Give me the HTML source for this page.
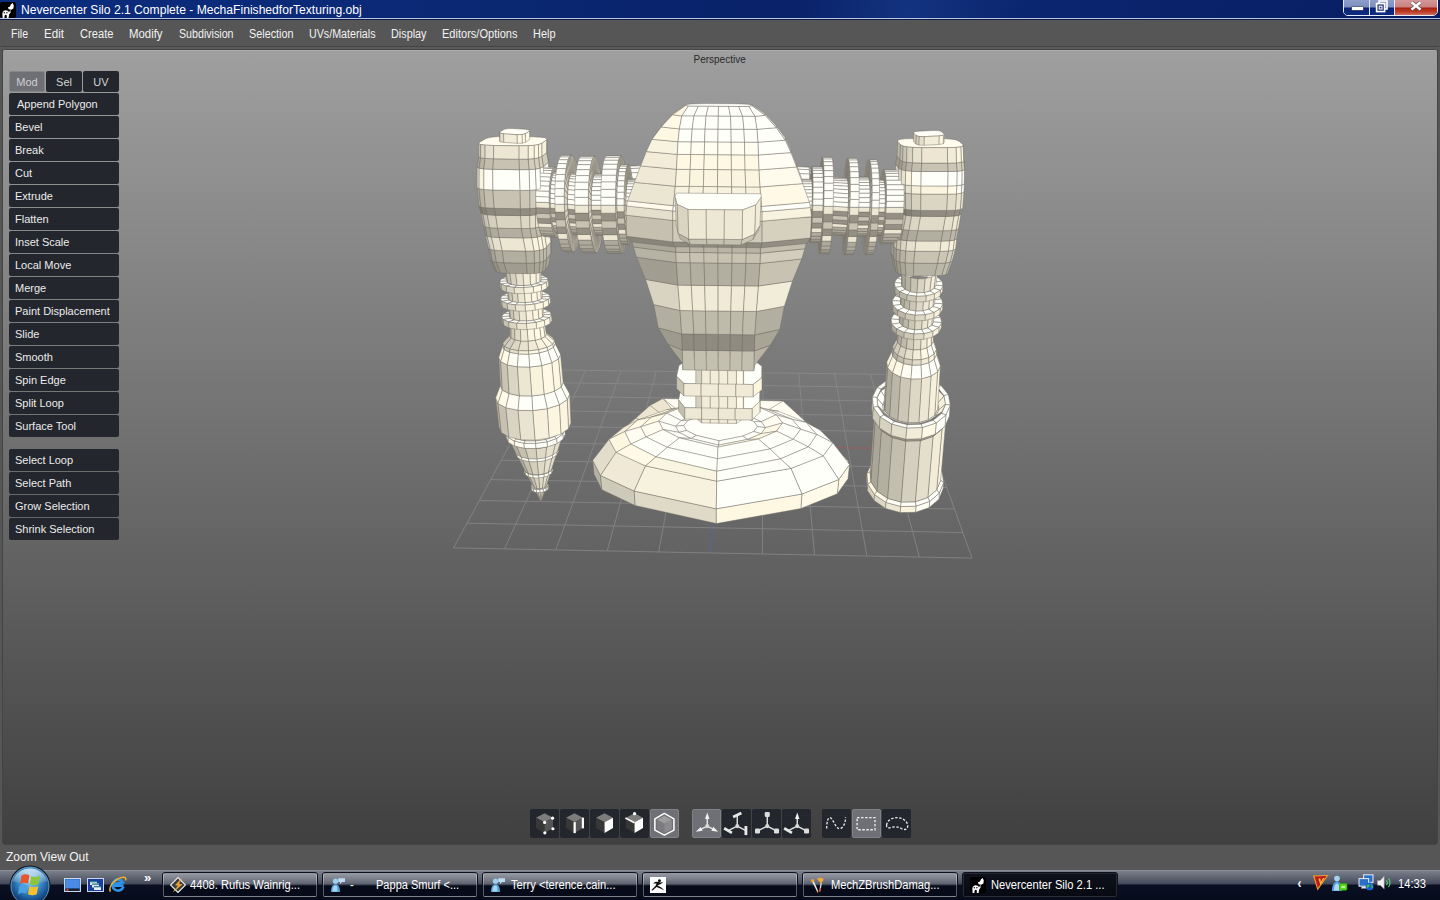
<!DOCTYPE html>
<html><head><meta charset="utf-8"><title>Nevercenter Silo 2.1 Complete - MechaFinishedforTexturing.obj</title>
<style>
*{box-sizing:border-box;margin:0;padding:0}
html,body{width:1440px;height:900px;overflow:hidden;background:#565656;font-family:"Liberation Sans",sans-serif}
.abs{position:absolute}
#title{position:absolute;left:0;top:0;width:1440px;height:20px;background:linear-gradient(100deg,#0c2c7e 0,#0a2874 30%,#092269 55%,#13327f 63%,#0b2670 71%,#071d62 100%);}
#title .ln1{position:absolute;left:0;top:18px;width:1440px;height:1px;background:#b9c4e4}
#title .ln2{position:absolute;left:0;top:19px;width:1440px;height:1px;background:#101c48}
#title .txt{position:absolute;left:20.5px;top:1.7px;height:17px;line-height:17px;font-size:12.5px;color:#fff;white-space:nowrap;transform:scaleX(.969);transform-origin:0 50%}
#menu{position:absolute;left:0;top:20px;width:1440px;height:26px;background:#565656}
#menu span{position:absolute;transform-origin:0 50%;top:6px;height:16px;line-height:16px;font-size:12px;color:#f2f2f2;white-space:nowrap}
#mline{position:absolute;left:1px;top:46px;width:1438px;height:1px;background:#434343}
#mline2{position:absolute;left:1px;top:47px;width:1438px;height:2px;background:#5b5b5b}
#vp{position:absolute;left:2px;top:49px;width:1436px;height:796px;border:1px solid #444;border-radius:3px;background:linear-gradient(#9f9f9f 0%,#404040 100%);overflow:hidden}
#vp .hl{position:absolute;left:0;top:0;width:100%;height:1px;background:#ababab}
.btn{position:absolute;left:9px;width:110px;height:22px;background:#23262d;border-radius:2px;color:#ececec;font-size:11px;line-height:22px;padding-left:6px;white-space:nowrap}
.tab{position:absolute;top:71px;width:36px;height:21px;background:#23262d;border-radius:2px;color:#d4d4d4;font-size:11px;line-height:23px;text-align:center}
.tab.on{background:#6e7075;border:1px solid #85878c;line-height:21px;color:#cfcfcf}
.tb{position:absolute;top:809px;width:29px;height:29px;background:#23262d;border-radius:2px}
.tb.on{background:#6e7075;border:1px solid #808287}
#status{position:absolute;left:6px;top:849px;height:16px;line-height:16px;font-size:12px;color:#f4f4f4;white-space:nowrap}
#task{position:absolute;left:0;top:870px;width:1440px;height:30px;background:linear-gradient(#9ba0a9 0px,#797e8a 1px,#666b78 6px,#434959 14px,#0a1022 15px,#060b1c 30px)}
.tk{position:absolute;top:2px;width:156px;height:26px;border:1px solid #0c0f1a;border-radius:3px;}
.tk i{position:absolute;left:0;top:0;right:0;bottom:0;border:1px solid rgba(255,255,255,.32);border-radius:2px;background:linear-gradient(rgba(255,255,255,.26) 0,rgba(255,255,255,.13) 11px,rgba(0,0,0,.25) 12px,rgba(0,0,0,.1) 24px)}
.tk.on{background:#0a0d16}
.tk.on i{border-color:rgba(255,255,255,.12);background:linear-gradient(#0e111b,#070a12)}
.tk b{position:absolute;transform-origin:0 50%;left:27px;top:4px;height:16px;line-height:16px;font-weight:normal;font-size:12px;color:#fff;white-space:nowrap}
</style></head><body>
<div id="title"><svg width="16" height="16" viewBox="0 0 16 16" style="position:absolute;left:0;top:2px"><rect x="0" y="0" width="16" height="16" rx="2" fill="#000"/><path d="M12.6 1 L13.8 3.6 L13.4 6.6 L11.2 7.8 L8.6 7.2 L8 5.2 L10 4.4 L10.8 2.4Z" fill="#fff"/><path d="M10.4 7.4 L10.6 10.4 L9.4 12.2 L8.6 11.6 L9.4 9.8Z" fill="#fff"/><path d="M2.6 16 L2.4 11.4 C2.6 9 4.6 8.2 6.4 8.4 C8.4 8.6 9.4 10 9.2 11.8 L8.6 16 L6.8 16 L6.8 13.6 C6.4 12.6 5 12.6 4.6 13.6 L4.4 16Z" fill="#fff"/><circle cx="4.3" cy="10.8" r=".7" fill="#000"/><circle cx="6.9" cy="10.8" r=".7" fill="#000"/></svg><div style="position:absolute;left:1343px;top:-2px;width:95px;height:18px;border:1px solid #e6ebf8;border-radius:0 0 5px 5px;overflow:hidden;box-shadow:0 0 0 1px #061440 inset">
<div style="position:absolute;left:0;top:0;width:26px;height:17px;background:linear-gradient(#8fa0cc 0,#7d8fc0 8px,#0a2272 9px,#102c82 16px);border-right:1px solid #dfe5f5"></div>
<div style="position:absolute;left:26px;top:0;width:25px;height:17px;background:linear-gradient(#8fa0cc 0,#7d8fc0 8px,#0a2272 9px,#102c82 16px);border-right:1px solid #dfe5f5"></div>
<div style="position:absolute;left:51px;top:0;width:43px;height:17px;background:linear-gradient(#d69a9a 0,#c88080 8px,#a8200f 9px,#c0402a 13px,#d07060 16px)"></div>
<div style="position:absolute;left:8px;top:8px;width:11px;height:3px;background:#fff;box-shadow:0 0 0 .6px #555"></div>
<svg width="14" height="14" viewBox="0 0 14 14" style="position:absolute;left:31px;top:1px"><rect x="4" y="1" width="8" height="8" fill="none" stroke="#fff" stroke-width="1.6"/><rect x="1.6" y="3.6" width="8" height="8" fill="#2a3c80" stroke="#fff" stroke-width="1.6"/><rect x="4.2" y="6.2" width="2.8" height="2.8" fill="none" stroke="#fff" stroke-width="1"/></svg>
<svg width="12" height="10" viewBox="0 0 12 10" style="position:absolute;left:66px;top:2px"><path d="M1.5 1.2 L10.5 8.6 M10.5 1.2 L1.5 8.6" stroke="#555" stroke-width="3.6"/><path d="M1.5 1.2 L10.5 8.6 M10.5 1.2 L1.5 8.6" stroke="#fff" stroke-width="2.4"/></svg>
</div><div class="txt">Nevercenter Silo 2.1 Complete - MechaFinishedforTexturing.obj</div><div class="ln1"></div><div class="ln2"></div></div>
<div id="menu">
<span style="left:11px;transform:scaleX(0.879)">File</span><span style="left:44px;transform:scaleX(0.967)">Edit</span><span style="left:79.5px;transform:scaleX(0.930)">Create</span><span style="left:129px;transform:scaleX(0.948)">Modify</span><span style="left:178.5px;transform:scaleX(0.888)">Subdivision</span><span style="left:248.5px;transform:scaleX(0.901)">Selection</span><span style="left:308.5px;transform:scaleX(0.890)">UVs/Materials</span><span style="left:390.5px;transform:scaleX(0.902)">Display</span><span style="left:441.5px;transform:scaleX(0.920)">Editors/Options</span><span style="left:532.5px;transform:scaleX(0.911)">Help</span>
</div>
<div id="mline"></div><div id="mline2"></div>
<div id="vp"><div class="hl"></div>
<svg width="1440" height="900" viewBox="0 0 1440 900" style="position:absolute;left:-3px;top:-50px"><g stroke-width="1" opacity="0.75" fill="none"><line x1="550.5" y1="369.9" x2="453.5" y2="547.9" stroke="#8c8c8c"/>
<line x1="550.5" y1="369.9" x2="906.5" y2="374.7" stroke="#8c8c8c"/>
<line x1="585.7" y1="370.4" x2="504.5" y2="548.9" stroke="#8c8c8c"/>
<line x1="543.6" y1="382.6" x2="911.1" y2="387.7" stroke="#8c8c8c"/>
<line x1="621.0" y1="370.9" x2="555.8" y2="549.9" stroke="#8c8c8c"/>
<line x1="536.2" y1="396.1" x2="916.1" y2="401.5" stroke="#8c8c8c"/>
<line x1="656.4" y1="371.3" x2="607.2" y2="550.9" stroke="#8c8c8c"/>
<line x1="528.4" y1="410.5" x2="921.4" y2="416.3" stroke="#8c8c8c"/>
<line x1="691.8" y1="371.8" x2="658.7" y2="551.9" stroke="#8c8c8c"/>
<line x1="520.0" y1="425.9" x2="927.0" y2="432.2" stroke="#8c8c8c"/>
<line x1="727.4" y1="372.3" x2="720.5" y2="445.8" stroke="#8c8c8c"/>
<line x1="720.5" y1="445.8" x2="710.5" y2="553.0" stroke="#5566aa"/>
<line x1="510.9" y1="442.5" x2="720.5" y2="445.8" stroke="#8c8c8c"/>
<line x1="720.5" y1="445.8" x2="933.1" y2="449.2" stroke="#aa5555"/>
<line x1="763.0" y1="372.8" x2="762.4" y2="554.0" stroke="#8c8c8c"/>
<line x1="501.2" y1="460.3" x2="939.7" y2="467.6" stroke="#8c8c8c"/>
<line x1="798.8" y1="373.3" x2="814.5" y2="555.0" stroke="#8c8c8c"/>
<line x1="490.7" y1="479.6" x2="946.8" y2="487.5" stroke="#8c8c8c"/>
<line x1="834.6" y1="373.7" x2="866.9" y2="556.0" stroke="#8c8c8c"/>
<line x1="479.3" y1="500.5" x2="954.5" y2="509.0" stroke="#8c8c8c"/>
<line x1="870.5" y1="374.2" x2="919.4" y2="557.1" stroke="#8c8c8c"/>
<line x1="467.0" y1="523.2" x2="962.9" y2="532.5" stroke="#8c8c8c"/>
<line x1="906.5" y1="374.7" x2="972.0" y2="558.1" stroke="#8c8c8c"/>
<line x1="453.5" y1="547.9" x2="972.0" y2="558.1" stroke="#8c8c8c"/></g><g stroke="#6e6b62" stroke-width="0.5" stroke-linejoin="round"><polygon points="592,461 610,441 622,430 636,418 650,405.5 663,398.5 783,401 805,421 830,442 849,462 720,470" fill="#fffdf2"/><polygon points="592,461 610,441 622,430 636,418 650,405.5 663,398.5 672,409 640,432 612,452" fill="#ece6d0"/><path d="M663,398.5 L690,420 M650,405.5 L680,428 M783,401 L752,420 M805,421 L770,432 M636,418 L668,436" fill="none"/></g><g stroke="#716e64" stroke-width="0.45" stroke-linejoin="round"><polygon points="909.1,450.9 894.5,451.3 895.4,451.4 908.9,451.0" fill="#fffffa"/>
<polygon points="894.5,451.3 881.4,455.6 883.4,455.4 895.4,451.4" fill="#fffcf1"/>
<polygon points="923.2,454.6 909.1,450.9 908.9,451.0 921.9,454.4" fill="#fffffa"/>
<polygon points="881.4,455.6 871.7,463.4 874.5,462.5 883.4,455.4" fill="#fffae7"/>
<polygon points="934.7,461.8 923.2,454.6 921.9,454.4 932.5,461.1" fill="#fffffa"/>
<polygon points="871.7,463.4 866.9,473.4 870.1,471.8 874.5,462.5" fill="#fdf7e2"/>
<polygon points="866.5,479.4 867.4,490.4 867.9,484.4 866.9,473.4" fill="#d2cdbc"/>
<polygon points="941.9,471.6 934.7,461.8 932.5,461.1 939.1,470.1" fill="#fffffa"/>
<polygon points="866.9,473.4 867.9,484.4 871.0,481.9 870.1,471.8" fill="#fbf5e1"/>
<polygon points="943.6,482.6 941.9,471.6 939.1,470.1 940.7,480.2" fill="#fffffa"/>
<polygon points="867.4,490.4 874.1,500.6 874.5,494.6 867.9,484.4" fill="#d5d0be"/>
<polygon points="867.9,484.4 874.5,494.6 877.1,491.2 871.0,481.9" fill="#fdf7e2"/>
<polygon points="938.9,499.2 943.1,488.7 943.6,482.6 939.3,493.1" fill="#fffffa"/>
<polygon points="874.1,500.6 885.6,508.5 886.0,502.4 874.5,494.6" fill="#ded8c6"/>
<polygon points="939.3,493.1 943.6,482.6 940.7,480.2 936.7,489.9" fill="#fffffa"/>
<polygon points="874.5,494.6 886.0,502.4 887.7,498.4 877.1,491.2" fill="#fffae7"/>
<polygon points="929.2,507.6 938.9,499.2 939.3,493.1 929.7,501.4" fill="#fffffa"/>
<polygon points="885.6,508.5 900.2,512.6 900.7,506.5 886.0,502.4" fill="#ebe5d2"/>
<polygon points="929.7,501.4 939.3,493.1 936.7,489.9 927.8,497.5" fill="#fffffa"/>
<polygon points="915.5,512.3 929.2,507.6 929.7,501.4 916.0,506.1" fill="#fffef5"/>
<polygon points="900.2,512.6 915.5,512.3 916.0,506.1 900.7,506.5" fill="#faf4df"/>
<polygon points="886.0,502.4 900.7,506.5 901.2,502.1 887.7,498.4" fill="#fffcf1"/>
<polygon points="916.0,506.1 929.7,501.4 927.8,497.5 915.3,501.8" fill="#fffffa"/>
<polygon points="900.7,506.5 916.0,506.1 915.3,501.8 901.2,502.1" fill="#fffffa"/>
<polygon points="870.1,471.8 871.0,481.9 875.2,421.8 874.3,412.2" fill="#a4a092"/>
<polygon points="723.7,400.2 666.7,409.7 675.2,408.8 723.1,400.9" fill="#fef8e3"/>
<polygon points="778.9,411.4 723.7,400.2 723.1,400.9 769.5,410.2" fill="#fffff9"/>
<polygon points="871.0,481.9 877.1,491.2 881.5,430.8 875.2,421.8" fill="#a9a597"/>
<polygon points="936.7,489.9 940.7,480.2 945.9,419.9 942.0,429.1" fill="#f8f2de"/>
<polygon points="877.1,491.2 887.7,498.4 892.3,437.6 881.5,430.8" fill="#b4b0a1"/>
<polygon points="543.0,481.6 539.7,481.5 539.7,482.4 542.3,482.4" fill="#fffffa"/>
<polygon points="539.7,481.5 536.4,482.0 537.1,482.8 539.7,482.4" fill="#fffffa"/>
<polygon points="545.8,482.3 543.0,481.6 542.3,482.4 544.6,483.0" fill="#fffffa"/>
<polygon points="927.8,497.5 936.7,489.9 942.0,429.1 933.0,436.5" fill="#f1ebd7"/>
<polygon points="536.4,482.0 533.6,483.1 534.9,483.6 537.1,482.8" fill="#fffffa"/>
<polygon points="541.3,502.0 541.3,502.0 545.6,488.1 545.2,489.1" fill="#ddd8c6"/>
<polygon points="547.7,483.4 545.8,482.3 544.6,483.0 546.0,483.9" fill="#fffffa"/>
<polygon points="914.1,381.7 901.0,382.1 902.3,391.2 913.1,390.9" fill="#fffff9"/>
<polygon points="913.1,390.9 902.3,391.2 902.8,392.1 913.0,391.8" fill="#fffffa"/>
<polygon points="543.8,462.4 538.4,462.3 538.4,462.4 543.7,462.5" fill="#fffffa"/>
<polygon points="541.2,502.1 541.3,502.0 545.2,489.1 543.9,490.1" fill="#e5e0cd"/>
<polygon points="887.7,498.4 901.2,502.1 905.9,441.1 892.3,437.6" fill="#c3bfaf"/>
<polygon points="901.0,382.1 889.4,385.3 892.8,393.9 902.3,391.2" fill="#fffffa"/>
<polygon points="902.3,391.2 892.8,393.9 893.7,394.6 902.8,392.1" fill="#fffffa"/>
<polygon points="915.0,375.4 900.2,375.9 901.4,378.8 914.6,378.3" fill="#fffffa"/>
<polygon points="538.4,462.3 533.0,463.1 533.1,463.2 538.4,462.4" fill="#fffffa"/>
<polygon points="540.7,502.1 540.8,502.1 536.0,490.6 534.8,489.8" fill="#b3afa0"/>
<polygon points="541.1,502.1 541.2,502.1 543.9,490.1 542.1,490.8" fill="#e6e1ce"/>
<polygon points="533.6,483.1 531.7,484.5 533.4,484.7 534.9,483.6" fill="#fffffa"/>
<polygon points="548.3,463.5 543.8,462.4 543.7,462.5 548.2,463.5" fill="#fffffa"/>
<polygon points="540.8,502.1 540.9,502.1 537.8,491.0 536.0,490.6" fill="#c5c0b0"/>
<polygon points="541.0,502.1 541.1,502.1 542.1,490.8 540.0,491.1" fill="#e1dbc9"/>
<polygon points="548.4,484.9 547.7,483.4 546.0,483.9 546.6,485.0" fill="#fffffa"/>
<polygon points="900.2,375.9 887.0,380.1 889.7,382.5 901.4,378.8" fill="#fffffa"/>
<polygon points="540.9,502.1 541.0,502.1 540.0,491.1 537.8,491.0" fill="#d5d0be"/>
<polygon points="926.7,384.2 914.1,381.7 913.1,390.9 923.6,393.0" fill="#fffbeb"/>
<polygon points="923.6,393.0 913.1,390.9 913.0,391.8 922.9,393.8" fill="#fffffa"/>
<polygon points="915.3,501.8 927.8,497.5 933.0,436.5 920.3,440.7" fill="#e4dfcc"/>
<polygon points="901.2,502.1 915.3,501.8 920.3,440.7 905.9,441.1" fill="#d4cfbe"/>
<polygon points="533.0,463.1 528.5,464.7 528.6,464.8 533.1,463.2" fill="#fffffa"/>
<polygon points="548.0,489.5 548.7,487.9 548.4,484.9 547.8,486.5" fill="#fffffa"/>
<polygon points="929.3,378.8 915.0,375.4 914.6,378.3 927.2,381.3" fill="#fffffa"/>
<polygon points="531.7,484.5 531.0,486.1 532.9,486.0 533.4,484.7" fill="#fffffa"/>
<polygon points="551.4,465.3 548.3,463.5 548.2,463.5 551.2,465.3" fill="#fffffa"/>
<polygon points="547.8,486.5 548.4,484.9 546.6,485.0 546.1,486.3" fill="#fffffa"/>
<polygon points="666.7,409.7 637.8,419.9 651.2,417.2 675.2,408.8" fill="#fdf7e3"/>
<polygon points="892.8,393.9 885.8,398.6 887.1,399.0 893.7,394.6" fill="#fffffa"/>
<polygon points="889.4,385.3 880.9,390.9 885.8,398.6 892.8,393.9" fill="#fffffa"/>
<polygon points="531.2,489.1 531.9,490.6 531.7,487.6 531.0,486.1" fill="#f7f1dd"/>
<polygon points="887.0,380.1 877.2,387.5 881.1,389.0 889.7,382.5" fill="#fffffa"/>
<polygon points="722.7,399.4 685.3,406.1 694.7,415.2 722.1,410.2" fill="#fffffa"/>
<polygon points="531.0,486.1 531.7,487.6 533.4,487.1 532.9,486.0" fill="#fffffa"/>
<polygon points="546.2,490.9 548.0,489.5 547.8,486.5 545.9,487.9" fill="#fffffa"/>
<polygon points="546.6,419.4 535.6,419.2 535.5,419.4 545.4,419.6" fill="#fffffa"/>
<polygon points="545.9,487.9 547.8,486.5 546.1,486.3 544.6,487.4" fill="#fffffa"/>
<polygon points="932.2,397.3 923.6,393.0 922.9,393.8 931.1,397.8" fill="#fffffa"/>
<polygon points="758.8,407.2 722.7,399.4 722.1,410.2 748.6,416.0" fill="#fffffa"/>
<polygon points="528.5,464.7 525.4,466.9 525.6,467.0 528.6,464.8" fill="#fffffa"/>
<polygon points="937.2,389.3 926.7,384.2 923.6,393.0 932.2,397.3" fill="#fdf7e2"/>
<polygon points="546.1,486.3 546.6,485.0 551.3,470.7 550.4,472.9" fill="#dcd7c5"/>
<polygon points="552.6,467.6 551.4,465.3 551.2,465.3 552.3,467.6" fill="#fffffa"/>
<polygon points="535.6,419.2 524.6,420.7 525.6,420.7 535.5,419.4" fill="#fffff9"/>
<polygon points="531.9,490.6 533.8,491.8 533.5,488.8 531.7,487.6" fill="#fcf6e2"/>
<polygon points="531.7,487.6 533.5,488.8 534.9,488.1 533.4,487.1" fill="#fffffa"/>
<polygon points="543.3,492.0 546.2,490.9 545.9,487.9 543.1,489.0" fill="#fffffa"/>
<polygon points="555.9,421.4 546.6,419.4 545.4,419.6 553.8,421.4" fill="#fffffa"/>
<polygon points="806.0,422.4 778.9,411.4 769.5,410.2 792.0,419.3" fill="#fffffa"/>
<polygon points="543.1,489.0 545.9,487.9 544.6,487.4 542.4,488.3" fill="#fffffa"/>
<polygon points="941.0,385.5 929.3,378.8 927.2,381.3 937.6,387.3" fill="#fffffa"/>
<polygon points="533.8,491.8 536.6,492.5 536.4,489.4 533.5,488.8" fill="#fffcee"/>
<polygon points="533.5,488.8 536.4,489.4 537.1,488.6 534.9,488.1" fill="#fffffa"/>
<polygon points="539.7,489.5 543.1,489.0 542.4,488.3 539.7,488.7" fill="#fffffa"/>
<polygon points="540.0,492.6 543.3,492.0 543.1,489.0 539.7,489.5" fill="#fffffa"/>
<polygon points="536.4,489.4 539.7,489.5 539.7,488.7 537.1,488.6" fill="#fffffa"/>
<polygon points="536.6,492.5 540.0,492.6 539.7,489.5 536.4,489.4" fill="#fffffa"/>
<polygon points="544.6,487.4 546.1,486.3 550.4,472.9 547.7,475.0" fill="#e4dfcc"/>
<polygon points="885.8,398.6 882.5,404.5 884.0,404.7 887.1,399.0" fill="#fffffa"/>
<polygon points="525.4,466.9 524.2,469.4 524.5,469.4 525.6,467.0" fill="#fffffa"/>
<polygon points="880.9,390.9 876.9,398.1 882.5,404.5 885.8,398.6" fill="#fffffa"/>
<polygon points="551.8,473.1 552.8,470.6 552.6,467.6 551.6,470.1" fill="#fffffa"/>
<polygon points="551.6,470.1 552.6,467.6 552.3,467.6 551.3,470.1" fill="#fffffa"/>
<polygon points="524.6,420.7 515.1,423.7 517.1,423.5 525.6,420.7" fill="#fffdf4"/>
<polygon points="533.4,487.1 534.9,488.1 529.6,476.1 526.9,474.4" fill="#b2ae9f"/>
<polygon points="877.2,387.5 872.4,397.0 876.9,397.5 881.1,389.0" fill="#fffffa"/>
<polygon points="675.2,408.8 651.2,417.2 666.6,413.2 685.3,406.1" fill="#f9f3df"/>
<polygon points="542.4,488.3 544.6,487.4 547.7,475.0 543.6,476.5" fill="#e5e0cd"/>
<polygon points="562.4,424.9 555.9,421.4 553.8,421.4 559.5,424.5" fill="#fffffa"/>
<polygon points="722.1,410.2 694.7,415.2 699.2,416.3 721.9,412.1" fill="#fffffa"/>
<polygon points="937.7,403.0 932.2,397.3 931.1,397.8 936.2,403.2" fill="#fffffa"/>
<polygon points="534.9,488.1 537.1,488.6 533.8,477.1 529.6,476.1" fill="#c4bfaf"/>
<polygon points="748.6,416.0 722.1,410.2 721.9,412.1 743.7,417.0" fill="#fffffa"/>
<polygon points="539.7,488.7 542.4,488.3 543.6,476.5 538.7,477.2" fill="#dfdac8"/>
<polygon points="943.9,396.2 937.2,389.3 932.2,397.3 937.7,403.0" fill="#f8f2de"/>
<polygon points="524.4,472.4 525.5,474.8 525.2,471.8 524.2,469.4" fill="#f7f1dd"/>
<polygon points="537.1,488.6 539.7,488.7 538.7,477.2 533.8,477.1" fill="#d4cfbd"/>
<polygon points="524.2,469.4 525.2,471.8 525.5,471.7 524.5,469.4" fill="#fffffa"/>
<polygon points="548.8,475.4 551.8,473.1 551.6,470.1 548.5,472.4" fill="#fffffa"/>
<polygon points="551.3,470.1 552.3,467.6 557.7,451.2 556.3,454.7" fill="#dcd7c5"/>
<polygon points="871.6,407.9 872.6,418.3 873.4,407.3 872.4,397.0" fill="#ccc7b6"/>
<polygon points="792.0,419.3 769.5,410.2 758.8,407.2 776.1,414.8" fill="#fffffa"/>
<polygon points="548.5,472.4 551.6,470.1 551.3,470.1 548.3,472.3" fill="#fffffa"/>
<polygon points="948.4,394.7 941.0,385.5 937.6,387.3 944.0,395.5" fill="#fffffa"/>
<polygon points="882.5,404.5 883.4,411.0 884.9,410.8 884.0,404.7" fill="#fffffa"/>
<polygon points="525.5,474.8 528.5,476.7 528.3,473.6 525.2,471.8" fill="#fcf6e2"/>
<polygon points="685.3,406.1 666.6,413.2 681.2,420.5 694.7,415.2" fill="#fffffa"/>
<polygon points="544.1,477.1 548.8,475.4 548.5,472.4 543.9,474.0" fill="#fffffa"/>
<polygon points="515.1,423.7 508.6,428.0 511.3,427.3 517.1,423.5" fill="#fffcf1"/>
<polygon points="525.2,471.8 528.3,473.6 528.5,473.6 525.5,471.7" fill="#fffffa"/>
<polygon points="876.9,398.1 877.9,405.8 883.4,411.0 882.5,404.5" fill="#fffffa"/>
<polygon points="543.9,474.0 548.5,472.4 548.3,472.3 543.8,473.9" fill="#fffffa"/>
<polygon points="556.9,454.8 558.4,451.2 558.2,448.2 556.7,451.8" fill="#fffffa"/>
<polygon points="564.8,429.3 562.4,424.9 559.5,424.5 561.7,428.5" fill="#fffffa"/>
<polygon points="548.3,472.3 551.3,470.1 556.3,454.7 551.9,457.9" fill="#e4dfcc"/>
<polygon points="872.4,397.0 873.4,407.3 877.8,406.6 876.9,397.5" fill="#fffffa"/>
<polygon points="939.1,409.5 937.7,403.0 936.2,403.2 937.6,409.4" fill="#fffffa"/>
<polygon points="624.0,427.1 609.0,439.2 624.9,431.5 637.8,419.9" fill="#f3edd9"/>
<polygon points="528.5,476.7 533.2,477.8 532.9,474.7 528.3,473.6" fill="#fffcee"/>
<polygon points="776.1,414.8 758.8,407.2 748.6,416.0 761.1,421.7" fill="#fffffa"/>
<polygon points="538.7,477.9 544.1,477.1 543.9,474.0 538.4,474.9" fill="#fffffa"/>
<polygon points="528.3,473.6 532.9,474.7 533.0,474.6 528.5,473.6" fill="#fffffa"/>
<polygon points="538.4,474.9 543.9,474.0 543.8,473.9 538.4,474.8" fill="#fffffa"/>
<polygon points="533.2,477.8 538.7,477.9 538.4,474.9 532.9,474.7" fill="#fffffa"/>
<polygon points="532.9,474.7 538.4,474.9 538.4,474.8 533.0,474.6" fill="#fffffa"/>
<polygon points="945.6,404.0 943.9,396.2 937.7,403.0 939.1,409.5" fill="#f7f1dd"/>
<polygon points="557.2,451.9 558.7,448.2 562.9,435.4 561.1,439.9" fill="#dcd7c5"/>
<polygon points="694.7,415.2 681.2,420.5 688.1,420.6 699.2,416.3" fill="#fffff9"/>
<polygon points="525.5,471.7 528.5,473.6 522.4,459.8 518.0,457.1" fill="#b2ae9f"/>
<polygon points="883.4,411.0 888.5,416.9 889.7,416.4 884.9,410.8" fill="#fffffa"/>
<polygon points="872.6,418.3 879.4,428.0 880.2,416.9 873.4,407.3" fill="#cecab9"/>
<polygon points="543.8,473.9 548.3,472.3 551.9,457.9 545.2,460.3" fill="#e5e0cd"/>
<polygon points="515.9,453.8 517.3,457.3 517.1,454.2 515.6,450.8" fill="#f7f1dd"/>
<polygon points="761.1,421.7 748.6,416.0 743.7,417.0 753.9,421.6" fill="#fffffa"/>
<polygon points="637.8,419.9 624.9,431.5 640.8,426.8 651.2,417.2" fill="#fffae6"/>
<polygon points="950.2,405.1 948.4,394.7 944.0,395.5 945.6,404.6" fill="#fffffa"/>
<polygon points="881.5,430.8 892.3,437.6 891.1,435.4 879.4,428.0" fill="#8f8b80"/>
<polygon points="552.4,458.1 556.9,454.8 556.7,451.8 552.2,455.1" fill="#fffffa"/>
<polygon points="832.8,442.8 820.0,430.1 806.0,422.4 816.7,434.5" fill="#fffffa"/>
<polygon points="508.6,428.0 506.0,432.7 509.0,431.5 511.3,427.3" fill="#fffcef"/>
<polygon points="528.5,473.6 533.0,474.6 529.2,461.3 522.4,459.8" fill="#c4bfaf"/>
<polygon points="563.2,439.1 565.2,434.3 564.8,429.3 562.8,434.1" fill="#fffffa"/>
<polygon points="877.9,405.8 884.1,413.0 888.5,416.9 883.4,411.0" fill="#fffffa"/>
<polygon points="538.4,474.8 543.8,473.9 545.2,460.3 537.2,461.5" fill="#dfdac8"/>
<polygon points="936.1,415.7 939.1,409.5 937.6,409.4 934.7,415.2" fill="#fffffa"/>
<polygon points="533.0,474.6 538.4,474.8 537.2,461.5 529.2,461.3" fill="#d4cfbd"/>
<polygon points="562.8,434.1 564.8,429.3 561.7,428.5 559.9,432.8" fill="#fffffa"/>
<polygon points="873.4,407.3 880.2,416.9 883.9,415.0 877.8,406.6" fill="#fffffa"/>
<polygon points="933.0,436.5 942.0,429.1 945.0,426.2 935.3,434.2" fill="#afab9c"/>
<polygon points="559.9,432.8 561.7,428.5 561.5,425.5 559.7,429.7" fill="#f4eeda"/>
<polygon points="945.0,426.2 949.3,416.2 950.2,405.1 945.9,415.0" fill="#fffffa"/>
<polygon points="651.2,417.2 640.8,426.8 658.7,421.1 666.6,413.2" fill="#fff9e4"/>
<polygon points="816.7,434.5 806.0,422.4 792.0,419.3 800.7,429.2" fill="#fffffa"/>
<polygon points="552.6,455.2 557.2,451.9 561.1,439.9 555.4,444.0" fill="#e4dfcc"/>
<polygon points="517.3,457.3 521.9,460.0 521.7,457.0 517.1,454.2" fill="#fcf6e2"/>
<polygon points="942.1,411.5 945.6,404.0 939.1,409.5 936.1,415.7" fill="#f8f2de"/>
<polygon points="888.5,416.9 897.2,421.4 897.9,420.7 889.7,416.4" fill="#fffffa"/>
<polygon points="545.5,460.6 552.4,458.1 552.2,455.1 545.2,457.6" fill="#fffffa"/>
<polygon points="892.3,437.6 905.9,441.1 905.9,439.2 891.1,435.4" fill="#969386"/>
<polygon points="884.0,404.7 884.9,410.8 887.7,367.7 886.7,361.9" fill="#a4a093"/>
<polygon points="666.6,413.2 658.7,421.1 675.6,426.3 681.2,420.5" fill="#fffffa"/>
<polygon points="879.4,428.0 891.1,435.4 891.9,424.1 880.2,416.9" fill="#d7d2c0"/>
<polygon points="594.1,474.3 601.9,489.7 600.5,475.5 592.7,460.4" fill="#b6b2a3"/>
<polygon points="929.1,420.6 936.1,415.7 934.7,415.2 928.1,419.9" fill="#fffffa"/>
<polygon points="920.3,440.7 933.0,436.5 935.3,434.2 921.5,438.7" fill="#a7a396"/>
<polygon points="681.2,420.5 675.6,426.3 683.6,425.4 688.1,420.6" fill="#fffffa"/>
<polygon points="945.9,415.0 950.2,405.1 945.6,404.6 941.8,413.3" fill="#fffffa"/>
<polygon points="800.7,429.2 792.0,419.3 776.1,414.8 782.6,422.9" fill="#fffffa"/>
<polygon points="521.9,460.0 528.9,461.6 528.7,458.6 521.7,457.0" fill="#fffcee"/>
<polygon points="905.9,441.1 920.3,440.7 921.5,438.7 905.9,439.2" fill="#9f9b8e"/>
<polygon points="506.4,437.7 508.4,442.4 508.0,437.3 506.0,432.7" fill="#f7f1dd"/>
<polygon points="537.2,461.8 545.5,460.6 545.2,457.6 536.9,458.8" fill="#fffffa"/>
<polygon points="516.6,454.4 521.3,457.2 516.5,446.3 510.7,442.9" fill="#b2ae9f"/>
<polygon points="506.0,432.7 508.0,437.3 510.8,435.6 509.0,431.5" fill="#fffcf1"/>
<polygon points="782.6,422.9 776.1,414.8 761.1,421.7 765.5,427.7" fill="#fffdf2"/>
<polygon points="897.2,421.4 908.0,423.7 908.1,422.8 897.9,420.7" fill="#fffffa"/>
<polygon points="528.9,461.6 537.2,461.8 536.9,458.8 528.7,458.6" fill="#fffffa"/>
<polygon points="509.0,431.5 510.8,435.6 510.6,432.6 508.8,428.5" fill="#b6b2a3"/>
<polygon points="765.5,427.7 761.1,421.7 753.9,421.6 757.5,426.6" fill="#fffffa"/>
<polygon points="557.0,443.6 563.2,439.1 562.8,434.1 556.6,438.5" fill="#fffffa"/>
<polygon points="545.4,457.8 552.6,455.2 555.4,444.0 546.5,447.0" fill="#e5e0cd"/>
<polygon points="935.3,434.2 945.0,426.2 945.9,415.0 936.2,422.9" fill="#fffffa"/>
<polygon points="556.6,438.5 562.8,434.1 559.9,432.8 554.3,436.7" fill="#fffffa"/>
<polygon points="880.2,416.9 891.9,424.1 894.2,421.4 883.9,415.0" fill="#fffffa"/>
<polygon points="919.2,423.4 929.1,420.6 928.1,419.9 918.8,422.5" fill="#fffffa"/>
<polygon points="554.3,436.7 559.9,432.8 559.7,429.7 554.1,433.6" fill="#fcf6e2"/>
<polygon points="568.5,428.7 570.9,422.9 569.7,394.0 567.2,399.6" fill="#f2edd9"/>
<polygon points="908.0,423.7 919.2,423.4 918.8,422.5 908.1,422.8" fill="#fffffa"/>
<polygon points="884.9,410.8 889.7,416.4 892.5,373.0 887.7,367.7" fill="#ada99b"/>
<polygon points="891.1,435.4 905.9,439.2 906.8,427.9 891.9,424.1" fill="#e3decb"/>
<polygon points="521.3,457.2 528.4,458.8 525.4,448.3 516.5,446.3" fill="#c4bfaf"/>
<polygon points="592.7,460.4 600.5,475.5 616.1,452.4 609.0,439.2" fill="#e2ddca"/>
<polygon points="684.8,407.7 701.6,407.9 718.4,408.2 735.2,408.4 752.1,408.7 759.9,401.1 760.1,389.2 752.3,382.0 737.0,379.1 706.1,378.6 690.1,381.2 681.0,388.1 678.6,399.9" fill="#fffffa"/>
<polygon points="536.9,459.0 545.4,457.8 546.5,447.0 536.0,448.6" fill="#dfdac8"/>
<polygon points="936.2,422.9 945.9,415.0 941.8,413.3 933.2,420.3" fill="#fffffa"/>
<polygon points="719.1,440.8 742.8,436.1 753.7,431.5 757.5,426.6 753.9,421.6 743.7,417.0 721.9,412.1 699.2,416.3 688.1,420.6 683.6,425.4 686.4,430.5 696.3,435.4" fill="#fffffa"/>
<polygon points="837.3,493.8 848.0,478.7 849.5,464.6 838.8,479.5" fill="#fffae8"/>
<polygon points="921.5,438.7 935.3,434.2 936.2,422.9 922.4,427.5" fill="#fffae7"/>
<polygon points="528.4,458.8 536.9,459.0 536.0,448.6 525.4,448.3" fill="#d4cfbd"/>
<polygon points="934.7,415.2 937.6,409.4 940.4,366.1 937.6,371.7" fill="#fbf5e0"/>
<polygon points="905.9,439.2 921.5,438.7 922.4,427.5 906.8,427.9" fill="#f2ecd9"/>
<polygon points="508.4,442.4 514.7,446.1 514.3,441.0 508.0,437.3" fill="#fcf6e2"/>
<polygon points="891.9,424.1 906.8,427.9 907.3,424.7 894.2,421.4" fill="#fffffa"/>
<polygon points="508.0,437.3 514.3,441.0 516.4,438.9 510.8,435.6" fill="#fffdf4"/>
<polygon points="510.8,435.6 516.4,438.9 516.2,435.9 510.6,432.6" fill="#c8c3b2"/>
<polygon points="547.4,446.9 557.0,443.6 556.6,438.5 547.0,441.8" fill="#fffffa"/>
<polygon points="545.7,439.6 554.3,436.7 554.1,433.6 545.5,436.6" fill="#fef8e3"/>
<polygon points="547.0,441.8 556.6,438.5 554.3,436.7 545.7,439.6" fill="#fffffa"/>
<polygon points="922.4,427.5 936.2,422.9 933.2,420.3 921.0,424.3" fill="#fffffa"/>
<polygon points="675.6,426.3 678.9,432.4 686.4,430.5 683.6,425.4" fill="#fffffa"/>
<polygon points="889.7,416.4 897.9,420.7 900.7,377.0 892.5,373.0" fill="#bbb6a7"/>
<polygon points="906.8,427.9 922.4,427.5 921.0,424.3 907.3,424.7" fill="#fffffa"/>
<polygon points="609.0,439.2 616.1,452.4 630.9,444.1 624.9,431.5" fill="#fdf7e2"/>
<polygon points="567.2,399.6 569.7,394.0 563.2,382.4 561.1,387.0" fill="#fffffa"/>
<polygon points="536.0,448.6 546.5,447.0 547.4,446.9 535.9,448.6" fill="#9d998c"/>
<polygon points="498.9,427.1 501.3,432.6 498.0,403.4 495.6,398.0" fill="#b4b0a1"/>
<polygon points="658.7,421.1 663.0,429.5 678.9,432.4 675.6,426.3" fill="#fffffa"/>
<polygon points="838.8,479.5 849.5,464.6 832.8,442.8 823.2,455.8" fill="#fffffa"/>
<polygon points="761.0,433.7 765.5,427.7 757.5,426.6 753.7,431.5" fill="#fffffa"/>
<polygon points="928.1,419.9 934.7,415.2 937.6,371.7 931.0,376.1" fill="#f6f1dc"/>
<polygon points="624.9,431.5 630.9,444.1 646.1,437.0 640.8,426.8" fill="#fffdf1"/>
<polygon points="516.4,438.9 525.1,440.9 524.9,437.8 516.2,435.9" fill="#dad5c3"/>
<polygon points="514.7,446.1 524.3,448.3 524.0,443.2 514.3,441.0" fill="#fffcee"/>
<polygon points="514.3,441.0 524.0,443.2 525.1,440.9 516.4,438.9" fill="#fffff9"/>
<polygon points="535.4,441.1 545.7,439.6 545.5,436.6 535.2,438.0" fill="#f7f2dd"/>
<polygon points="560.9,434.1 568.5,428.7 567.2,399.6 559.4,404.8" fill="#fbf5e0"/>
<polygon points="640.8,426.8 646.1,437.0 663.0,429.5 658.7,421.1" fill="#fffcef"/>
<polygon points="535.9,448.6 547.4,446.9 547.0,441.8 535.5,443.4" fill="#fffffa"/>
<polygon points="535.5,443.4 547.0,441.8 545.7,439.6 535.4,441.1" fill="#fffffa"/>
<polygon points="683.8,383.5 701.1,383.7 718.4,384.0 735.8,384.2 753.1,384.5 762.0,377.5 762.1,366.6 753.9,359.9 737.7,357.2 705.3,356.7 688.5,359.1 679.0,365.4 676.6,376.3" fill="#fffffa"/>
<polygon points="525.1,440.9 535.4,441.1 535.2,438.0 524.9,437.8" fill="#ebe6d2"/>
<polygon points="897.9,420.7 908.1,422.8 911.0,379.0 900.7,377.0" fill="#ccc7b6"/>
<polygon points="524.3,448.3 535.9,448.6 535.5,443.4 524.0,443.2" fill="#fffffa"/>
<polygon points="524.0,443.2 535.5,443.4 535.4,441.1 525.1,440.9" fill="#fffffa"/>
<polygon points="886.7,361.9 887.7,367.7 892.7,356.0 892.0,351.3" fill="#f8f3de"/>
<polygon points="776.6,431.2 782.6,422.9 765.5,427.7 761.0,433.7" fill="#fffae8"/>
<polygon points="918.8,422.5 928.1,419.9 931.0,376.1 921.6,378.7" fill="#ece6d3"/>
<polygon points="908.1,422.8 918.8,422.5 921.6,378.7 911.0,379.0" fill="#ddd8c5"/>
<polygon points="823.2,455.8 832.8,442.8 816.7,434.5 808.3,446.9" fill="#fffffa"/>
<polygon points="793.3,439.3 800.7,429.2 782.6,422.9 776.6,431.2" fill="#fffffa"/>
<polygon points="808.3,446.9 816.7,434.5 800.7,429.2 793.3,439.3" fill="#fffffa"/>
<polygon points="940.4,366.1 939.0,360.3 935.4,350.0 936.5,354.7" fill="#fffffa"/>
<polygon points="561.1,387.0 563.2,382.4 560.6,354.5 558.4,358.8" fill="#f5f0db"/>
<polygon points="495.6,398.0 498.0,403.4 502.4,390.1 500.4,385.6" fill="#fbf5e1"/>
<polygon points="892.0,351.3 892.7,356.0 893.6,351.0 892.8,346.4" fill="#a9a598"/>
<polygon points="501.3,432.6 508.9,437.1 505.9,407.7 498.0,403.4" fill="#c6c1b1"/>
<polygon points="678.9,432.4 691.0,438.5 696.3,435.4 686.4,430.5" fill="#fffffa"/>
<polygon points="759.9,412.3 760.1,400.1 760.1,389.2 759.9,401.1" fill="#f2ecd8"/>
<polygon points="559.4,404.8 567.2,399.6 561.1,387.0 554.4,391.2" fill="#fffffa"/>
<polygon points="887.7,367.7 892.5,373.0 896.8,360.4 892.7,356.0" fill="#faf4e0"/>
<polygon points="549.1,438.1 560.9,434.1 559.4,404.8 547.3,408.7" fill="#fcf6e1"/>
<polygon points="747.7,439.4 761.0,433.7 753.7,431.5 742.8,436.1" fill="#fffffa"/>
<polygon points="937.6,371.7 940.4,366.1 936.5,354.7 934.1,359.2" fill="#fffffa"/>
<polygon points="536.2,308.0 526.9,307.8 526.8,310.2 533.3,310.3" fill="#fffffa"/>
<polygon points="743.3,418.4 743.6,410.4 743.6,353.7 743.3,360.7" fill="#fef8e3"/>
<polygon points="892.8,346.4 893.6,351.0 897.5,342.5 896.8,338.7" fill="#cdc8b8"/>
<polygon points="554.5,340.8 552.4,337.6 544.9,332.0 546.4,334.2" fill="#fef8e3"/>
<polygon points="526.9,307.8 517.5,308.8 520.3,310.8 526.8,310.2" fill="#fffffa"/>
<polygon points="544.1,309.3 536.2,308.0 533.3,310.3 538.8,311.2" fill="#fffffa"/>
<polygon points="601.9,489.7 635.2,505.5 634.2,491.1 600.5,475.5" fill="#cecab9"/>
<polygon points="892.7,356.0 896.8,360.4 897.6,355.1 893.6,351.0" fill="#b2ae9f"/>
<polygon points="663.0,429.5 679.4,437.9 691.0,438.5 678.9,432.4" fill="#fffffa"/>
<polygon points="918.4,307.9 908.7,308.2 911.1,312.1 917.7,311.9" fill="#fffffa"/>
<polygon points="500.4,385.6 502.4,390.1 500.7,361.6 498.7,357.5" fill="#b7b3a4"/>
<polygon points="936.3,349.6 935.2,345.1 932.4,337.5 933.2,341.3" fill="#fffffa"/>
<polygon points="558.4,358.8 560.6,354.5 555.2,343.8 553.3,347.3" fill="#fffffa"/>
<polygon points="892.5,373.0 900.7,377.0 903.6,363.6 896.8,360.4" fill="#fff9e5"/>
<polygon points="908.7,308.2 900.1,310.4 905.2,313.7 911.1,312.1" fill="#fffffa"/>
<polygon points="508.9,437.1 520.8,439.8 518.1,410.3 505.9,407.7" fill="#d9d3c2"/>
<polygon points="535.0,440.1 549.1,438.1 547.3,408.7 532.7,410.6" fill="#f6f0dc"/>
<polygon points="498.0,403.4 505.9,407.7 509.1,393.6 502.4,390.1" fill="#fffae6"/>
<polygon points="927.8,309.5 918.4,307.9 917.7,311.9 924.1,313.0" fill="#fffffa"/>
<polygon points="554.4,391.2 561.1,387.0 558.4,358.8 551.8,362.7" fill="#fef8e3"/>
<polygon points="934.1,359.2 936.5,354.7 936.3,349.6 934.0,354.0" fill="#fff9e6"/>
<polygon points="517.5,308.8 509.5,310.8 514.7,312.2 520.3,310.8" fill="#fffffa"/>
<polygon points="758.4,439.1 776.6,431.2 761.0,433.7 747.7,439.4" fill="#fff9e4"/>
<polygon points="931.0,376.1 937.6,371.7 934.1,359.2 928.7,362.8" fill="#fffffa"/>
<polygon points="547.3,408.7 559.4,404.8 554.4,391.2 544.1,394.4" fill="#fffffa"/>
<polygon points="549.5,311.6 544.1,309.3 538.8,311.2 542.5,312.8" fill="#fffffa"/>
<polygon points="762.0,389.7 762.1,378.4 762.1,366.6 762.0,377.5" fill="#f4efdb"/>
<polygon points="553.3,347.3 555.2,343.8 554.5,340.8 552.6,344.2" fill="#fdf7e2"/>
<polygon points="893.6,351.0 897.6,355.1 900.8,345.9 897.5,342.5" fill="#d0cbba"/>
<polygon points="900.1,310.4 893.9,314.2 901.0,316.2 905.2,313.7" fill="#fffffa"/>
<polygon points="520.8,439.8 535.0,440.1 532.7,410.6 518.1,410.3" fill="#e9e4d1"/>
<polygon points="505.0,339.8 502.7,343.2 509.8,335.8 511.4,333.5" fill="#ccc7b6"/>
<polygon points="900.7,377.0 911.0,379.0 912.1,365.2 903.6,363.6" fill="#fffdf2"/>
<polygon points="896.8,360.4 903.6,363.6 904.2,358.3 897.6,355.1" fill="#c0bcac"/>
<polygon points="935.5,312.8 927.8,309.5 924.1,313.0 929.4,315.3" fill="#fffffa"/>
<polygon points="625.3,221.3 626.1,222.5 630.1,227.6 629.2,226.2" fill="#928f83"/>
<polygon points="534.8,290.4 525.5,290.2 525.5,292.4 531.9,292.5" fill="#fffffa"/>
<polygon points="896.8,338.7 897.5,342.5 899.3,328.6 898.7,325.1" fill="#a8a496"/>
<polygon points="600.5,475.5 634.2,491.1 645.5,465.9 616.1,452.4" fill="#efe9d5"/>
<polygon points="552.6,344.2 554.5,340.8 546.4,334.2 545.0,336.6" fill="#fff9e5"/>
<polygon points="646.1,437.0 667.3,447.3 679.4,437.9 663.0,429.5" fill="#fffff8"/>
<polygon points="629.2,226.2 630.1,227.6 652.0,228.6 651.2,227.2" fill="#9e9a8d"/>
<polygon points="934.0,354.0 936.3,349.6 933.2,341.3 931.3,345.0" fill="#fffffa"/>
<polygon points="921.6,378.7 931.0,376.1 928.7,362.8 920.9,364.9" fill="#fffffa"/>
<polygon points="800.9,508.5 837.3,493.8 838.8,479.5 801.9,494.0" fill="#fffbeb"/>
<polygon points="691.0,438.5 718.7,445.1 719.1,440.8 696.3,435.4" fill="#fffffa"/>
<polygon points="525.5,290.2 516.2,291.1 518.9,293.1 525.5,292.4" fill="#fffffa"/>
<polygon points="911.0,379.0 921.6,378.7 920.9,364.9 912.1,365.2" fill="#fffffa"/>
<polygon points="928.7,362.8 934.1,359.2 934.0,354.0 928.7,357.5" fill="#fcf6e1"/>
<polygon points="542.7,291.6 534.8,290.4 531.9,292.5 537.5,293.4" fill="#fffffa"/>
<polygon points="718.7,445.1 747.7,439.4 742.8,436.1 719.1,440.8" fill="#fffffa"/>
<polygon points="509.5,310.8 503.9,313.5 510.8,314.1 514.7,312.2" fill="#fffffa"/>
<polygon points="498.7,357.5 500.7,361.6 504.2,349.6 502.5,346.2" fill="#fbf5e0"/>
<polygon points="893.9,314.2 891.0,319.0 899.1,319.5 901.0,316.2" fill="#fffffa"/>
<polygon points="505.9,407.7 518.1,410.3 519.4,395.8 509.1,393.6" fill="#fffdf3"/>
<polygon points="897.6,355.1 904.2,358.3 906.4,348.5 900.8,345.9" fill="#d8d3c1"/>
<polygon points="502.4,390.1 509.1,393.6 507.3,364.9 500.7,361.6" fill="#c9c4b3"/>
<polygon points="903.6,363.6 912.1,365.2 912.5,359.8 904.2,358.3" fill="#d1ccbb"/>
<polygon points="551.4,314.5 549.5,311.6 542.5,312.8 543.9,314.8" fill="#fffffa"/>
<polygon points="630.9,444.1 656.0,456.9 667.3,447.3 646.1,437.0" fill="#fffffa"/>
<polygon points="532.7,410.6 547.3,408.7 544.1,394.4 531.8,396.0" fill="#fffffa"/>
<polygon points="770.0,449.0 793.3,439.3 776.6,431.2 758.4,439.1" fill="#fffffa"/>
<polygon points="551.8,362.7 558.4,358.8 553.3,347.3 547.7,350.5" fill="#fffffa"/>
<polygon points="616.1,452.4 645.5,465.9 656.0,456.9 630.9,444.1" fill="#fff9e5"/>
<polygon points="545.0,336.6 546.4,334.2 544.3,320.8 543.0,322.9" fill="#f8f2de"/>
<polygon points="920.9,364.9 928.7,362.8 928.7,357.5 921.1,359.6" fill="#f1ebd7"/>
<polygon points="516.2,291.1 508.1,293.0 513.3,294.4 518.9,293.1" fill="#fffffa"/>
<polygon points="544.1,394.4 554.4,391.2 551.8,362.7 541.7,365.6" fill="#fff9e4"/>
<polygon points="928.7,357.5 934.0,354.0 931.3,345.0 926.8,347.9" fill="#fffff9"/>
<polygon points="502.5,346.2 504.2,349.6 504.4,346.5 502.7,343.2" fill="#c0bbab"/>
<polygon points="897.5,342.5 900.8,345.9 902.5,331.8 899.3,328.6" fill="#b1ac9e"/>
<polygon points="940.4,317.3 935.5,312.8 929.4,315.3 932.7,318.4" fill="#fffffa"/>
<polygon points="912.1,365.2 920.9,364.9 921.1,359.6 912.5,359.8" fill="#e2ddca"/>
<polygon points="787.6,228.2 787.4,229.6 807.3,228.6 807.7,227.2" fill="#a29e90"/>
<polygon points="518.1,410.3 532.7,410.6 531.8,396.0 519.4,395.8" fill="#fffffa"/>
<polygon points="548.1,293.8 542.7,291.6 537.5,293.4 541.2,294.9" fill="#fffffa"/>
<polygon points="695.8,417.7 701.6,422.9 701.6,364.6 695.8,360.1" fill="#d6d1bf"/>
<polygon points="807.7,227.2 807.3,228.6 811.4,223.5 811.7,222.4" fill="#cfcab9"/>
<polygon points="502.7,343.2 504.4,346.5 511.1,338.1 509.8,335.8" fill="#cec9b8"/>
<polygon points="890.7,324.5 891.6,329.7 891.9,324.1 891.0,319.0" fill="#a4a093"/>
<polygon points="547.7,350.5 553.3,347.3 552.6,344.2 547.1,347.4" fill="#fffcef"/>
<polygon points="624.5,218.5 625.3,221.3 629.2,226.2 628.2,222.8" fill="#9c988b"/>
<polygon points="801.9,494.0 838.8,479.5 823.2,455.8 790.9,468.4" fill="#fffffa"/>
<polygon points="904.2,358.3 912.5,359.8 913.3,349.8 906.4,348.5" fill="#e4decc"/>
<polygon points="736.4,423.5 743.3,418.4 743.3,360.7 736.4,365.1" fill="#fffae8"/>
<polygon points="547.1,347.4 552.6,344.2 545.0,336.6 541.1,338.7" fill="#fef8e3"/>
<polygon points="931.3,345.0 933.2,341.3 933.1,327.5 931.3,330.9" fill="#fef8e4"/>
<polygon points="919.6,289.7 909.9,290.0 912.3,293.9 918.9,293.7" fill="#fffffa"/>
<polygon points="628.2,222.8 629.2,226.2 651.2,227.2 650.4,223.7" fill="#ada99b"/>
<polygon points="533.4,273.9 524.2,273.7 524.2,275.7 530.7,275.8" fill="#fffffa"/>
<polygon points="921.1,359.6 928.7,357.5 926.8,347.9 920.5,349.6" fill="#fff9e5"/>
<polygon points="909.9,290.0 901.3,292.2 906.4,295.4 912.3,293.9" fill="#fffffa"/>
<polygon points="780.4,458.9 808.3,446.9 793.3,439.3 770.0,449.0" fill="#fffffa"/>
<polygon points="912.5,359.8 921.1,359.6 920.5,349.6 913.3,349.8" fill="#f2ecd8"/>
<polygon points="891.0,319.0 891.9,324.1 899.7,323.0 899.1,319.5" fill="#fffffa"/>
<polygon points="524.2,273.7 515.1,274.6 517.6,276.3 524.2,275.7" fill="#fffffa"/>
<polygon points="678.6,411.0 684.8,419.1 684.8,407.7 678.6,399.9" fill="#c3bfae"/>
<polygon points="928.9,291.2 919.6,289.7 918.9,293.7 925.3,294.7" fill="#fffffa"/>
<polygon points="503.9,313.5 501.7,316.6 509.4,316.2 510.8,314.1" fill="#fffffa"/>
<polygon points="550.1,323.6 551.9,320.4 551.4,314.5 549.6,317.5" fill="#f4eeda"/>
<polygon points="541.1,275.0 533.4,273.9 530.7,275.8 536.2,276.6" fill="#fffffa"/>
<polygon points="509.8,335.8 511.1,338.1 511.0,324.3 509.8,322.2" fill="#bab6a6"/>
<polygon points="629.9,166.1 628.9,166.3 651.1,165.3 652.0,165.0" fill="#fffcef"/>
<polygon points="509.1,393.6 519.4,395.8 517.4,366.8 507.3,364.9" fill="#dbd6c4"/>
<polygon points="900.8,345.9 906.4,348.5 907.8,334.2 902.5,331.8" fill="#bebaaa"/>
<polygon points="790.9,468.4 823.2,455.8 808.3,446.9 780.4,458.9" fill="#fffffa"/>
<polygon points="531.8,396.0 544.1,394.4 541.7,365.6 529.6,367.1" fill="#f9f3de"/>
<polygon points="541.1,338.7 545.0,336.6 543.0,322.9 539.3,324.9" fill="#fffae6"/>
<polygon points="508.1,293.0 502.5,295.6 509.5,296.2 513.3,294.4" fill="#fffffa"/>
<polygon points="549.6,317.5 551.4,314.5 543.9,314.8 542.6,316.9" fill="#fffffa"/>
<polygon points="679.4,437.9 718.0,447.1 718.7,445.1 691.0,438.5" fill="#fffffa"/>
<polygon points="500.7,361.6 507.3,364.9 509.8,352.3 504.2,349.6" fill="#fffae6"/>
<polygon points="901.3,292.2 895.1,295.9 902.2,297.9 906.4,295.4" fill="#fffffa"/>
<polygon points="926.8,347.9 931.3,345.0 931.3,330.9 927.1,333.6" fill="#faf4e0"/>
<polygon points="941.7,322.5 940.4,317.3 932.7,318.4 933.5,321.9" fill="#fffffa"/>
<polygon points="752.1,420.1 759.9,412.3 759.9,401.1 752.1,408.7" fill="#f8f3de"/>
<polygon points="550.1,296.5 548.1,293.8 541.2,294.9 542.5,296.8" fill="#fffffa"/>
<polygon points="718.0,447.1 758.4,439.1 747.7,439.4 718.7,445.1" fill="#fff9e5"/>
<polygon points="701.6,422.9 710.3,423.1 710.3,364.8 701.6,364.6" fill="#f2edd9"/>
<polygon points="519.4,395.8 531.8,396.0 529.6,367.1 517.4,366.8" fill="#ece7d3"/>
<polygon points="541.7,365.6 551.8,362.7 547.7,350.5 539.0,353.0" fill="#fffffa"/>
<polygon points="710.3,423.1 719.0,423.2 719.0,364.9 710.3,364.8" fill="#f2edd9"/>
<polygon points="504.4,346.5 509.9,349.1 515.0,339.9 511.1,338.1" fill="#d3cebd"/>
<polygon points="515.1,274.6 507.1,276.3 512.0,277.5 517.6,276.3" fill="#fffffa"/>
<polygon points="504.2,349.6 509.8,352.3 509.9,349.1 504.4,346.5" fill="#d1ccbb"/>
<polygon points="808.1,223.8 807.7,227.2 811.7,222.4 812.1,219.5" fill="#d8d3c1"/>
<polygon points="719.0,423.2 727.7,423.3 727.7,365.0 719.0,364.9" fill="#f2edd9"/>
<polygon points="623.8,214.1 624.5,218.5 628.2,222.8 627.4,217.5" fill="#a7a395"/>
<polygon points="787.9,224.7 787.6,228.2 807.7,227.2 808.1,223.8" fill="#b1ac9e"/>
<polygon points="936.7,294.4 928.9,291.2 925.3,294.7 930.6,296.9" fill="#fffffa"/>
<polygon points="727.7,423.3 736.4,423.5 736.4,365.1 727.7,365.0" fill="#f2edd9"/>
<polygon points="542.6,316.9 543.9,314.8 542.9,302.8 541.7,304.9" fill="#f4eeda"/>
<polygon points="906.4,348.5 913.3,349.8 914.3,335.4 907.8,334.2" fill="#cfcab9"/>
<polygon points="546.3,277.0 541.1,275.0 536.2,276.6 539.9,278.0" fill="#fffffa"/>
<polygon points="538.6,349.7 547.1,347.4 541.1,338.7 535.1,340.3" fill="#f8f2de"/>
<polygon points="899.1,319.5 899.7,323.0 900.5,310.1 899.9,306.7" fill="#a4a092"/>
<polygon points="539.0,353.0 547.7,350.5 547.1,347.4 538.6,349.7" fill="#fffdf1"/>
<polygon points="891.6,329.7 896.2,334.4 896.6,328.8 891.9,324.1" fill="#ada99a"/>
<polygon points="920.5,349.6 926.8,347.9 927.1,333.6 921.1,335.1" fill="#f0ead6"/>
<polygon points="625.0,171.5 624.3,173.5 628.0,168.7 628.9,166.3" fill="#d8d3c2"/>
<polygon points="511.1,338.1 515.0,339.9 514.7,326.0 511.0,324.3" fill="#ccc7b6"/>
<polygon points="627.4,217.5 628.2,222.8 650.4,223.7 649.7,218.2" fill="#bebaaa"/>
<polygon points="913.3,349.8 920.5,349.6 921.1,335.1 914.3,335.4" fill="#e0dbc9"/>
<polygon points="788.6,166.0 788.8,166.3 809.1,167.3 808.7,167.1" fill="#fffef5"/>
<polygon points="891.9,324.1 896.6,328.8 902.9,326.2 899.7,323.0" fill="#fffffa"/>
<polygon points="535.1,340.3 541.1,338.7 539.3,324.9 533.7,326.4" fill="#fffae8"/>
<polygon points="895.1,295.9 892.2,300.6 900.3,301.1 902.2,297.9" fill="#fffffa"/>
<polygon points="502.2,322.6 503.8,325.6 503.3,319.5 501.7,316.6" fill="#b6b1a3"/>
<polygon points="628.9,166.3 628.0,168.7 650.4,167.7 651.1,165.3" fill="#fffffa"/>
<polygon points="501.7,316.6 503.3,319.5 510.5,318.3 509.4,316.2" fill="#fffffa"/>
<polygon points="507.3,364.9 517.4,366.8 518.4,353.9 509.8,352.3" fill="#fffdf3"/>
<polygon points="812.5,215.1 812.1,219.5 812.6,215.1 812.9,211.6" fill="#f2edd9"/>
<polygon points="509.9,349.1 518.4,350.7 520.9,341.0 515.0,339.9" fill="#dcd7c5"/>
<polygon points="938.7,333.1 941.3,328.1 941.7,322.5 939.0,327.4" fill="#fbf5e0"/>
<polygon points="502.5,295.6 500.3,298.5 508.0,298.2 509.5,296.2" fill="#fffffa"/>
<polygon points="529.6,367.1 541.7,365.6 539.0,353.0 528.7,354.2" fill="#fffffa"/>
<polygon points="548.7,305.5 550.5,302.5 550.1,296.5 548.3,299.4" fill="#f4eeda"/>
<polygon points="528.5,350.9 538.6,349.7 535.1,340.3 528.0,341.1" fill="#f0ead6"/>
<polygon points="544.3,320.3 549.6,317.5 542.6,316.9 538.8,318.8" fill="#fffffa"/>
<polygon points="544.8,326.4 550.1,323.6 549.6,317.5 544.3,320.3" fill="#fcf6e2"/>
<polygon points="939.0,327.4 941.7,322.5 933.5,321.9 931.7,325.2" fill="#fffffa"/>
<polygon points="509.4,316.2 510.5,318.3 509.6,306.2 508.4,304.2" fill="#b6b1a2"/>
<polygon points="509.8,352.3 518.4,353.9 518.4,350.7 509.9,349.1" fill="#e4decc"/>
<polygon points="515.0,339.9 520.9,341.0 520.3,327.0 514.7,326.0" fill="#ded9c7"/>
<polygon points="676.6,388.5 683.8,395.9 683.8,383.5 676.6,376.3" fill="#c7c2b2"/>
<polygon points="507.1,276.3 501.7,278.7 508.1,279.2 512.0,277.5" fill="#fffffa"/>
<polygon points="623.3,208.4 623.8,214.1 627.4,217.5 626.8,210.8" fill="#b2ae9f"/>
<polygon points="941.6,298.9 936.7,294.4 930.6,296.9 933.9,299.9" fill="#fffffa"/>
<polygon points="528.7,354.2 539.0,353.0 538.6,349.7 528.5,350.9" fill="#fffae7"/>
<polygon points="528.0,341.1 535.1,340.3 533.7,326.4 527.0,327.1" fill="#fbf6e1"/>
<polygon points="548.3,299.4 550.1,296.5 542.5,296.8 541.2,298.8" fill="#fffffa"/>
<polygon points="518.4,350.7 528.5,350.9 528.0,341.1 520.9,341.0" fill="#e6e0cd"/>
<polygon points="899.7,323.0 902.9,326.2 903.7,313.2 900.5,310.1" fill="#aca89a"/>
<polygon points="684.8,419.1 701.6,419.3 701.6,407.9 684.8,407.7" fill="#ede8d4"/>
<polygon points="538.8,318.8 542.6,316.9 541.7,304.9 537.9,306.7" fill="#fcf6e1"/>
<polygon points="808.5,218.5 808.1,223.8 812.1,219.5 812.5,215.1" fill="#e3decb"/>
<polygon points="517.4,366.8 529.6,367.1 528.7,354.2 518.4,353.9" fill="#fffffa"/>
<polygon points="627.8,219.2 628.0,212.1 626.9,210.9 626.8,216.8" fill="#d6d1c0"/>
<polygon points="548.2,279.6 546.3,277.0 539.9,278.0 541.2,279.9" fill="#fffffa"/>
<polygon points="701.6,419.3 718.4,419.6 718.4,408.2 701.6,407.9" fill="#ede8d4"/>
<polygon points="624.3,173.5 623.6,177.2 627.2,173.1 628.0,168.7" fill="#dbd6c4"/>
<polygon points="520.9,341.0 528.0,341.1 527.0,327.1 520.3,327.0" fill="#efe9d6"/>
<polygon points="891.9,306.1 892.8,311.2 893.1,305.5 892.2,300.6" fill="#a4a093"/>
<polygon points="628.0,212.1 627.9,204.8 626.9,204.8 626.9,210.9" fill="#d6d1c0"/>
<polygon points="627.6,226.0 627.8,219.2 626.8,216.8 626.6,222.4" fill="#d6d1c0"/>
<polygon points="788.1,219.2 787.9,224.7 808.1,223.8 808.5,218.5" fill="#c2bdad"/>
<polygon points="718.4,419.6 735.2,419.8 735.2,408.4 718.4,408.2" fill="#ede8d4"/>
<polygon points="518.4,353.9 528.7,354.2 528.5,350.9 518.4,350.7" fill="#f4efda"/>
<polygon points="809.1,167.3 809.3,169.7 813.2,174.5 812.9,172.5" fill="#fffffa"/>
<polygon points="920.6,272.5 911.3,272.8 913.4,276.1 920.0,275.9" fill="#fffffa"/>
<polygon points="735.2,419.8 752.1,420.1 752.1,408.7 735.2,408.4" fill="#ede8d4"/>
<polygon points="896.2,334.4 903.9,338.0 904.3,332.3 896.6,328.8" fill="#bbb6a7"/>
<polygon points="896.6,328.8 904.3,332.3 908.2,328.5 902.9,326.2" fill="#fffffa"/>
<polygon points="626.8,210.8 627.4,217.5 649.7,218.2 649.2,211.2" fill="#d0cbba"/>
<polygon points="931.7,325.2 933.5,321.9 934.3,309.0 932.5,312.2" fill="#fbf5e0"/>
<polygon points="753.1,396.9 762.0,389.7 762.0,377.5 753.1,384.5" fill="#fcf6e1"/>
<polygon points="541.2,298.8 542.5,296.8 541.6,285.8 540.3,287.8" fill="#f4eeda"/>
<polygon points="911.3,272.8 903.1,274.9 907.6,277.6 913.4,276.1" fill="#fffffa"/>
<polygon points="627.9,204.8 627.8,197.5 626.8,198.8 626.9,204.8" fill="#d6d1c0"/>
<polygon points="627.2,232.3 627.6,226.0 626.6,222.4 626.3,227.6" fill="#d6d1c0"/>
<polygon points="812.8,209.4 812.5,215.1 812.9,211.6 813.1,207.1" fill="#f4efda"/>
<polygon points="788.8,166.3 789.0,168.8 809.3,169.7 809.1,167.3" fill="#fffffa"/>
<polygon points="667.3,447.3 717.5,458.8 718.0,447.1 679.4,437.9" fill="#fffffa"/>
<polygon points="892.2,300.6 893.1,305.5 900.9,304.5 900.3,301.1" fill="#fffffa"/>
<polygon points="628.0,168.7 627.2,173.1 649.7,172.3 650.4,167.7" fill="#fffffa"/>
<polygon points="929.6,273.9 920.6,272.5 920.0,275.9 926.4,276.9" fill="#fffffa"/>
<polygon points="580.9,218.1 581.0,211.0 578.2,208.6 578.1,213.1" fill="#d6d1c0"/>
<polygon points="813.2,174.5 813.3,178.2 813.6,182.2 813.4,179.3" fill="#fbf5e0"/>
<polygon points="503.3,319.5 508.6,321.9 514.2,319.9 510.5,318.3" fill="#fffffa"/>
<polygon points="932.8,331.4 939.0,327.4 931.7,325.2 927.4,327.9" fill="#fffffa"/>
<polygon points="622.9,202.0 623.3,208.4 626.8,210.8 626.4,203.0" fill="#bdb9a9"/>
<polygon points="581.0,211.0 581.0,203.8 578.2,203.9 578.2,208.6" fill="#d6d1c0"/>
<polygon points="580.6,224.8 580.9,218.1 578.1,213.1 577.9,217.5" fill="#d6d1c0"/>
<polygon points="602.9,219.1 603.0,212.0 600.6,209.5 600.5,214.1" fill="#d6d1c0"/>
<polygon points="510.5,318.3 514.2,319.9 513.3,307.8 509.6,306.2" fill="#c7c3b2"/>
<polygon points="932.5,337.0 938.7,333.1 939.0,327.4 932.8,331.4" fill="#f6f1dc"/>
<polygon points="683.1,364.1 682.9,369.9 682.3,350.1 667.9,344.0" fill="#a8a496"/>
<polygon points="902.9,326.2 908.2,328.5 909.0,315.5 903.7,313.2" fill="#bab6a7"/>
<polygon points="603.0,212.0 603.0,204.8 600.5,204.9 600.6,209.5" fill="#d6d1c0"/>
<polygon points="602.6,225.8 602.9,219.1 600.5,214.1 600.3,218.5" fill="#d6d1c0"/>
<polygon points="536.1,322.4 544.3,320.3 538.8,318.8 533.2,320.3" fill="#fffffa"/>
<polygon points="503.8,325.6 509.1,328.0 508.6,321.9 503.3,319.5" fill="#c7c3b2"/>
<polygon points="717.5,458.8 770.0,449.0 758.4,439.1 718.0,447.1" fill="#fffffa"/>
<polygon points="623.6,177.2 623.1,182.2 626.6,179.2 627.2,173.1" fill="#dad5c3"/>
<polygon points="533.2,320.3 538.8,318.8 537.9,306.7 532.3,308.1" fill="#fdf7e2"/>
<polygon points="627.8,197.5 627.5,190.3 626.5,192.8 626.8,198.8" fill="#d6d1c0"/>
<polygon points="626.7,238.0 627.2,232.3 626.3,227.6 625.9,232.3" fill="#d6d1c0"/>
<polygon points="903.1,274.9 897.2,278.3 903.4,280.0 907.6,277.6" fill="#fffffa"/>
<polygon points="581.0,203.8 580.7,196.6 578.0,199.2 578.2,203.9" fill="#d6d1c0"/>
<polygon points="580.1,231.1 580.6,224.8 577.9,217.5 577.6,221.5" fill="#d6d1c0"/>
<polygon points="500.8,304.5 502.4,307.4 501.9,301.3 500.3,298.5" fill="#b6b1a3"/>
<polygon points="536.6,328.6 544.8,326.4 544.3,320.3 536.1,322.4" fill="#fdf8e3"/>
<polygon points="500.3,298.5 501.9,301.3 509.1,300.1 508.0,298.2" fill="#fffffa"/>
<polygon points="808.9,211.8 808.5,218.5 812.5,215.1 812.8,209.4" fill="#eee9d5"/>
<polygon points="603.0,204.8 602.8,197.5 600.4,200.2 600.5,204.9" fill="#d6d1c0"/>
<polygon points="904.3,332.3 914.0,334.0 914.7,329.7 908.2,328.5" fill="#fffffa"/>
<polygon points="602.2,232.0 602.6,225.8 600.3,218.5 600.0,222.5" fill="#d6d1c0"/>
<polygon points="942.9,303.9 941.6,298.9 933.9,299.9 934.7,303.3" fill="#fffffa"/>
<polygon points="927.4,327.9 931.7,325.2 932.5,312.2 928.3,314.9" fill="#f6f0dc"/>
<polygon points="813.1,203.0 812.8,209.4 813.1,207.1 813.4,202.0" fill="#f6f0dc"/>
<polygon points="501.7,278.7 499.5,281.4 506.7,281.1 508.1,279.2" fill="#fffffa"/>
<polygon points="546.9,288.3 548.7,285.6 548.2,279.6 546.5,282.3" fill="#f4eeda"/>
<polygon points="903.9,338.0 913.6,339.7 914.0,334.0 904.3,332.3" fill="#ccc7b6"/>
<polygon points="622.7,195.1 622.9,202.0 626.4,203.0 626.2,194.7" fill="#c7c3b2"/>
<polygon points="626.4,203.0 626.8,210.8 649.2,211.2 648.8,203.2" fill="#e2dcca"/>
<polygon points="813.3,178.2 813.4,183.3 813.6,186.3 813.6,182.2" fill="#fbf5e0"/>
<polygon points="542.9,302.1 548.3,299.4 541.2,298.8 537.4,300.7" fill="#fffffa"/>
<polygon points="543.4,308.2 548.7,305.5 548.3,299.4 542.9,302.1" fill="#fcf6e2"/>
<polygon points="924.0,333.7 932.8,331.4 927.4,327.9 921.5,329.5" fill="#fffffa"/>
<polygon points="809.3,169.7 809.5,174.1 813.3,178.2 813.2,174.5" fill="#fffffa"/>
<polygon points="508.0,298.2 509.1,300.1 508.3,289.0 507.1,287.2" fill="#b6b1a2"/>
<polygon points="550.7,253.8 550.8,252.0 550.9,240.0 550.8,241.9" fill="#bbb7a7"/>
<polygon points="623.1,182.2 622.8,188.4 626.3,186.6 626.6,179.2" fill="#d6d1c0"/>
<polygon points="753.7,370.9 754.9,365.1 770.1,345.4 754.2,351.0" fill="#b8b3a4"/>
<polygon points="937.1,276.9 929.6,273.9 926.4,276.9 931.7,279.0" fill="#fffffa"/>
<polygon points="788.4,212.3 788.1,219.2 808.5,218.5 808.9,211.8" fill="#d4cfbd"/>
<polygon points="546.5,282.3 548.2,279.6 541.2,279.9 539.9,281.8" fill="#fffffa"/>
<polygon points="514.2,319.9 519.8,320.9 518.9,308.7 513.3,307.8" fill="#dad5c3"/>
<polygon points="580.7,196.6 580.2,189.5 577.7,194.6 578.0,199.2" fill="#d6d1c0"/>
<polygon points="579.5,236.7 580.1,231.1 577.6,221.5 577.2,225.2" fill="#d6d1c0"/>
<polygon points="914.0,334.0 924.0,333.7 921.5,329.5 914.7,329.7" fill="#fffffa"/>
<polygon points="908.2,328.5 914.7,329.7 915.5,316.6 909.0,315.5" fill="#cbc6b6"/>
<polygon points="627.2,173.1 626.6,179.2 649.2,178.6 649.7,172.3" fill="#fffffa"/>
<polygon points="622.8,188.4 622.7,195.1 626.2,194.7 626.3,186.6" fill="#d0cbba"/>
<polygon points="635.2,505.5 716.4,523.6 716.3,508.8 634.2,491.1" fill="#dfdac8"/>
<polygon points="900.3,301.1 900.9,304.5 901.7,292.1 901.1,288.7" fill="#a4a092"/>
<polygon points="508.6,321.9 516.7,323.3 519.8,320.9 514.2,319.9" fill="#fffffa"/>
<polygon points="923.6,339.4 932.5,337.0 932.8,331.4 924.0,333.7" fill="#ece6d3"/>
<polygon points="526.5,321.0 533.2,320.3 532.3,308.1 525.6,308.8" fill="#f7f1dd"/>
<polygon points="537.4,300.7 541.2,298.8 540.3,287.8 536.6,289.6" fill="#fcf6e1"/>
<polygon points="602.8,197.5 602.4,190.4 600.1,195.6 600.4,200.2" fill="#d6d1c0"/>
<polygon points="601.6,237.7 602.2,232.0 600.0,222.5 599.6,226.2" fill="#d6d1c0"/>
<polygon points="627.5,190.3 627.0,183.4 626.2,187.2 626.5,192.8" fill="#d6d1c0"/>
<polygon points="526.4,323.5 536.1,322.4 533.2,320.3 526.5,321.0" fill="#fffffa"/>
<polygon points="813.3,196.1 813.1,203.0 813.4,202.0 813.5,196.5" fill="#f8f2dd"/>
<polygon points="626.1,243.0 626.7,238.0 625.9,232.3 625.4,236.4" fill="#d6d1c0"/>
<polygon points="892.8,311.2 897.4,315.7 897.8,310.1 893.1,305.5" fill="#ada99a"/>
<polygon points="921.5,329.5 927.4,327.9 928.3,314.9 922.3,316.4" fill="#ece6d3"/>
<polygon points="789.0,168.8 789.1,173.3 809.5,174.1 809.3,169.7" fill="#fffffa"/>
<polygon points="913.6,339.7 923.6,339.4 924.0,333.7 914.0,334.0" fill="#ddd8c5"/>
<polygon points="813.4,183.3 813.4,189.4 813.6,191.1 813.6,186.3" fill="#faf4e0"/>
<polygon points="519.8,320.9 526.5,321.0 525.6,308.8 518.9,308.7" fill="#ebe5d2"/>
<polygon points="683.8,395.9 701.1,396.2 701.1,383.7 683.8,383.5" fill="#f0ead6"/>
<polygon points="818.7,216.2 818.8,210.6 818.3,213.0 818.2,220.0" fill="#bdb8a9"/>
<polygon points="914.7,329.7 921.5,329.5 922.3,316.4 915.5,316.6" fill="#ddd7c5"/>
<polygon points="813.4,189.4 813.3,196.1 813.5,196.5 813.6,191.1" fill="#f9f3df"/>
<polygon points="893.1,305.5 897.8,310.1 904.1,307.6 900.9,304.5" fill="#fffffa"/>
<polygon points="516.7,323.3 526.4,323.5 526.5,321.0 519.8,320.9" fill="#fffffa"/>
<polygon points="509.1,328.0 517.2,329.4 516.7,323.3 508.6,321.9" fill="#dad5c3"/>
<polygon points="818.8,210.6 819.0,204.8 818.5,205.7 818.3,213.0" fill="#bdb8a9"/>
<polygon points="818.7,221.5 818.7,216.2 818.2,220.0 818.1,226.7" fill="#bdb8a9"/>
<polygon points="701.1,396.2 718.4,396.4 718.4,384.0 701.1,383.7" fill="#f0ead6"/>
<polygon points="562.3,212.9 562.4,207.7 561.7,207.6 561.6,212.2" fill="#d6d1c0"/>
<polygon points="626.2,194.7 626.4,203.0 648.8,203.2 648.7,194.6" fill="#f2ecd8"/>
<polygon points="809.2,204.0 808.9,211.8 812.8,209.4 813.1,203.0" fill="#f9f4df"/>
<polygon points="562.4,207.7 562.3,202.4 561.6,202.9 561.7,207.6" fill="#d6d1c0"/>
<polygon points="562.1,217.8 562.3,212.9 561.6,212.2 561.4,216.5" fill="#d6d1c0"/>
<polygon points="897.2,278.3 894.4,282.7 901.4,283.1 903.4,280.0" fill="#fffffa"/>
<polygon points="526.9,329.6 536.6,328.6 536.1,322.4 526.4,323.5" fill="#f7f2dd"/>
<polygon points="718.4,396.4 735.8,396.7 735.8,384.2 718.4,384.0" fill="#f0ead6"/>
<polygon points="539.9,281.8 541.2,279.9 541.2,267.4 539.9,269.3" fill="#efe9d6"/>
<polygon points="626.6,179.2 626.3,186.6 648.8,186.2 649.2,178.6" fill="#fffef6"/>
<polygon points="580.2,189.5 579.6,182.7 577.3,190.2 577.7,194.6" fill="#d6d1c0"/>
<polygon points="578.7,241.6 579.5,236.7 577.2,225.2 576.7,228.3" fill="#d6d1c0"/>
<polygon points="735.8,396.7 753.1,396.9 753.1,384.5 735.8,384.2" fill="#f0ead6"/>
<polygon points="716.4,523.6 800.9,508.5 801.9,494.0 716.3,508.8" fill="#fef8e3"/>
<polygon points="809.5,174.1 809.6,180.2 813.4,183.3 813.3,178.2" fill="#fffffa"/>
<polygon points="819.0,204.8 819.2,199.1 818.7,198.5 818.5,205.7" fill="#bdb8a9"/>
<polygon points="602.4,190.4 601.9,183.6 599.8,191.2 600.1,195.6" fill="#d6d1c0"/>
<polygon points="818.7,226.5 818.7,221.5 818.1,226.7 818.1,233.0" fill="#bdb8a9"/>
<polygon points="600.9,242.6 601.6,237.7 599.6,226.2 599.2,229.3" fill="#d6d1c0"/>
<polygon points="626.3,186.6 626.2,194.7 648.7,194.6 648.8,186.2" fill="#fff9e5"/>
<polygon points="562.3,202.4 562.1,197.1 561.4,198.2 561.6,202.9" fill="#d6d1c0"/>
<polygon points="561.7,222.4 562.1,217.8 561.4,216.5 561.1,220.6" fill="#d6d1c0"/>
<polygon points="656.0,456.9 716.8,471.3 717.5,458.8 667.3,447.3" fill="#fffffa"/>
<polygon points="939.9,314.3 942.5,309.5 942.9,303.9 940.2,308.7" fill="#fbf5e0"/>
<polygon points="517.2,329.4 526.9,329.6 526.4,323.5 516.7,323.3" fill="#ebe5d2"/>
<polygon points="633.6,216.8 633.7,210.9 632.0,208.8 632.0,212.6" fill="#d6d1c0"/>
<polygon points="501.9,301.3 507.2,303.6 512.8,301.7 509.1,300.1" fill="#fffffa"/>
<polygon points="633.7,210.9 633.7,204.8 632.0,204.9 632.0,208.8" fill="#d6d1c0"/>
<polygon points="633.4,222.4 633.6,216.8 632.0,212.6 631.8,216.3" fill="#d6d1c0"/>
<polygon points="509.1,300.1 512.8,301.7 511.9,290.5 508.3,289.0" fill="#c7c3b2"/>
<polygon points="550.8,241.9 550.9,240.0 548.9,227.1 548.8,228.9" fill="#f7f1dd"/>
<polygon points="788.7,204.2 788.4,212.3 808.9,211.8 809.2,204.0" fill="#e5e0cd"/>
<polygon points="940.2,308.7 942.9,303.9 934.7,303.3 932.9,306.6" fill="#fffffa"/>
<polygon points="941.8,281.0 937.1,276.9 931.7,279.0 935.0,282.0" fill="#fffffa"/>
<polygon points="627.0,183.4 626.5,177.0 625.7,181.9 626.2,187.2" fill="#d6d1c0"/>
<polygon points="625.3,247.1 626.1,243.0 625.4,236.4 624.8,239.7" fill="#d6d1c0"/>
<polygon points="682.9,369.9 694.7,370.1 694.2,350.2 682.3,350.1" fill="#c4c0af"/>
<polygon points="534.7,304.1 542.9,302.1 537.4,300.7 531.8,302.1" fill="#fffffa"/>
<polygon points="502.4,307.4 507.7,309.7 507.2,303.6 501.9,301.3" fill="#c7c3b2"/>
<polygon points="531.8,302.1 537.4,300.7 536.6,289.6 530.9,290.9" fill="#fdf7e2"/>
<polygon points="809.4,195.7 809.2,204.0 813.1,203.0 813.3,196.1" fill="#fffbec"/>
<polygon points="900.9,304.5 904.1,307.6 904.9,295.1 901.7,292.1" fill="#aca89a"/>
<polygon points="500.0,287.4 501.6,290.1 501.1,284.0 499.5,281.4" fill="#b6b1a3"/>
<polygon points="789.1,173.3 789.1,179.6 809.6,180.2 809.5,174.1" fill="#fffffa"/>
<polygon points="667.9,344.0 682.3,350.1 681.7,333.9 658.3,327.8" fill="#9e9a8d"/>
<polygon points="562.1,197.1 561.8,191.9 561.1,193.6 561.4,198.2" fill="#d6d1c0"/>
<polygon points="633.7,204.8 633.5,198.8 631.9,201.0 632.0,204.9" fill="#d6d1c0"/>
<polygon points="561.2,226.5 561.7,222.4 561.1,220.6 560.6,224.2" fill="#d6d1c0"/>
<polygon points="633.1,227.6 633.4,222.4 631.8,216.3 631.6,219.7" fill="#d6d1c0"/>
<polygon points="634.2,491.1 716.3,508.8 716.7,481.2 645.5,465.9" fill="#f7f2dd"/>
<polygon points="694.7,370.1 706.5,370.2 706.2,350.4 694.2,350.2" fill="#c4c0af"/>
<polygon points="499.5,281.4 501.1,284.0 507.8,283.0 506.7,281.1" fill="#fffffa"/>
<polygon points="809.6,180.2 809.6,187.6 813.4,189.4 813.4,183.3" fill="#fffffa"/>
<polygon points="716.8,471.3 780.4,458.9 770.0,449.0 717.5,458.8" fill="#fffffa"/>
<polygon points="819.2,199.1 819.4,193.4 819.0,191.4 818.7,198.5" fill="#bdb8a9"/>
<polygon points="818.8,230.9 818.7,226.5 818.1,233.0 818.2,238.7" fill="#bdb8a9"/>
<polygon points="706.5,370.2 718.3,370.4 718.2,350.5 706.2,350.4" fill="#c4c0af"/>
<polygon points="843.6,215.5 843.7,211.2 842.2,213.9 842.1,221.0" fill="#bdb8a9"/>
<polygon points="894.0,288.3 894.9,293.0 895.3,287.4 894.4,282.7" fill="#a4a093"/>
<polygon points="535.2,310.2 543.4,308.2 542.9,302.1 534.7,304.1" fill="#fdf8e3"/>
<polygon points="718.3,370.4 730.1,370.6 730.2,350.7 718.2,350.5" fill="#c4c0af"/>
<polygon points="809.6,187.6 809.4,195.7 813.3,196.1 813.4,189.4" fill="#fffffa"/>
<polygon points="843.7,211.2 843.8,206.8 842.4,206.7 842.2,213.9" fill="#bdb8a9"/>
<polygon points="843.6,219.5 843.6,215.5 842.1,221.0 842.1,227.7" fill="#bdb8a9"/>
<polygon points="730.1,370.6 741.9,370.8 742.2,350.9 730.2,350.7" fill="#c4c0af"/>
<polygon points="541.7,290.9 546.9,288.3 546.5,282.3 541.2,284.8" fill="#fcf6e2"/>
<polygon points="579.6,182.7 578.8,176.3 576.8,186.1 577.3,190.2" fill="#d6d1c0"/>
<polygon points="541.2,284.8 546.5,282.3 539.9,281.8 536.1,283.5" fill="#fffffa"/>
<polygon points="864.0,215.8 864.0,211.3 862.4,214.3 862.3,221.2" fill="#bdb8a9"/>
<polygon points="577.7,245.7 578.7,241.6 576.7,228.3 576.0,230.9" fill="#d6d1c0"/>
<polygon points="741.9,370.8 753.7,370.9 754.2,351.0 742.2,350.9" fill="#c4c0af"/>
<polygon points="601.9,183.6 601.2,177.3 599.3,187.1 599.8,191.2" fill="#d6d1c0"/>
<polygon points="864.0,211.3 864.2,206.8 862.6,207.2 862.4,214.3" fill="#bdb8a9"/>
<polygon points="633.5,198.8 633.3,192.8 631.8,197.1 631.9,201.0" fill="#d6d1c0"/>
<polygon points="864.0,220.0 864.0,215.8 862.3,221.2 862.3,227.8" fill="#bdb8a9"/>
<polygon points="600.1,246.7 600.9,242.6 599.2,229.3 598.6,231.9" fill="#d6d1c0"/>
<polygon points="632.7,232.3 633.1,227.6 631.6,219.7 631.4,222.7" fill="#d6d1c0"/>
<polygon points="932.9,306.6 934.7,303.3 935.5,290.9 933.7,294.1" fill="#fbf5e0"/>
<polygon points="897.8,310.1 905.5,313.5 909.4,309.8 904.1,307.6" fill="#fffffa"/>
<polygon points="897.4,315.7 905.2,319.2 905.5,313.5 897.8,310.1" fill="#bbb6a7"/>
<polygon points="506.7,281.1 507.8,283.0 505.9,270.5 504.7,268.7" fill="#b1ad9e"/>
<polygon points="788.9,195.7 788.7,204.2 809.2,204.0 809.4,195.7" fill="#f6f0dc"/>
<polygon points="512.8,301.7 518.4,302.6 517.5,291.4 511.9,290.5" fill="#dad5c3"/>
<polygon points="843.8,206.8 844.0,202.4 842.7,199.5 842.4,206.7" fill="#bdb8a9"/>
<polygon points="645.5,465.9 716.7,481.2 716.8,471.3 656.0,456.9" fill="#faf5e0"/>
<polygon points="843.7,223.3 843.6,219.5 842.1,227.7 842.1,234.0" fill="#bdb8a9"/>
<polygon points="561.8,191.9 561.3,187.0 560.6,189.2 561.1,193.6" fill="#d6d1c0"/>
<polygon points="560.6,230.0 561.2,226.5 560.6,224.2 560.0,227.3" fill="#d6d1c0"/>
<polygon points="789.1,179.6 789.0,187.3 809.6,187.6 809.6,180.2" fill="#fffffa"/>
<polygon points="525.1,302.7 531.8,302.1 530.9,290.9 524.2,291.6" fill="#f7f1dd"/>
<polygon points="716.3,508.8 801.9,494.0 790.9,468.4 716.7,481.2" fill="#fffffa"/>
<polygon points="894.4,282.7 895.3,287.4 902.1,286.4 901.4,283.1" fill="#fffffa"/>
<polygon points="545.1,270.0 548.8,265.0 550.7,253.8 546.5,259.3" fill="#a8a496"/>
<polygon points="507.2,303.6 515.3,304.9 518.4,302.6 512.8,301.7" fill="#fffffa"/>
<polygon points="536.1,283.5 539.9,281.8 539.9,269.3 535.9,271.1" fill="#f7f1dd"/>
<polygon points="864.2,206.8 864.4,202.3 862.9,200.1 862.6,207.2" fill="#bdb8a9"/>
<polygon points="754.2,351.0 770.1,345.4 779.8,329.4 754.7,334.9" fill="#a8a496"/>
<polygon points="864.0,223.9 864.0,220.0 862.3,227.8 862.4,233.9" fill="#bdb8a9"/>
<polygon points="789.0,187.3 788.9,195.7 809.4,195.7 809.6,187.6" fill="#fffbeb"/>
<polygon points="548.8,228.9 548.9,227.1 547.2,218.3 547.1,220.0" fill="#bbb6a7"/>
<polygon points="525.0,305.1 534.7,304.1 531.8,302.1 525.1,302.7" fill="#fffffa"/>
<polygon points="819.4,193.4 819.7,188.1 819.3,184.6 819.0,191.4" fill="#bdb8a9"/>
<polygon points="518.4,302.6 525.1,302.7 524.2,291.6 517.5,291.4" fill="#ebe5d2"/>
<polygon points="818.9,234.8 818.8,230.9 818.2,238.7 818.4,243.6" fill="#bdb8a9"/>
<polygon points="934.0,312.5 940.2,308.7 932.9,306.6 928.7,309.2" fill="#fffffa"/>
<polygon points="633.3,192.8 633.0,187.2 631.6,193.5 631.8,197.1" fill="#d6d1c0"/>
<polygon points="904.1,307.6 909.4,309.8 910.2,297.3 904.9,295.1" fill="#bab6a7"/>
<polygon points="933.7,318.2 939.9,314.3 940.2,308.7 934.0,312.5" fill="#f6f1dc"/>
<polygon points="632.2,236.4 632.7,232.3 631.4,222.7 631.1,225.3" fill="#d6d1c0"/>
<polygon points="626.5,177.0 625.8,171.2 625.1,177.1 625.7,181.9" fill="#d6d1c0"/>
<polygon points="844.0,202.4 844.2,198.1 843.0,192.4 842.7,199.5" fill="#bdb8a9"/>
<polygon points="624.5,250.2 625.3,247.1 624.8,239.7 624.1,242.3" fill="#d6d1c0"/>
<polygon points="515.3,304.9 525.0,305.1 525.1,302.7 518.4,302.6" fill="#fffffa"/>
<polygon points="843.8,226.7 843.7,223.3 842.1,234.0 842.3,239.6" fill="#bdb8a9"/>
<polygon points="507.7,309.7 515.8,311.0 515.3,304.9 507.2,303.6" fill="#dad5c3"/>
<polygon points="716.7,481.2 790.9,468.4 780.4,458.9 716.8,471.3" fill="#fffffa"/>
<polygon points="525.5,311.2 535.2,310.2 534.7,304.1 525.0,305.1" fill="#f7f2dd"/>
<polygon points="864.4,202.3 864.7,197.8 863.3,193.1 862.9,200.1" fill="#bdb8a9"/>
<polygon points="864.2,227.4 864.0,223.9 862.4,233.9 862.6,239.4" fill="#bdb8a9"/>
<polygon points="943.0,285.7 941.8,281.0 935.0,282.0 935.9,285.3" fill="#fffffa"/>
<polygon points="561.3,187.0 560.6,182.3 560.1,185.2 560.6,189.2" fill="#d6d1c0"/>
<polygon points="559.8,232.9 560.6,230.0 560.0,227.3 559.4,229.9" fill="#d6d1c0"/>
<polygon points="578.8,176.3 577.9,170.5 576.2,182.5 576.8,186.1" fill="#d6d1c0"/>
<polygon points="576.6,248.8 577.7,245.7 576.0,230.9 575.3,232.8" fill="#d6d1c0"/>
<polygon points="928.7,309.2 932.9,306.6 933.7,294.1 929.5,296.7" fill="#f6f0dc"/>
<polygon points="905.5,313.5 915.2,315.2 915.9,311.0 909.4,309.8" fill="#fffffa"/>
<polygon points="501.1,284.0 506.2,286.1 511.5,284.5 507.8,283.0" fill="#fffffa"/>
<polygon points="601.2,177.3 600.4,171.5 598.8,183.4 599.3,187.1" fill="#d6d1c0"/>
<polygon points="599.1,249.8 600.1,246.7 598.6,231.9 598.0,233.8" fill="#d6d1c0"/>
<polygon points="809.7,212.6 809.8,208.8 809.2,210.6 809.1,216.2" fill="#bdb8a9"/>
<polygon points="515.8,311.0 525.5,311.2 525.0,305.1 515.3,304.9" fill="#ebe5d2"/>
<polygon points="905.2,319.2 914.8,320.9 915.2,315.2 905.5,313.5" fill="#ccc7b6"/>
<polygon points="809.8,208.8 809.8,204.9 809.3,204.8 809.2,210.6" fill="#bdb8a9"/>
<polygon points="809.7,216.3 809.7,212.6 809.1,216.2 809.0,221.5" fill="#bdb8a9"/>
<polygon points="501.6,290.1 506.7,292.2 506.2,286.1 501.1,284.0" fill="#c7c3b2"/>
<polygon points="925.2,314.8 934.0,312.5 928.7,309.2 922.7,310.7" fill="#fffffa"/>
<polygon points="533.2,286.7 541.2,284.8 536.1,283.5 530.5,284.8" fill="#fffffa"/>
<polygon points="507.8,283.0 511.5,284.5 509.7,272.1 505.9,270.5" fill="#c2beae"/>
<polygon points="547.1,220.0 547.2,218.3 547.9,205.3 547.8,207.0" fill="#e3decb"/>
<polygon points="633.0,187.2 632.5,181.9 631.3,190.0 631.6,193.5" fill="#d6d1c0"/>
<polygon points="844.2,198.1 844.5,194.1 843.5,185.6 843.0,192.4" fill="#bdb8a9"/>
<polygon points="631.6,239.7 632.2,236.4 631.1,225.3 630.7,227.5" fill="#d6d1c0"/>
<polygon points="909.4,309.8 915.9,311.0 916.7,298.4 910.2,297.3" fill="#cbc6b6"/>
<polygon points="843.9,229.7 843.8,226.7 842.3,239.6 842.6,244.5" fill="#bdb8a9"/>
<polygon points="878.8,215.7 878.9,211.5 877.8,212.4 877.8,217.8" fill="#bdb8a9"/>
<polygon points="915.2,315.2 925.2,314.8 922.7,310.7 915.9,311.0" fill="#fffffa"/>
<polygon points="546.5,259.3 550.7,253.8 550.8,241.9 546.5,247.2" fill="#bbb7a8"/>
<polygon points="819.7,188.1 820.0,183.0 819.7,178.2 819.3,184.6" fill="#bdb8a9"/>
<polygon points="809.8,204.9 810.0,201.0 809.5,199.1 809.3,204.8" fill="#bdb8a9"/>
<polygon points="894.9,293.0 899.4,297.3 899.8,291.6 895.3,287.4" fill="#ada99a"/>
<polygon points="819.1,238.0 818.9,234.8 818.4,243.6 818.6,247.6" fill="#bdb8a9"/>
<polygon points="809.7,219.7 809.7,216.3 809.0,221.5 809.0,226.5" fill="#bdb8a9"/>
<polygon points="530.5,284.8 536.1,283.5 535.9,271.1 529.9,272.4" fill="#f8f3de"/>
<polygon points="901.4,283.1 902.1,286.4 902.0,272.4 901.3,268.9" fill="#a09c8f"/>
<polygon points="924.9,320.5 933.7,318.2 934.0,312.5 925.2,314.8" fill="#ece6d3"/>
<polygon points="533.7,292.8 541.7,290.9 541.2,284.8 533.2,286.7" fill="#fdf8e3"/>
<polygon points="878.9,211.5 879.0,207.3 878.0,206.8 877.8,212.4" fill="#bdb8a9"/>
<polygon points="878.8,219.6 878.8,215.7 877.8,217.8 877.8,223.0" fill="#bdb8a9"/>
<polygon points="864.7,197.8 865.0,193.6 863.9,186.5 863.3,193.1" fill="#bdb8a9"/>
<polygon points="864.4,230.5 864.2,227.4 862.6,239.4 862.9,244.3" fill="#bdb8a9"/>
<polygon points="922.7,310.7 928.7,309.2 929.5,296.7 923.5,298.2" fill="#ece6d3"/>
<polygon points="682.3,350.1 694.2,350.2 693.8,334.1 681.7,333.9" fill="#8f8b80"/>
<polygon points="658.3,327.8 681.7,333.9 680.0,310.5 653.7,304.6" fill="#b2aea0"/>
<polygon points="914.8,320.9 924.9,320.5 925.2,314.8 915.2,315.2" fill="#ddd8c5"/>
<polygon points="895.3,287.4 899.8,291.6 905.3,289.4 902.1,286.4" fill="#fffffa"/>
<polygon points="915.9,311.0 922.7,310.7 923.5,298.2 916.7,298.4" fill="#ddd7c5"/>
<polygon points="879.0,207.3 879.2,203.1 878.3,201.2 878.0,206.8" fill="#bdb8a9"/>
<polygon points="694.2,350.2 706.2,350.4 706.0,334.2 693.8,334.1" fill="#8f8b80"/>
<polygon points="878.9,223.2 878.8,219.6 877.8,223.0 877.9,227.8" fill="#bdb8a9"/>
<polygon points="560.6,182.3 559.9,178.2 559.4,181.5 560.1,185.2" fill="#d6d1c0"/>
<polygon points="558.9,235.1 559.8,232.9 559.4,229.9 558.6,231.8" fill="#d6d1c0"/>
<polygon points="706.2,350.4 718.2,350.5 718.2,334.4 706.0,334.2" fill="#8f8b80"/>
<polygon points="810.0,201.0 810.1,197.1 809.7,193.4 809.5,199.1" fill="#bdb8a9"/>
<polygon points="809.7,222.7 809.7,219.7 809.0,226.5 809.1,230.9" fill="#bdb8a9"/>
<polygon points="718.2,350.5 730.2,350.7 730.3,334.6 718.2,334.4" fill="#8f8b80"/>
<polygon points="625.8,171.2 625.0,166.1 624.5,173.0 625.1,177.1" fill="#d6d1c0"/>
<polygon points="623.6,252.3 624.5,250.2 624.1,242.3 623.3,244.0" fill="#d6d1c0"/>
<polygon points="506.2,286.1 514.2,287.4 517.1,285.4 511.5,284.5" fill="#fffffa"/>
<polygon points="730.2,350.7 742.2,350.9 742.5,334.7 730.3,334.6" fill="#8f8b80"/>
<polygon points="511.5,284.5 517.1,285.4 515.7,272.9 509.7,272.1" fill="#d5d0bf"/>
<polygon points="577.9,170.5 576.8,165.5 575.5,179.3 576.2,182.5" fill="#d6d1c0"/>
<polygon points="940.1,295.9 942.6,291.3 943.0,285.7 940.5,290.2" fill="#fbf5e0"/>
<polygon points="575.5,250.8 576.6,248.8 575.3,232.8 574.6,234.1" fill="#d6d1c0"/>
<polygon points="523.7,287.6 533.2,286.7 530.5,284.8 523.8,285.5" fill="#fffffa"/>
<polygon points="742.2,350.9 754.2,351.0 754.7,334.9 742.5,334.7" fill="#8f8b80"/>
<polygon points="879.2,203.1 879.5,198.9 878.7,195.7 878.3,201.2" fill="#bdb8a9"/>
<polygon points="879.1,226.5 878.9,223.2 877.9,227.8 878.1,232.2" fill="#bdb8a9"/>
<polygon points="523.8,285.5 530.5,284.8 529.9,272.4 522.8,273.1" fill="#f2edd9"/>
<polygon points="844.5,194.1 844.8,190.3 844.0,179.2 843.5,185.6" fill="#bdb8a9"/>
<polygon points="632.5,181.9 632.0,177.1 630.9,187.0 631.3,190.0" fill="#d6d1c0"/>
<polygon points="600.4,171.5 599.4,166.5 598.2,180.3 598.8,183.4" fill="#d6d1c0"/>
<polygon points="844.1,232.1 843.9,229.7 842.6,244.5 842.9,248.6" fill="#bdb8a9"/>
<polygon points="630.9,242.3 631.6,239.7 630.7,227.5 630.3,229.1" fill="#d6d1c0"/>
<polygon points="598.1,251.8 599.1,249.8 598.0,233.8 597.3,235.1" fill="#d6d1c0"/>
<polygon points="940.5,290.2 943.0,285.7 935.9,285.3 934.0,288.4" fill="#fffffa"/>
<polygon points="506.7,292.2 514.6,293.5 514.2,287.4 506.2,286.1" fill="#dad5c3"/>
<polygon points="865.0,193.6 865.4,189.7 864.4,180.3 863.9,186.5" fill="#bdb8a9"/>
<polygon points="864.7,233.0 864.4,230.5 862.9,244.3 863.4,248.2" fill="#bdb8a9"/>
<polygon points="514.2,287.4 523.7,287.6 523.8,285.5 517.1,285.4" fill="#fffffa"/>
<polygon points="810.1,197.1 810.3,193.5 809.9,188.1 809.7,193.4" fill="#bdb8a9"/>
<polygon points="517.1,285.4 523.8,285.5 522.8,273.1 515.7,272.9" fill="#e6e1ce"/>
<polygon points="809.8,225.3 809.7,222.7 809.1,230.9 809.2,234.8" fill="#bdb8a9"/>
<polygon points="754.7,334.9 779.8,329.4 784.4,306.2 756.3,311.5" fill="#b2aea0"/>
<polygon points="524.1,293.7 533.7,292.8 533.2,286.7 523.7,287.6" fill="#f7f2dd"/>
<polygon points="820.0,183.0 820.3,178.5 820.1,172.5 819.7,178.2" fill="#bdb8a9"/>
<polygon points="819.3,240.4 819.1,238.0 818.6,247.6 818.9,250.7" fill="#bdb8a9"/>
<polygon points="546.5,247.2 550.8,241.9 548.8,228.9 544.4,234.1" fill="#f8f2dd"/>
<polygon points="902.1,286.4 905.3,289.4 905.4,275.5 902.0,272.4" fill="#a9a597"/>
<polygon points="879.5,198.9 879.8,195.0 879.1,190.4 878.7,195.7" fill="#bdb8a9"/>
<polygon points="559.9,178.2 559.0,174.5 558.7,178.3 559.4,181.5" fill="#d6d1c0"/>
<polygon points="879.3,229.4 879.1,226.5 878.1,232.2 878.4,236.0" fill="#bdb8a9"/>
<polygon points="558.0,236.6 558.9,235.1 558.6,231.8 557.8,233.1" fill="#d6d1c0"/>
<polygon points="514.6,293.5 524.1,293.7 523.7,287.6 514.2,287.4" fill="#ebe5d2"/>
<polygon points="899.4,297.3 906.8,300.5 907.2,294.8 899.8,291.6" fill="#bbb6a7"/>
<polygon points="899.8,291.6 907.2,294.8 910.5,291.7 905.3,289.4" fill="#fffffa"/>
<polygon points="810.3,193.5 810.5,190.0 810.2,183.0 809.9,188.1" fill="#bdb8a9"/>
<polygon points="809.9,227.5 809.8,225.3 809.2,234.8 809.3,238.0" fill="#bdb8a9"/>
<polygon points="934.0,288.4 935.9,285.3 937.8,271.1 935.9,274.4" fill="#f6f1dc"/>
<polygon points="632.0,177.1 631.4,173.0 630.5,184.4 630.9,187.0" fill="#d6d1c0"/>
<polygon points="548.8,200.0 548.9,198.2 549.4,180.5 549.3,182.1" fill="#d0cbba"/>
<polygon points="630.2,244.0 630.9,242.3 630.3,229.1 629.8,230.1" fill="#d6d1c0"/>
<polygon points="844.8,190.3 845.1,186.8 844.6,173.5 844.0,179.2" fill="#bdb8a9"/>
<polygon points="844.4,233.9 844.1,232.1 842.9,248.6 843.3,251.7" fill="#bdb8a9"/>
<polygon points="542.5,271.8 545.1,270.0 546.5,259.3 543.6,261.2" fill="#aaa698"/>
<polygon points="576.8,165.5 575.7,161.4 574.7,176.7 575.5,179.3" fill="#d6d1c0"/>
<polygon points="865.4,189.7 865.8,186.1 865.1,174.7 864.4,180.3" fill="#bdb8a9"/>
<polygon points="625.0,166.1 624.2,161.9 623.8,169.5 624.5,173.0" fill="#d6d1c0"/>
<polygon points="893.6,266.3 895.9,271.5 893.8,258.7 891.2,253.1" fill="#928e82"/>
<polygon points="574.2,251.8 575.5,250.8 574.6,234.1 573.8,234.6" fill="#d6d1c0"/>
<polygon points="865.0,234.8 864.7,233.0 863.4,248.2 863.9,251.3" fill="#bdb8a9"/>
<polygon points="934.6,293.8 940.5,290.2 934.0,288.4 929.8,291.0" fill="#fffffa"/>
<polygon points="622.7,253.3 623.6,252.3 623.3,244.0 622.6,244.7" fill="#d6d1c0"/>
<polygon points="934.2,299.5 940.1,295.9 940.5,290.2 934.6,293.8" fill="#f6f1dc"/>
<polygon points="879.8,195.0 880.2,191.3 879.7,185.6 879.1,190.4" fill="#bdb8a9"/>
<polygon points="879.6,231.7 879.3,229.4 878.4,236.0 878.8,239.1" fill="#bdb8a9"/>
<polygon points="599.4,166.5 598.4,162.4 597.6,177.7 598.2,180.3" fill="#d6d1c0"/>
<polygon points="597.0,252.8 598.1,251.8 597.3,235.1 596.6,235.6" fill="#d6d1c0"/>
<polygon points="544.4,234.1 548.8,228.9 547.1,220.0 542.6,225.0" fill="#bbb7a7"/>
<polygon points="905.3,289.4 910.5,291.7 911.0,277.7 905.4,275.5" fill="#b6b2a3"/>
<polygon points="681.7,333.9 693.8,334.1 692.7,310.7 680.0,310.5" fill="#bfbbab"/>
<polygon points="559.0,174.5 558.1,171.6 557.8,175.7 558.7,178.3" fill="#d6d1c0"/>
<polygon points="820.3,178.5 820.7,174.6 820.6,167.5 820.1,172.5" fill="#bdb8a9"/>
<polygon points="557.0,237.2 558.0,236.6 557.8,233.1 556.9,233.6" fill="#d6d1c0"/>
<polygon points="819.6,242.0 819.3,240.4 818.9,250.7 819.2,252.8" fill="#bdb8a9"/>
<polygon points="907.2,294.8 916.5,296.3 917.1,292.7 910.5,291.7" fill="#fffffa"/>
<polygon points="693.8,334.1 706.0,334.2 705.4,310.9 692.7,310.7" fill="#bfbbab"/>
<polygon points="810.5,190.0 810.7,187.0 810.5,178.5 810.2,183.0" fill="#bdb8a9"/>
<polygon points="906.8,300.5 916.1,302.0 916.5,296.3 907.2,294.8" fill="#cbc7b6"/>
<polygon points="810.0,229.1 809.9,227.5 809.3,238.0 809.5,240.4" fill="#bdb8a9"/>
<polygon points="706.0,334.2 718.2,334.4 718.1,311.0 705.4,310.9" fill="#bfbbab"/>
<polygon points="718.2,334.4 730.3,334.6 730.8,311.2 718.1,311.0" fill="#bfbbab"/>
<polygon points="926.1,296.0 934.6,293.8 929.8,291.0 923.9,292.5" fill="#fffffa"/>
<polygon points="929.8,291.0 934.0,288.4 935.9,274.4 931.4,277.0" fill="#f2ecd8"/>
<polygon points="653.7,304.6 680.0,310.5 677.9,285.1 645.6,279.4" fill="#d9d4c2"/>
<polygon points="495.3,270.9 496.9,272.1 492.4,261.4 490.6,260.2" fill="#89867b"/>
<polygon points="730.3,334.6 742.5,334.7 743.5,311.3 730.8,311.2" fill="#bfbbab"/>
<polygon points="631.4,173.0 630.7,169.5 630.1,182.2 630.5,184.4" fill="#d6d1c0"/>
<polygon points="925.7,301.7 934.2,299.5 934.6,293.8 926.1,296.0" fill="#ece6d3"/>
<polygon points="629.5,244.7 630.2,244.0 629.8,230.1 629.3,230.5" fill="#d6d1c0"/>
<polygon points="916.5,296.3 926.1,296.0 923.9,292.5 917.1,292.7" fill="#fffffa"/>
<polygon points="742.5,334.7 754.7,334.9 756.3,311.5 743.5,311.3" fill="#bfbbab"/>
<polygon points="880.2,191.3 880.7,188.0 880.2,181.2 879.7,185.6" fill="#bdb8a9"/>
<polygon points="880.0,233.4 879.6,231.7 878.8,239.1 879.3,241.4" fill="#bdb8a9"/>
<polygon points="845.1,186.8 845.5,183.9 845.2,168.5 844.6,173.5" fill="#bdb8a9"/>
<polygon points="844.7,235.1 844.4,233.9 843.3,251.7 843.8,253.8" fill="#bdb8a9"/>
<polygon points="563.9,251.5 565.3,251.8 574.2,251.8 572.9,251.5" fill="#9e9a8d"/>
<polygon points="916.1,302.0 925.7,301.7 926.1,296.0 916.5,296.3" fill="#ddd8c5"/>
<polygon points="582.9,252.5 584.1,252.8 597.0,252.8 595.8,252.5" fill="#9e9a8d"/>
<polygon points="539.1,272.9 542.5,271.8 543.6,261.2 539.8,262.3" fill="#aba799"/>
<polygon points="865.8,186.1 866.2,183.1 865.8,169.8 865.1,174.7" fill="#bdb8a9"/>
<polygon points="910.5,291.7 917.1,292.7 917.9,278.9 911.0,277.7" fill="#c7c3b2"/>
<polygon points="865.4,236.1 865.0,234.8 863.9,251.3 864.5,253.3" fill="#bdb8a9"/>
<polygon points="891.2,253.1 893.8,258.7 893.9,246.8 891.2,241.1" fill="#9d998d"/>
<polygon points="543.6,261.2 546.5,259.3 546.5,247.2 543.4,249.2" fill="#beb9a9"/>
<polygon points="607.8,253.0 608.8,253.3 622.7,253.3 621.7,253.0" fill="#9e9a8d"/>
<polygon points="542.6,225.0 547.1,220.0 547.8,207.0 543.1,212.0" fill="#e3decb"/>
<polygon points="575.7,161.4 574.4,158.2 573.9,174.7 574.7,176.7" fill="#d6d1c0"/>
<polygon points="923.9,292.5 929.8,291.0 931.4,277.0 925.1,278.6" fill="#e8e2cf"/>
<polygon points="572.9,251.5 574.2,251.8 573.8,234.6 572.9,234.4" fill="#d6d1c0"/>
<polygon points="598.4,162.4 597.3,159.2 596.8,175.7 597.6,177.7" fill="#d6d1c0"/>
<polygon points="595.8,252.5 597.0,252.8 596.6,235.6 595.9,235.4" fill="#d6d1c0"/>
<polygon points="543.0,236.4 544.1,236.7 557.0,237.2 556.0,236.9" fill="#9e9a8d"/>
<polygon points="917.1,292.7 923.9,292.5 925.1,278.6 917.9,278.9" fill="#d8d3c2"/>
<polygon points="624.2,161.9 623.2,158.7 623.0,167.0 623.8,169.5" fill="#d6d1c0"/>
<polygon points="810.7,187.0 810.9,184.4 810.8,174.6 810.5,178.5" fill="#bdb8a9"/>
<polygon points="621.7,253.0 622.7,253.3 622.6,244.7 621.8,244.5" fill="#d6d1c0"/>
<polygon points="558.1,171.6 557.1,169.3 556.9,173.7 557.8,175.7" fill="#d6d1c0"/>
<polygon points="810.1,230.1 810.0,229.1 809.5,240.4 809.7,242.0" fill="#bdb8a9"/>
<polygon points="496.9,272.1 500.5,272.8 496.4,262.3 492.4,261.4" fill="#949084"/>
<polygon points="556.0,236.9 557.0,237.2 556.9,233.6 556.0,233.4" fill="#d6d1c0"/>
<polygon points="549.3,182.1 549.4,180.5 548.5,160.9 548.4,162.4" fill="#fffffa"/>
<polygon points="556.0,233.4 556.9,233.6 564.8,234.6 564.0,234.4" fill="#9e9a8d"/>
<polygon points="756.3,311.5 784.4,306.2 792.5,281.1 758.3,286.0" fill="#f2edd9"/>
<polygon points="572.9,234.4 573.8,234.6 583.7,235.6 582.9,235.4" fill="#9e9a8d"/>
<polygon points="621.8,244.5 622.6,244.7 629.5,244.7 628.8,244.5" fill="#9e9a8d"/>
<polygon points="820.7,174.6 821.0,171.4 821.0,163.3 820.6,167.5" fill="#bdb8a9"/>
<polygon points="595.9,235.4 596.6,235.6 608.5,235.6 607.9,235.4" fill="#9e9a8d"/>
<polygon points="819.9,242.7 819.6,242.0 819.2,252.8 819.6,253.7" fill="#bdb8a9"/>
<polygon points="534.3,273.5 539.1,272.9 539.8,262.3 534.5,263.0" fill="#a9a597"/>
<polygon points="880.7,188.0 881.2,185.2 880.9,177.4 880.2,181.2" fill="#bdb8a9"/>
<polygon points="880.4,234.6 880.0,233.4 879.3,241.4 879.8,243.0" fill="#bdb8a9"/>
<polygon points="630.7,169.5 630.0,167.0 629.6,180.6 630.1,182.2" fill="#d6d1c0"/>
<polygon points="628.8,244.5 629.5,244.7 629.3,230.5 628.8,230.3" fill="#d6d1c0"/>
<polygon points="500.5,272.8 507.2,273.3 503.9,262.8 496.4,262.3" fill="#9c998c"/>
<polygon points="490.6,260.2 492.4,261.4 490.3,249.4 488.5,248.2" fill="#989488"/>
<polygon points="845.5,183.9 845.9,181.5 845.8,164.3 845.2,168.5" fill="#bdb8a9"/>
<polygon points="845.0,235.6 844.7,235.1 843.8,253.8 844.3,254.7" fill="#bdb8a9"/>
<polygon points="527.1,273.7 534.3,273.5 534.5,263.0 526.3,263.2" fill="#a4a092"/>
<polygon points="891.2,241.1 893.9,246.8 894.7,236.7 892.0,231.2" fill="#bab6a7"/>
<polygon points="507.2,273.3 527.1,273.7 526.3,263.2 503.9,262.8" fill="#a09c8f"/>
<polygon points="628.8,230.3 629.3,230.5 640.3,230.5 639.8,230.3" fill="#9e9a8d"/>
<polygon points="543.1,212.0 547.8,207.0 548.8,200.0 543.9,205.1" fill="#969286"/>
<polygon points="866.2,183.1 866.7,180.6 866.6,165.7 865.8,169.8" fill="#bdb8a9"/>
<polygon points="865.8,236.6 865.4,236.1 864.5,253.3 865.2,254.2" fill="#bdb8a9"/>
<polygon points="543.4,249.2 546.5,247.2 544.4,234.1 541.3,236.0" fill="#faf5e0"/>
<polygon points="810.9,184.4 811.1,182.2 811.1,171.4 810.8,174.6" fill="#bdb8a9"/>
<polygon points="810.3,230.5 810.1,230.1 809.7,242.0 810.0,242.7" fill="#bdb8a9"/>
<polygon points="539.8,262.3 543.6,261.2 543.4,249.2 539.5,250.3" fill="#bfbbab"/>
<polygon points="555.1,232.4 556.0,233.4 564.0,234.4 563.1,233.4" fill="#9e9a8d"/>
<polygon points="557.1,169.3 556.0,167.9 556.0,172.5 556.9,173.7" fill="#d6d1c0"/>
<polygon points="541.9,235.3 543.0,236.4 556.0,236.9 554.9,235.8" fill="#9e9a8d"/>
<polygon points="562.5,250.1 563.9,251.5 572.9,251.5 571.6,250.1" fill="#9e9a8d"/>
<polygon points="554.9,235.8 556.0,236.9 556.0,233.4 555.1,232.4" fill="#d6d1c0"/>
<polygon points="574.4,158.2 573.1,156.1 573.1,173.5 573.9,174.7" fill="#d6d1c0"/>
<polygon points="572.1,233.4 572.9,234.4 582.9,235.4 582.1,234.4" fill="#9e9a8d"/>
<polygon points="571.6,250.1 572.9,251.5 572.9,234.4 572.1,233.4" fill="#d6d1c0"/>
<polygon points="581.6,251.1 582.9,252.5 595.8,252.5 594.7,251.1" fill="#9e9a8d"/>
<polygon points="597.3,159.2 596.2,157.1 596.1,174.5 596.8,175.7" fill="#d6d1c0"/>
<polygon points="594.7,251.1 595.8,252.5 595.9,235.4 595.1,234.4" fill="#d6d1c0"/>
<polygon points="595.1,234.4 595.9,235.4 607.9,235.4 607.2,234.4" fill="#9e9a8d"/>
<polygon points="881.2,185.2 881.7,182.9 881.5,174.2 880.9,177.4" fill="#bdb8a9"/>
<polygon points="880.8,235.0 880.4,234.6 879.8,243.0 880.4,243.7" fill="#bdb8a9"/>
<polygon points="680.0,310.5 692.7,310.7 691.3,285.2 677.9,285.1" fill="#f0ead6"/>
<polygon points="606.7,251.6 607.8,253.0 621.7,253.0 620.7,251.6" fill="#9e9a8d"/>
<polygon points="492.4,261.4 496.4,262.3 494.5,250.2 490.3,249.4" fill="#a4a093"/>
<polygon points="623.2,158.7 622.3,156.6 622.2,165.3 623.0,167.0" fill="#d6d1c0"/>
<polygon points="620.7,251.6 621.7,253.0 621.8,244.5 621.0,243.3" fill="#d6d1c0"/>
<polygon points="692.7,310.7 705.4,310.9 704.7,285.4 691.3,285.2" fill="#f0ead6"/>
<polygon points="548.4,162.4 548.5,160.9 546.7,151.2 546.6,152.6" fill="#d0cbba"/>
<polygon points="895.9,271.5 898.0,273.4 896.2,260.8 893.8,258.7" fill="#959185"/>
<polygon points="820.0,253.5 819.6,253.7 828.5,253.7 829.0,253.5" fill="#9e9a8d"/>
<polygon points="621.0,243.3 621.8,244.5 628.8,244.5 628.0,243.3" fill="#9e9a8d"/>
<polygon points="630.0,167.0 629.3,165.3 629.2,179.6 629.6,180.6" fill="#d6d1c0"/>
<polygon points="628.0,243.3 628.8,244.5 628.8,230.3 628.4,229.5" fill="#d6d1c0"/>
<polygon points="645.6,279.4 677.9,285.1 676.3,262.6 636.5,257.2" fill="#a19d90"/>
<polygon points="628.4,229.5 628.8,230.3 639.8,230.3 639.4,229.5" fill="#9e9a8d"/>
<polygon points="705.4,310.9 718.1,311.0 718.1,285.5 704.7,285.4" fill="#f0ead6"/>
<polygon points="892.0,231.2 894.7,236.7 896.9,226.6 894.1,221.3" fill="#8d8a7e"/>
<polygon points="844.9,254.5 844.3,254.7 852.8,254.7 853.4,254.5" fill="#9e9a8d"/>
<polygon points="821.0,171.4 821.4,168.9 821.5,160.2 821.0,163.3" fill="#bdb8a9"/>
<polygon points="820.2,242.4 819.9,242.7 819.6,253.7 820.0,253.5" fill="#bdb8a9"/>
<polygon points="718.1,311.0 730.8,311.2 731.5,285.7 718.1,285.5" fill="#f0ead6"/>
<polygon points="534.5,263.0 539.8,262.3 539.5,250.3 534.0,250.9" fill="#bcb8a9"/>
<polygon points="865.9,254.0 865.2,254.2 872.1,254.2 872.9,254.0" fill="#9e9a8d"/>
<polygon points="730.8,311.2 743.5,311.3 744.9,285.8 731.5,285.7" fill="#f0ead6"/>
<polygon points="810.3,242.4 810.0,242.7 819.9,242.7 820.2,242.4" fill="#9e9a8d"/>
<polygon points="543.9,205.1 548.8,200.0 549.3,182.1 544.2,187.0" fill="#d1ccbb"/>
<polygon points="488.5,248.2 490.3,249.4 487.2,236.2 485.4,235.0" fill="#c9c4b4"/>
<polygon points="743.5,311.3 756.3,311.5 758.3,286.0 744.9,285.8" fill="#f0ead6"/>
<polygon points="845.9,181.5 846.3,179.7 846.4,161.2 845.8,164.3" fill="#bdb8a9"/>
<polygon points="845.4,235.4 845.0,235.6 844.3,254.7 844.9,254.5" fill="#bdb8a9"/>
<polygon points="496.4,262.3 503.9,262.8 502.3,250.7 494.5,250.2" fill="#aeaa9c"/>
<polygon points="541.3,236.0 544.4,234.1 542.6,225.0 539.5,226.8" fill="#bdb9a9"/>
<polygon points="811.1,182.2 811.3,180.6 811.4,168.9 811.1,171.4" fill="#bdb8a9"/>
<polygon points="810.5,230.3 810.3,230.5 810.0,242.7 810.3,242.4" fill="#bdb8a9"/>
<polygon points="866.7,180.6 867.2,178.7 867.3,162.7 866.6,165.7" fill="#bdb8a9"/>
<polygon points="866.3,236.4 865.8,236.6 865.2,254.2 865.9,254.0" fill="#bdb8a9"/>
<polygon points="554.2,230.7 555.1,232.4 563.1,233.4 562.2,231.7" fill="#9e9a8d"/>
<polygon points="526.3,263.2 534.5,263.0 534.0,250.9 525.5,251.1" fill="#b6b2a3"/>
<polygon points="799.5,230.3 799.4,230.5 810.3,230.5 810.5,230.3" fill="#9e9a8d"/>
<polygon points="503.9,262.8 526.3,263.2 525.5,251.1 502.3,250.7" fill="#b2aea0"/>
<polygon points="571.3,231.7 572.1,233.4 582.1,234.4 581.3,232.7" fill="#9e9a8d"/>
<polygon points="556.0,167.9 555.0,167.3 555.1,172.0 556.0,172.5" fill="#d6d1c0"/>
<polygon points="829.4,234.4 829.1,234.6 845.0,235.6 845.4,235.4" fill="#9e9a8d"/>
<polygon points="553.9,233.9 554.9,235.8 555.1,232.4 554.2,230.7" fill="#d6d1c0"/>
<polygon points="539.5,250.3 543.4,249.2 541.3,236.0 537.3,237.1" fill="#fdf7e2"/>
<polygon points="540.8,233.4 541.9,235.3 554.9,235.8 553.9,233.9" fill="#9e9a8d"/>
<polygon points="853.8,236.4 853.4,236.6 865.8,236.6 866.3,236.4" fill="#9e9a8d"/>
<polygon points="881.1,243.4 880.4,243.7 897.3,243.7 898.0,243.4" fill="#9e9a8d"/>
<polygon points="594.4,232.7 595.1,234.4 607.2,234.4 606.5,232.7" fill="#9e9a8d"/>
<polygon points="881.7,182.9 882.2,181.1 882.2,171.9 881.5,174.2" fill="#bdb8a9"/>
<polygon points="881.3,234.8 880.8,235.0 880.4,243.7 881.1,243.4" fill="#bdb8a9"/>
<polygon points="627.9,228.1 628.4,229.5 639.4,229.5 638.9,228.1" fill="#9e9a8d"/>
<polygon points="573.1,156.1 571.8,155.2 572.2,173.0 573.1,173.5" fill="#d6d1c0"/>
<polygon points="758.3,286.0 792.5,281.1 801.7,258.9 759.9,263.5" fill="#c7c2b2"/>
<polygon points="570.3,247.6 571.6,250.1 572.1,233.4 571.3,231.7" fill="#d6d1c0"/>
<polygon points="873.3,234.8 872.9,235.0 880.8,235.0 881.3,234.8" fill="#9e9a8d"/>
<polygon points="596.2,157.1 595.0,156.2 595.4,174.0 596.1,174.5" fill="#d6d1c0"/>
<polygon points="593.5,248.6 594.7,251.1 595.1,234.4 594.4,232.7" fill="#d6d1c0"/>
<polygon points="546.6,152.6 546.7,151.2 546.7,138.5 546.6,139.7" fill="#f7f1dd"/>
<polygon points="629.3,165.3 628.5,164.6 628.7,179.2 629.2,179.6" fill="#d6d1c0"/>
<polygon points="627.2,241.1 628.0,243.3 628.4,229.5 627.9,228.1" fill="#d6d1c0"/>
<polygon points="490.3,249.4 494.5,250.2 491.5,237.0 487.2,236.2" fill="#d9d4c2"/>
<polygon points="894.1,221.3 896.9,226.6 899.7,212.4 896.8,207.5" fill="#b1ad9f"/>
<polygon points="561.2,247.6 562.5,250.1 571.6,250.1 570.3,247.6" fill="#9e9a8d"/>
<polygon points="898.0,273.4 901.3,274.6 899.9,262.0 896.2,260.8" fill="#9d998c"/>
<polygon points="580.4,248.6 581.6,251.1 594.7,251.1 593.5,248.6" fill="#9e9a8d"/>
<polygon points="620.2,241.1 621.0,243.3 628.0,243.3 627.2,241.1" fill="#9e9a8d"/>
<polygon points="893.8,258.7 896.2,260.8 896.4,248.8 893.9,246.8" fill="#a09d8f"/>
<polygon points="485.4,235.0 487.2,236.2 485.4,227.0 483.6,225.8" fill="#989488"/>
<polygon points="622.3,156.6 621.3,155.7 621.4,164.6 622.2,165.3" fill="#d6d1c0"/>
<polygon points="619.8,249.0 620.7,251.6 621.0,243.3 620.2,241.1" fill="#d6d1c0"/>
<polygon points="534.0,250.9 539.5,250.3 537.3,237.1 531.6,237.7" fill="#f9f3df"/>
<polygon points="799.7,229.5 799.5,230.3 810.5,230.3 810.7,229.5" fill="#9e9a8d"/>
<polygon points="539.5,226.8 542.6,225.0 543.1,212.0 539.8,213.8" fill="#e6e1ce"/>
<polygon points="811.3,180.6 811.5,179.6 811.7,167.3 811.4,168.9" fill="#bdb8a9"/>
<polygon points="605.6,249.0 606.7,251.6 620.7,251.6 619.8,249.0" fill="#9e9a8d"/>
<polygon points="810.7,229.5 810.5,230.3 810.3,242.4 810.6,241.3" fill="#bdb8a9"/>
<polygon points="636.5,257.2 676.3,262.6 675.8,252.3 633.4,247.0" fill="#b7b3a4"/>
<polygon points="821.4,168.9 821.8,167.3 822.0,158.1 821.5,160.2" fill="#bdb8a9"/>
<polygon points="555.1,172.0 554.2,172.2 562.3,173.2 563.2,173.0" fill="#fffffa"/>
<polygon points="820.5,252.1 820.0,253.5 829.0,253.5 829.5,252.1" fill="#9e9a8d"/>
<polygon points="820.6,241.3 820.2,242.4 820.0,253.5 820.5,252.1" fill="#bdb8a9"/>
<polygon points="810.6,241.3 810.3,242.4 820.2,242.4 820.6,241.3" fill="#9e9a8d"/>
<polygon points="553.3,228.3 554.2,230.7 562.2,231.7 561.4,229.3" fill="#ada99b"/>
<polygon points="945.6,274.8 947.6,273.6 952.3,261.0 950.1,262.2" fill="#c4bfaf"/>
<polygon points="829.7,233.4 829.4,234.4 845.4,235.4 845.7,234.4" fill="#9e9a8d"/>
<polygon points="846.3,179.7 846.6,178.5 847.1,159.1 846.4,161.2" fill="#bdb8a9"/>
<polygon points="572.2,173.0 571.4,173.2 581.5,174.3 582.3,174.0" fill="#fffffa"/>
<polygon points="570.5,229.3 571.3,231.7 581.3,232.7 580.6,230.3" fill="#ada99b"/>
<polygon points="845.7,234.4 845.4,235.4 844.9,254.5 845.6,253.1" fill="#bdb8a9"/>
<polygon points="494.5,250.2 502.3,250.7 499.4,237.5 491.5,237.0" fill="#e6e1ce"/>
<polygon points="845.6,253.1 844.9,254.5 853.4,254.5 854.1,253.1" fill="#9e9a8d"/>
<polygon points="628.7,179.2 628.2,179.4 639.3,179.4 639.7,179.2" fill="#fffffa"/>
<polygon points="555.0,167.3 554.0,167.6 554.2,172.2 555.1,172.0" fill="#d6d1c0"/>
<polygon points="627.4,226.0 627.9,228.1 638.9,228.1 638.5,226.0" fill="#ada99b"/>
<polygon points="537.3,237.1 541.3,236.0 539.5,226.8 535.4,227.8" fill="#bfbbab"/>
<polygon points="552.9,231.2 553.9,233.9 554.2,230.7 553.3,228.3" fill="#d6d1c0"/>
<polygon points="854.3,235.4 853.8,236.4 866.3,236.4 866.8,235.4" fill="#9e9a8d"/>
<polygon points="867.2,178.7 867.7,177.5 868.1,160.7 867.3,162.7" fill="#bdb8a9"/>
<polygon points="595.4,174.0 594.6,174.3 606.8,174.3 607.5,174.0" fill="#fffffa"/>
<polygon points="866.8,235.4 866.3,236.4 865.9,254.0 866.7,252.7" fill="#bdb8a9"/>
<polygon points="593.7,230.3 594.4,232.7 606.5,232.7 605.9,230.3" fill="#ada99b"/>
<polygon points="866.7,252.7 865.9,254.0 872.9,254.0 873.7,252.7" fill="#9e9a8d"/>
<polygon points="541.9,166.8 540.8,167.1 554.0,167.6 555.0,167.3" fill="#fffffa"/>
<polygon points="873.8,234.0 873.3,234.8 881.3,234.8 881.8,234.0" fill="#9e9a8d"/>
<polygon points="539.8,230.7 540.8,233.4 553.9,233.9 552.9,231.2" fill="#ada99b"/>
<polygon points="525.5,251.1 534.0,250.9 531.6,237.7 523.0,237.9" fill="#f1ebd7"/>
<polygon points="882.2,181.1 882.7,180.0 882.9,170.4 882.2,171.9" fill="#bdb8a9"/>
<polygon points="881.8,234.0 881.3,234.8 881.1,243.4 881.8,242.3" fill="#bdb8a9"/>
<polygon points="502.3,250.7 525.5,251.1 523.0,237.9 499.4,237.5" fill="#ece6d3"/>
<polygon points="901.3,274.6 906.0,275.3 905.2,262.8 899.9,262.0" fill="#a9a597"/>
<polygon points="881.8,242.3 881.1,243.4 898.0,243.4 898.8,242.3" fill="#9e9a8d"/>
<polygon points="544.2,187.0 549.3,182.1 548.4,162.4 543.4,166.7" fill="#fffffa"/>
<polygon points="896.8,207.5 899.7,212.4 899.0,206.5 896.1,201.5" fill="#716e65"/>
<polygon points="628.5,164.6 627.7,164.9 628.2,179.4 628.7,179.2" fill="#d6d1c0"/>
<polygon points="626.5,238.0 627.2,241.1 627.9,228.1 627.4,226.0" fill="#d6d1c0"/>
<polygon points="487.2,236.2 491.5,237.0 489.6,227.7 485.4,227.0" fill="#a4a093"/>
<polygon points="571.8,155.2 570.5,155.5 571.4,173.2 572.2,173.0" fill="#d6d1c0"/>
<polygon points="677.9,285.1 691.3,285.2 690.2,262.8 676.3,262.6" fill="#b2aea0"/>
<polygon points="569.0,243.9 570.3,247.6 571.3,231.7 570.5,229.3" fill="#d6d1c0"/>
<polygon points="633.4,247.0 675.8,252.3 675.8,246.1 631.9,240.9" fill="#aaa698"/>
<polygon points="595.0,156.2 593.9,156.5 594.6,174.3 595.4,174.0" fill="#d6d1c0"/>
<polygon points="691.3,285.2 704.7,285.4 704.1,262.9 690.2,262.8" fill="#b2aea0"/>
<polygon points="592.4,244.9 593.5,248.6 594.4,232.7 593.7,230.3" fill="#d6d1c0"/>
<polygon points="799.9,228.1 799.7,229.5 810.7,229.5 810.9,228.1" fill="#9e9a8d"/>
<polygon points="941.6,275.5 945.6,274.8 950.1,262.2 945.5,263.0" fill="#c1bdad"/>
<polygon points="704.7,285.4 718.1,285.5 718.0,263.1 704.1,262.9" fill="#b2aea0"/>
<polygon points="893.9,246.8 896.4,248.8 897.3,238.7 894.7,236.7" fill="#bebaaa"/>
<polygon points="483.6,225.8 485.4,227.0 482.9,213.9 481.0,212.8" fill="#b9b4a5"/>
<polygon points="906.0,275.3 913.5,275.7 913.7,263.2 905.2,262.8" fill="#b3afa0"/>
<polygon points="759.9,263.5 801.7,258.9 804.8,248.8 760.4,253.2" fill="#d2cdbc"/>
<polygon points="531.6,237.7 537.3,237.1 535.4,227.8 529.8,228.4" fill="#bcb8a9"/>
<polygon points="628.2,179.4 627.7,180.3 638.9,180.3 639.3,179.4" fill="#fffffa"/>
<polygon points="554.2,172.2 553.3,173.3 561.5,174.3 562.3,173.2" fill="#fffffa"/>
<polygon points="718.1,285.5 731.5,285.7 732.0,263.2 718.0,263.1" fill="#b2aea0"/>
<polygon points="627.0,223.5 627.4,226.0 638.5,226.0 638.2,223.5" fill="#ada99b"/>
<polygon points="552.5,225.2 553.3,228.3 561.4,229.3 560.6,226.2" fill="#ada99b"/>
<polygon points="811.5,179.6 811.7,179.2 812.0,166.7 811.7,167.3" fill="#bdb8a9"/>
<polygon points="830.0,231.8 829.7,233.4 845.7,234.4 846.1,232.9" fill="#9e9a8d"/>
<polygon points="539.8,213.8 543.1,212.0 543.9,205.1 540.5,206.9" fill="#979487"/>
<polygon points="571.4,173.2 570.6,174.3 580.7,175.3 581.5,174.3" fill="#fffffa"/>
<polygon points="810.9,228.1 810.7,229.5 810.6,241.3 810.9,239.2" fill="#bdb8a9"/>
<polygon points="621.4,164.6 620.6,164.9 627.7,164.9 628.5,164.6" fill="#fffffa"/>
<polygon points="569.7,226.2 570.5,229.3 580.6,230.3 579.9,227.2" fill="#ada99b"/>
<polygon points="619.4,238.0 620.2,241.1 627.2,241.1 626.5,238.0" fill="#ada99b"/>
<polygon points="731.5,285.7 744.9,285.8 745.9,263.4 732.0,263.2" fill="#b2aea0"/>
<polygon points="491.5,237.0 499.4,237.5 497.6,228.2 489.6,227.7" fill="#aeaa9c"/>
<polygon points="896.2,260.8 899.9,262.0 900.3,250.1 896.4,248.8" fill="#a9a597"/>
<polygon points="934.5,275.8 941.6,275.5 945.5,263.0 937.4,263.3" fill="#bbb7a7"/>
<polygon points="913.5,275.7 934.5,275.8 937.4,263.3 913.7,263.2" fill="#b7b3a4"/>
<polygon points="744.9,285.8 758.3,286.0 759.9,263.5 745.9,263.4" fill="#b2aea0"/>
<polygon points="594.6,174.3 593.9,175.3 606.1,175.3 606.8,174.3" fill="#fffffa"/>
<polygon points="562.7,155.2 561.3,155.5 570.5,155.5 571.8,155.2" fill="#fffffa"/>
<polygon points="854.7,233.8 854.3,235.4 866.8,235.4 867.3,233.8" fill="#9e9a8d"/>
<polygon points="554.0,167.6 553.0,168.7 553.3,173.3 554.2,172.2" fill="#d6d1c0"/>
<polygon points="593.1,227.2 593.7,230.3 605.9,230.3 605.3,227.2" fill="#ada99b"/>
<polygon points="559.9,243.9 561.2,247.6 570.3,247.6 569.0,243.9" fill="#ada99b"/>
<polygon points="552.0,227.7 552.9,231.2 553.3,228.3 552.5,225.2" fill="#d6d1c0"/>
<polygon points="874.3,232.4 873.8,234.0 881.8,234.0 882.4,232.4" fill="#9e9a8d"/>
<polygon points="581.9,156.2 580.6,156.5 593.9,156.5 595.0,156.2" fill="#fffffa"/>
<polygon points="810.9,239.2 810.6,241.3 820.6,241.3 821.0,239.2" fill="#9e9a8d"/>
<polygon points="535.4,227.8 539.5,226.8 539.8,213.8 535.5,214.8" fill="#e8e3d0"/>
<polygon points="621.3,155.7 620.3,156.0 620.6,164.9 621.4,164.6" fill="#d6d1c0"/>
<polygon points="579.2,244.9 580.4,248.6 593.5,248.6 592.4,244.9" fill="#ada99b"/>
<polygon points="618.9,245.3 619.8,249.0 620.2,241.1 619.4,238.0" fill="#d6d1c0"/>
<polygon points="846.6,178.5 847.0,178.1 847.7,158.2 847.1,159.1" fill="#bdb8a9"/>
<polygon points="630.5,241.8 674.3,246.9 672.9,241.9 626.7,236.3" fill="#88857a"/>
<polygon points="523.0,237.9 531.6,237.7 529.8,228.4 521.2,228.6" fill="#b6b2a3"/>
<polygon points="846.1,232.9 845.7,234.4 845.6,253.1 846.2,250.6" fill="#bdb8a9"/>
<polygon points="540.8,167.1 539.7,168.2 553.0,168.7 554.0,167.6" fill="#fffffa"/>
<polygon points="499.4,237.5 523.0,237.9 521.2,228.6 497.6,228.2" fill="#b3aea0"/>
<polygon points="538.8,227.2 539.8,230.7 552.9,231.2 552.0,227.7" fill="#ada99b"/>
<polygon points="882.7,180.0 883.2,179.6 883.6,169.8 882.9,170.4" fill="#bdb8a9"/>
<polygon points="821.8,167.3 822.1,166.7 822.4,157.2 822.0,158.1" fill="#bdb8a9"/>
<polygon points="882.4,232.4 881.8,234.0 881.8,242.3 882.5,240.3" fill="#bdb8a9"/>
<polygon points="821.0,239.2 820.6,241.3 820.5,252.1 821.0,249.6" fill="#bdb8a9"/>
<polygon points="896.1,201.5 899.0,206.5 898.5,190.3 895.6,185.6" fill="#ada99b"/>
<polygon points="867.7,177.5 868.2,177.0 868.9,159.8 868.1,160.7" fill="#bdb8a9"/>
<polygon points="607.1,155.7 606.1,156.0 620.3,156.0 621.3,155.7" fill="#fffffa"/>
<polygon points="867.3,233.8 866.8,235.4 866.7,252.7 867.4,250.2" fill="#bdb8a9"/>
<polygon points="604.6,245.3 605.6,249.0 619.8,249.0 618.9,245.3" fill="#ada99b"/>
<polygon points="950.1,262.2 952.3,261.0 955.5,249.0 953.1,250.3" fill="#d5d0be"/>
<polygon points="800.6,179.2 800.8,179.4 811.9,179.4 811.7,179.2" fill="#fffffa"/>
<polygon points="627.7,164.9 627.0,166.2 627.7,180.3 628.2,179.4" fill="#d6d1c0"/>
<polygon points="800.0,226.0 799.9,228.1 810.9,228.1 811.1,226.0" fill="#ada99b"/>
<polygon points="821.0,249.6 820.5,252.1 829.5,252.1 830.1,249.6" fill="#9e9a8d"/>
<polygon points="625.9,234.0 626.5,238.0 627.4,226.0 627.0,223.5" fill="#d6d1c0"/>
<polygon points="760.4,253.2 804.8,248.8 806.3,242.7 760.4,247.0" fill="#c2bdad"/>
<polygon points="882.5,240.3 881.8,242.3 898.8,242.3 899.6,240.3" fill="#9e9a8d"/>
<polygon points="627.7,180.3 627.3,181.8 638.4,181.8 638.9,180.3" fill="#fffffa"/>
<polygon points="626.6,220.4 627.0,223.5 638.2,223.5 637.8,220.4" fill="#ebe5d2"/>
<polygon points="846.2,250.6 845.6,253.1 854.1,253.1 854.8,250.6" fill="#9e9a8d"/>
<polygon points="485.4,227.0 489.6,227.7 487.3,214.7 482.9,213.9" fill="#c7c3b2"/>
<polygon points="543.4,166.7 548.4,162.4 546.6,152.6 541.8,156.4" fill="#d1ccbb"/>
<polygon points="894.7,236.7 897.3,238.7 899.5,228.5 896.9,226.6" fill="#908d81"/>
<polygon points="867.4,250.2 866.7,252.7 873.7,252.7 874.5,250.2" fill="#9e9a8d"/>
<polygon points="553.3,173.3 552.5,175.1 560.7,176.1 561.5,174.3" fill="#fffffa"/>
<polygon points="551.8,221.5 552.5,225.2 560.6,226.2 559.9,222.6" fill="#ebe5d2"/>
<polygon points="570.5,155.5 569.2,157.0 570.6,174.3 571.4,173.2" fill="#d6d1c0"/>
<polygon points="567.9,239.1 569.0,243.9 570.5,229.3 569.7,226.2" fill="#d6d1c0"/>
<polygon points="570.6,174.3 569.8,176.1 580.0,177.1 580.7,175.3" fill="#fffffa"/>
<polygon points="569.1,222.6 569.7,226.2 579.9,227.2 579.3,223.6" fill="#ebe5d2"/>
<polygon points="830.9,177.1 831.2,177.3 847.3,178.4 847.0,178.1" fill="#fffffa"/>
<polygon points="830.4,229.6 830.0,231.8 846.1,232.9 846.5,230.6" fill="#ada99b"/>
<polygon points="593.9,156.5 592.8,158.1 593.9,175.3 594.6,174.3" fill="#d6d1c0"/>
<polygon points="899.9,262.0 905.2,262.8 905.9,250.9 900.3,250.1" fill="#b7b3a4"/>
<polygon points="591.4,240.1 592.4,244.9 593.7,230.3 593.1,227.2" fill="#d6d1c0"/>
<polygon points="481.0,212.8 482.9,213.9 480.8,207.0 478.8,205.9" fill="#7a776d"/>
<polygon points="811.7,179.2 811.9,179.4 812.3,167.0 812.0,166.7" fill="#bdb8a9"/>
<polygon points="811.1,226.0 810.9,228.1 810.9,239.2 811.2,236.3" fill="#bdb8a9"/>
<polygon points="593.9,175.3 593.3,177.1 605.5,177.1 606.1,175.3" fill="#fffffa"/>
<polygon points="529.8,228.4 535.4,227.8 535.5,214.8 529.6,215.4" fill="#e5dfcc"/>
<polygon points="592.5,223.6 593.1,227.2 605.3,227.2 604.8,223.6" fill="#ebe5d2"/>
<polygon points="875.1,179.6 875.6,179.9 883.7,179.9 883.2,179.6" fill="#fffffa"/>
<polygon points="874.8,230.3 874.3,232.4 882.4,232.4 882.9,230.3" fill="#ada99b"/>
<polygon points="553.0,168.7 552.0,170.7 552.5,175.1 553.3,173.3" fill="#d6d1c0"/>
<polygon points="855.6,177.0 856.0,177.3 868.6,177.3 868.2,177.0" fill="#fffffa"/>
<polygon points="551.2,223.6 552.0,227.7 552.5,225.2 551.8,221.5" fill="#d6d1c0"/>
<polygon points="855.1,231.5 854.7,233.8 867.3,233.8 867.8,231.5" fill="#ada99b"/>
<polygon points="676.3,262.6 690.2,262.8 689.8,252.5 675.8,252.3" fill="#c7c2b2"/>
<polygon points="809.4,202.3 808.4,197.2 801.9,179.3 802.7,183.6" fill="#fff9e5"/>
<polygon points="489.6,227.7 497.6,228.2 495.7,215.2 487.3,214.7" fill="#d3cebd"/>
<polygon points="896.4,248.8 900.3,250.1 901.1,239.9 897.3,238.7" fill="#c9c4b4"/>
<polygon points="620.6,164.9 619.8,166.2 627.0,166.2 627.7,164.9" fill="#fffffa"/>
<polygon points="540.5,206.9 543.9,205.1 544.2,187.0 540.7,188.7" fill="#d3cebd"/>
<polygon points="618.7,234.0 619.4,238.0 626.5,238.0 625.9,234.0" fill="#ada99b"/>
<polygon points="690.2,262.8 704.1,262.9 703.9,252.6 689.8,252.5" fill="#c7c2b2"/>
<polygon points="627.3,181.8 626.9,183.9 638.1,183.9 638.4,181.8" fill="#fffffa"/>
<polygon points="626.3,217.0 626.6,220.4 637.8,220.4 637.5,217.0" fill="#949084"/>
<polygon points="945.5,263.0 950.1,262.2 953.1,250.3 948.4,251.0" fill="#d2cdbc"/>
<polygon points="760.9,247.8 806.8,243.5 810.4,238.0 761.9,242.8" fill="#928e82"/>
<polygon points="800.8,179.4 800.9,180.3 812.0,180.3 811.9,179.4" fill="#fffffa"/>
<polygon points="539.7,168.2 538.8,170.2 552.0,170.7 553.0,168.7" fill="#fffffa"/>
<polygon points="800.2,223.5 800.0,226.0 811.1,226.0 811.3,223.5" fill="#ada99b"/>
<polygon points="537.9,223.0 538.8,227.2 552.0,227.7 551.2,223.6" fill="#ebe5d2"/>
<polygon points="535.5,214.8 539.8,213.8 540.5,206.9 536.0,208.0" fill="#999588"/>
<polygon points="704.1,262.9 718.0,263.1 718.0,252.8 703.9,252.6" fill="#c7c2b2"/>
<polygon points="883.2,179.6 883.7,179.9 884.2,170.1 883.6,169.8" fill="#bdb8a9"/>
<polygon points="882.9,230.3 882.4,232.4 882.5,240.3 883.2,237.4" fill="#bdb8a9"/>
<polygon points="812.0,166.7 812.3,167.0 822.4,167.0 822.1,166.7" fill="#fffffa"/>
<polygon points="521.2,228.6 529.8,228.4 529.6,215.4 520.5,215.6" fill="#ddd8c6"/>
<polygon points="811.2,236.3 810.9,239.2 821.0,239.2 821.3,236.3" fill="#ada99b"/>
<polygon points="905.2,262.8 913.7,263.2 914.9,251.3 905.9,250.9" fill="#c2bdad"/>
<polygon points="718.0,263.1 732.0,263.2 732.1,252.9 718.0,252.8" fill="#c7c2b2"/>
<polygon points="497.6,228.2 521.2,228.6 520.5,215.6 495.7,215.2" fill="#d9d4c2"/>
<polygon points="895.6,185.6 898.5,190.3 898.5,182.3 895.5,177.7" fill="#c6c1b1"/>
<polygon points="627.0,166.2 626.3,168.5 627.3,181.8 627.7,180.3" fill="#d6d1c0"/>
<polygon points="625.3,229.3 625.9,234.0 627.0,223.5 626.6,220.4" fill="#d6d1c0"/>
<polygon points="847.0,178.1 847.3,178.4 848.3,158.6 847.7,158.2" fill="#bdb8a9"/>
<polygon points="846.5,230.6 846.1,232.9 846.2,250.6 846.9,246.9" fill="#bdb8a9"/>
<polygon points="552.5,175.1 551.8,177.6 560.0,178.6 560.7,176.1" fill="#fffffa"/>
<polygon points="732.0,263.2 745.9,263.4 746.3,253.0 732.1,252.9" fill="#c7c2b2"/>
<polygon points="551.1,217.4 551.8,221.5 559.9,222.6 559.3,218.4" fill="#949084"/>
<polygon points="620.3,156.0 619.4,157.6 619.8,166.2 620.6,164.9" fill="#d6d1c0"/>
<polygon points="561.3,155.5 560.0,157.0 569.2,157.0 570.5,155.5" fill="#fffffa"/>
<polygon points="618.0,240.5 618.9,245.3 619.4,238.0 618.7,234.0" fill="#d6d1c0"/>
<polygon points="569.8,176.1 569.2,178.6 579.4,179.6 580.0,177.1" fill="#fffffa"/>
<polygon points="558.6,239.1 559.9,243.9 569.0,243.9 567.9,239.1" fill="#ada99b"/>
<polygon points="568.5,218.4 569.1,222.6 579.3,223.6 578.8,219.4" fill="#949084"/>
<polygon points="953.1,250.3 955.5,249.0 956.7,238.9 954.3,240.1" fill="#fdf7e2"/>
<polygon points="868.2,177.0 868.6,177.3 869.6,160.1 868.9,159.8" fill="#bdb8a9"/>
<polygon points="745.9,263.4 759.9,263.5 760.4,253.2 746.3,253.0" fill="#c7c2b2"/>
<polygon points="867.8,231.5 867.3,233.8 867.4,250.2 868.2,246.6" fill="#bdb8a9"/>
<polygon points="580.6,156.5 579.4,158.1 592.8,158.1 593.9,156.5" fill="#fffffa"/>
<polygon points="937.4,263.3 945.5,263.0 948.4,251.0 939.8,251.4" fill="#cbc6b6"/>
<polygon points="913.7,263.2 937.4,263.3 939.8,251.4 914.9,251.3" fill="#c7c2b2"/>
<polygon points="541.8,156.4 546.6,152.6 546.6,139.7 541.8,143.3" fill="#f8f2dd"/>
<polygon points="578.1,240.1 579.2,244.9 592.4,244.9 591.4,240.1" fill="#ada99b"/>
<polygon points="831.2,177.3 831.4,178.3 847.7,179.3 847.3,178.4" fill="#fffffa"/>
<polygon points="822.1,166.7 822.4,167.0 822.8,157.5 822.4,157.2" fill="#bdb8a9"/>
<polygon points="830.7,226.7 830.4,229.6 846.5,230.6 846.9,227.7" fill="#ada99b"/>
<polygon points="821.3,236.3 821.0,239.2 821.0,249.6 821.4,245.9" fill="#bdb8a9"/>
<polygon points="593.3,177.1 592.7,179.6 605.0,179.6 605.5,177.1" fill="#fffffa"/>
<polygon points="896.9,226.6 899.5,228.5 902.2,214.2 899.7,212.4" fill="#b5b1a2"/>
<polygon points="883.6,169.8 884.2,170.1 901.5,170.1 900.7,169.8" fill="#fffffa"/>
<polygon points="592.0,219.4 592.5,223.6 604.8,223.6 604.3,219.4" fill="#949084"/>
<polygon points="883.2,237.4 882.5,240.3 899.6,240.3 900.4,237.4" fill="#ada99b"/>
<polygon points="626.9,183.9 626.5,186.6 637.8,186.6 638.1,183.9" fill="#fffffa"/>
<polygon points="482.9,213.9 487.3,214.7 485.4,207.8 480.8,207.0" fill="#838075"/>
<polygon points="626.1,213.2 626.3,217.0 637.5,217.0 637.3,213.2" fill="#c7c2b2"/>
<polygon points="675.8,252.3 689.8,252.5 689.8,246.3 675.8,246.1" fill="#b8b3a4"/>
<polygon points="875.6,179.9 876.0,180.8 884.1,180.8 883.7,179.9" fill="#fffffa"/>
<polygon points="875.3,227.5 874.8,230.3 882.9,230.3 883.4,227.5" fill="#ada99b"/>
<polygon points="552.0,170.7 551.2,173.6 551.8,177.6 552.5,175.1" fill="#d6d1c0"/>
<polygon points="626.7,236.3 672.9,241.9 672.8,220.4 625.6,215.1" fill="#c5c0b0"/>
<polygon points="550.5,218.8 551.2,223.6 551.8,221.5 551.1,217.4" fill="#d6d1c0"/>
<polygon points="569.2,157.0 568.0,159.8 569.8,176.1 570.6,174.3" fill="#d6d1c0"/>
<polygon points="811.9,179.4 812.0,180.3 812.5,168.2 812.3,167.0" fill="#bdb8a9"/>
<polygon points="566.8,233.4 567.9,239.1 569.7,226.2 569.1,222.6" fill="#d6d1c0"/>
<polygon points="606.1,156.0 605.0,157.6 619.4,157.6 620.3,156.0" fill="#fffffa"/>
<polygon points="811.3,223.5 811.1,226.0 811.2,236.3 811.5,232.5" fill="#bdb8a9"/>
<polygon points="689.8,252.5 703.9,252.6 703.9,246.4 689.8,246.3" fill="#b8b3a4"/>
<polygon points="603.7,240.5 604.6,245.3 618.9,245.3 618.0,240.5" fill="#ada99b"/>
<polygon points="856.0,177.3 856.3,178.3 869.0,178.3 868.6,177.3" fill="#fffffa"/>
<polygon points="855.6,228.5 855.1,231.5 867.8,231.5 868.2,228.5" fill="#ada99b"/>
<polygon points="592.8,158.1 591.7,160.8 593.3,177.1 593.9,175.3" fill="#d6d1c0"/>
<polygon points="800.9,180.3 801.0,181.8 812.2,181.8 812.0,180.3" fill="#fffffa"/>
<polygon points="800.4,220.4 800.2,223.5 811.3,223.5 811.6,220.4" fill="#ebe5d2"/>
<polygon points="590.5,234.4 591.4,240.1 593.1,227.2 592.5,223.6" fill="#d6d1c0"/>
<polygon points="900.3,250.1 905.9,250.9 906.8,240.7 901.1,239.9" fill="#d9d4c2"/>
<polygon points="822.4,157.2 822.8,157.5 832.0,157.5 831.5,157.2" fill="#fffffa"/>
<polygon points="703.9,252.6 718.0,252.8 718.0,246.6 703.9,246.4" fill="#b8b3a4"/>
<polygon points="480.6,144.5 485.1,145.1 493.6,145.5 518.9,145.8 528.1,145.7 534.1,145.3 538.5,144.6 541.8,143.3 546.6,139.7 546.7,138.5 544.5,137.7 540.1,137.2 532.0,136.8 508.0,136.5 499.3,136.6 493.5,136.9 489.1,137.6 485.5,138.8 479.3,142.4 478.7,143.7" fill="#fffbed"/>
<polygon points="821.4,245.9 821.0,249.6 830.1,249.6 830.6,245.9" fill="#ada99b"/>
<polygon points="897.3,238.7 901.1,239.9 903.3,229.6 899.5,228.5" fill="#989488"/>
<polygon points="529.6,215.4 535.5,214.8 536.0,208.0 529.8,208.6" fill="#969386"/>
<polygon points="718.0,252.8 732.1,252.9 732.1,246.7 718.0,246.6" fill="#b8b3a4"/>
<polygon points="847.7,158.2 848.3,158.6 856.9,158.6 856.3,158.2" fill="#fffffa"/>
<polygon points="538.8,170.2 537.9,173.1 551.2,173.6 552.0,170.7" fill="#fffffa"/>
<polygon points="846.9,246.9 846.2,250.6 854.8,250.6 855.5,246.9" fill="#ada99b"/>
<polygon points="537.1,218.3 537.9,223.0 551.2,223.6 550.5,218.8" fill="#949084"/>
<polygon points="551.8,177.6 551.2,180.7 559.4,181.7 560.0,178.6" fill="#fffffa"/>
<polygon points="478.8,205.9 480.8,207.0 479.1,188.8 477.1,187.6" fill="#a9a597"/>
<polygon points="868.9,159.8 869.6,160.1 876.7,160.1 875.9,159.8" fill="#fffffa"/>
<polygon points="550.6,212.9 551.1,217.4 559.3,218.4 558.8,213.9" fill="#c7c2b2"/>
<polygon points="868.2,246.6 867.4,250.2 874.5,250.2 875.3,246.6" fill="#ada99b"/>
<polygon points="732.1,252.9 746.3,253.0 746.3,246.8 732.1,246.7" fill="#b8b3a4"/>
<polygon points="626.5,186.6 626.2,189.7 637.5,189.7 637.8,186.6" fill="#fffffa"/>
<polygon points="625.9,209.2 626.1,213.2 637.3,213.2 637.2,209.2" fill="#949084"/>
<polygon points="569.2,178.6 568.6,181.7 578.9,182.8 579.4,179.6" fill="#fffffa"/>
<polygon points="568.1,213.9 568.5,218.4 578.8,219.4 578.3,214.9" fill="#c7c2b2"/>
<polygon points="626.3,168.5 625.6,171.8 626.9,183.9 627.3,181.8" fill="#d6d1c0"/>
<polygon points="624.8,223.9 625.3,229.3 626.6,220.4 626.3,217.0" fill="#d6d1c0"/>
<polygon points="619.8,166.2 619.1,168.5 626.3,168.5 627.0,166.2" fill="#fffffa"/>
<polygon points="618.1,229.3 618.7,234.0 625.9,234.0 625.3,229.3" fill="#ebe5d2"/>
<polygon points="487.3,214.7 495.7,215.2 494.2,208.3 485.4,207.8" fill="#8b887c"/>
<polygon points="883.7,179.9 884.1,180.8 884.8,171.3 884.2,170.1" fill="#bdb8a9"/>
<polygon points="746.3,253.0 760.4,253.2 760.4,247.0 746.3,246.8" fill="#b8b3a4"/>
<polygon points="883.4,227.5 882.9,230.3 883.2,237.4 883.8,233.8" fill="#bdb8a9"/>
<polygon points="895.5,177.7 898.5,182.3 898.7,168.1 895.7,163.9" fill="#d6d1bf"/>
<polygon points="948.4,251.0 953.1,250.3 954.3,240.1 949.6,240.8" fill="#f9f3df"/>
<polygon points="592.7,179.6 592.2,182.8 604.5,182.8 605.0,179.6" fill="#fffffa"/>
<polygon points="591.7,214.9 592.0,219.4 604.3,219.4 604.0,214.9" fill="#c7c2b2"/>
<polygon points="802.7,183.6 801.9,179.3 796.0,163.5 796.6,167.0" fill="#fffbeb"/>
<polygon points="954.3,240.1 956.7,238.9 958.5,228.6 956.2,229.8" fill="#bfbbab"/>
<polygon points="831.4,178.3 831.7,180.0 847.9,181.0 847.7,179.3" fill="#fffffa"/>
<polygon points="831.0,223.3 830.7,226.7 846.9,227.7 847.3,224.4" fill="#ebe5d2"/>
<polygon points="812.3,167.0 812.5,168.2 822.7,168.2 822.4,167.0" fill="#fffffa"/>
<polygon points="905.9,250.9 914.9,251.3 915.9,241.0 906.8,240.7" fill="#e6e1ce"/>
<polygon points="674.3,246.9 688.7,247.0 687.7,242.1 672.9,241.9" fill="#8d8a7e"/>
<polygon points="811.5,232.5 811.2,236.3 821.3,236.3 821.7,232.5" fill="#ada99b"/>
<polygon points="520.5,215.6 529.6,215.4 529.8,208.6 520.3,208.7" fill="#928e82"/>
<polygon points="626.2,189.7 626.0,193.2 637.3,193.2 637.5,189.7" fill="#fffffa"/>
<polygon points="625.8,205.1 625.9,209.2 637.2,209.2 637.1,205.1" fill="#ede8d4"/>
<polygon points="551.2,173.6 550.5,177.2 551.2,180.7 551.8,177.6" fill="#d6d1c0"/>
<polygon points="549.9,213.7 550.5,218.8 551.1,217.4 550.6,212.9" fill="#d6d1c0"/>
<polygon points="536.0,208.0 540.5,206.9 540.7,188.7 536.1,189.7" fill="#d5d0bf"/>
<polygon points="495.7,215.2 520.5,215.6 520.3,208.7 494.2,208.3" fill="#8f8b7f"/>
<polygon points="876.0,180.8 876.4,182.5 884.5,182.5 884.1,180.8" fill="#fffffa"/>
<polygon points="875.7,224.2 875.3,227.5 883.4,227.5 883.8,224.2" fill="#ebe5d2"/>
<polygon points="801.0,181.8 801.1,183.9 812.3,183.9 812.2,181.8" fill="#fffffa"/>
<polygon points="847.3,178.4 847.7,179.3 848.8,160.1 848.3,158.6" fill="#bdb8a9"/>
<polygon points="800.5,217.0 800.4,220.4 811.6,220.4 811.8,217.0" fill="#949084"/>
<polygon points="688.7,247.0 703.1,247.2 702.5,242.2 687.7,242.1" fill="#8d8a7e"/>
<polygon points="846.9,227.7 846.5,230.6 846.9,246.9 847.5,242.2" fill="#bdb8a9"/>
<polygon points="899.7,212.4 902.2,214.2 901.7,208.3 899.0,206.5" fill="#737167"/>
<polygon points="551.2,180.7 550.7,184.5 558.9,185.5 559.4,181.7" fill="#fffffa"/>
<polygon points="550.3,208.0 550.6,212.9 558.8,213.9 558.5,209.1" fill="#949084"/>
<polygon points="626.0,193.2 625.9,197.0 637.1,197.0 637.3,193.2" fill="#fffffa"/>
<polygon points="703.1,247.2 717.6,247.3 717.3,242.3 702.5,242.2" fill="#8d8a7e"/>
<polygon points="625.8,201.0 625.8,205.1 637.1,205.1 637.1,201.0" fill="#fffffa"/>
<polygon points="856.3,178.3 856.7,180.1 869.4,180.1 869.0,178.3" fill="#fffffa"/>
<polygon points="568.6,181.7 568.1,185.5 578.4,186.5 578.9,182.8" fill="#fffffa"/>
<polygon points="856.0,225.0 855.6,228.5 868.2,228.5 868.7,225.0" fill="#ebe5d2"/>
<polygon points="567.7,209.1 568.1,213.9 578.3,214.9 578.0,210.1" fill="#949084"/>
<polygon points="868.6,177.3 869.0,178.3 870.3,161.6 869.6,160.1" fill="#bdb8a9"/>
<polygon points="812.0,180.3 812.2,181.8 812.7,170.4 812.5,168.2" fill="#bdb8a9"/>
<polygon points="939.8,251.4 948.4,251.0 949.6,240.8 941.0,241.1" fill="#f1ebd7"/>
<polygon points="619.4,157.6 618.5,160.3 619.1,168.5 619.8,166.2" fill="#d6d1c0"/>
<polygon points="811.6,220.4 811.3,223.5 811.5,232.5 811.8,228.0" fill="#bdb8a9"/>
<polygon points="868.2,228.5 867.8,231.5 868.2,246.6 869.0,241.9" fill="#bdb8a9"/>
<polygon points="914.9,251.3 939.8,251.4 941.0,241.1 915.9,241.0" fill="#ece6d3"/>
<polygon points="625.9,197.0 625.8,201.0 637.1,201.0 637.1,197.0" fill="#fffffa"/>
<polygon points="617.3,234.7 618.0,240.5 618.7,234.0 618.1,229.3" fill="#d6d1c0"/>
<polygon points="540.7,188.7 544.2,187.0 543.4,166.7 539.9,168.2" fill="#fffffa"/>
<polygon points="884.2,170.1 884.8,171.3 902.1,171.3 901.5,170.1" fill="#fffffa"/>
<polygon points="717.6,247.3 732.0,247.5 732.2,242.5 717.3,242.3" fill="#8d8a7e"/>
<polygon points="883.8,233.8 883.2,237.4 900.4,237.4 901.1,233.8" fill="#ada99b"/>
<polygon points="568.0,159.8 566.9,163.7 569.2,178.6 569.8,176.1" fill="#d6d1c0"/>
<polygon points="761.9,242.8 810.4,238.0 811.5,216.7 761.9,221.2" fill="#d6d1bf"/>
<polygon points="565.9,226.9 566.8,233.4 569.1,222.6 568.5,218.4" fill="#d6d1c0"/>
<polygon points="901.1,239.9 906.8,240.7 909.0,230.4 903.3,229.6" fill="#a4a093"/>
<polygon points="537.9,173.1 537.1,176.6 550.5,177.2 551.2,173.6" fill="#fffffa"/>
<polygon points="536.5,213.2 537.1,218.3 550.5,218.8 549.9,213.7" fill="#c7c2b2"/>
<polygon points="592.2,182.8 591.8,186.5 604.1,186.5 604.5,182.8" fill="#fffffa"/>
<polygon points="560.0,157.0 558.7,159.8 568.0,159.8 569.2,157.0" fill="#fffffa"/>
<polygon points="591.4,210.1 591.7,214.9 604.0,214.9 603.7,210.1" fill="#949084"/>
<polygon points="557.5,233.4 558.6,239.1 567.9,239.1 566.8,233.4" fill="#ebe5d2"/>
<polygon points="625.6,171.8 625.1,175.9 626.5,186.6 626.9,183.9" fill="#d6d1c0"/>
<polygon points="732.0,247.5 746.5,247.6 747.1,242.6 732.2,242.5" fill="#8d8a7e"/>
<polygon points="624.4,218.0 624.8,223.9 626.3,217.0 626.1,213.2" fill="#d6d1c0"/>
<polygon points="591.7,160.8 590.8,164.7 592.7,179.6 593.3,177.1" fill="#d6d1c0"/>
<polygon points="589.7,227.9 590.5,234.4 592.5,223.6 592.0,219.4" fill="#d6d1c0"/>
<polygon points="822.4,167.0 822.7,168.2 823.2,159.1 822.8,157.5" fill="#bdb8a9"/>
<polygon points="579.4,158.1 578.3,160.8 591.7,160.8 592.8,158.1" fill="#fffffa"/>
<polygon points="821.7,232.5 821.3,236.3 821.4,245.9 821.9,241.1" fill="#bdb8a9"/>
<polygon points="577.1,234.4 578.1,240.1 591.4,240.1 590.5,234.4" fill="#ebe5d2"/>
<polygon points="746.5,247.6 760.9,247.8 761.9,242.8 747.1,242.6" fill="#8d8a7e"/>
<polygon points="899.5,228.5 903.3,229.6 906.1,215.3 902.2,214.2" fill="#bfbbab"/>
<polygon points="480.8,207.0 485.4,207.8 483.9,189.5 479.1,188.8" fill="#b7b3a4"/>
<polygon points="550.7,184.5 550.3,188.7 558.5,189.7 558.9,185.5" fill="#fffffa"/>
<polygon points="550.1,203.1 550.3,208.0 558.5,209.1 558.3,204.1" fill="#ede8d4"/>
<polygon points="550.5,177.2 549.9,181.4 550.7,184.5 551.2,180.7" fill="#d6d1c0"/>
<polygon points="549.5,208.2 549.9,213.7 550.6,212.9 550.3,208.0" fill="#d6d1c0"/>
<polygon points="568.1,185.5 567.8,189.7 578.1,190.7 578.4,186.5" fill="#fffffa"/>
<polygon points="567.5,204.1 567.7,209.1 578.0,210.1 577.8,205.2" fill="#ede8d4"/>
<polygon points="801.1,183.9 801.1,186.6 812.4,186.6 812.3,183.9" fill="#fffffa"/>
<polygon points="800.7,213.2 800.5,217.0 811.8,217.0 811.9,213.2" fill="#c7c2b2"/>
<polygon points="625.6,215.1 672.8,220.4 672.8,211.0 626.6,205.9" fill="#e4dfcc"/>
<polygon points="831.7,180.0 831.8,182.4 848.2,183.4 847.9,181.0" fill="#fffffa"/>
<polygon points="831.2,219.5 831.0,223.3 847.3,224.4 847.6,220.5" fill="#949084"/>
<polygon points="884.1,180.8 884.5,182.5 885.3,173.4 884.8,171.3" fill="#bdb8a9"/>
<polygon points="883.8,224.2 883.4,227.5 883.8,233.8 884.5,229.4" fill="#bdb8a9"/>
<polygon points="949.6,240.8 954.3,240.1 956.2,229.8 951.5,230.5" fill="#bdb8a9"/>
<polygon points="605.0,157.6 604.0,160.3 618.5,160.3 619.4,157.6" fill="#fffffa"/>
<polygon points="619.1,168.5 618.4,171.8 625.6,171.8 626.3,168.5" fill="#fffffa"/>
<polygon points="895.7,163.9 898.7,168.1 900.0,160.0 897.1,156.0" fill="#9d9a8d"/>
<polygon points="876.4,182.5 876.7,184.7 884.8,184.7 884.5,182.5" fill="#fffffa"/>
<polygon points="602.8,234.7 603.7,240.5 618.0,240.5 617.3,234.7" fill="#ebe5d2"/>
<polygon points="617.6,223.9 618.1,229.3 625.3,229.3 624.8,223.9" fill="#949084"/>
<polygon points="876.1,220.5 875.7,224.2 883.8,224.2 884.3,220.5" fill="#949084"/>
<polygon points="591.8,186.5 591.4,190.7 603.8,190.7 604.1,186.5" fill="#fffffa"/>
<polygon points="591.2,205.2 591.4,210.1 603.7,210.1 603.6,205.2" fill="#ede8d4"/>
<polygon points="550.3,188.7 550.1,193.3 558.3,194.3 558.5,189.7" fill="#fffffa"/>
<polygon points="550.0,198.1 550.1,203.1 558.3,204.1 558.2,199.2" fill="#fffffa"/>
<polygon points="567.8,189.7 567.6,194.3 577.9,195.3 578.1,190.7" fill="#fffffa"/>
<polygon points="567.5,199.2 567.5,204.1 577.8,205.2 577.8,200.2" fill="#fffffa"/>
<polygon points="906.8,240.7 915.9,241.0 918.0,230.7 909.0,230.4" fill="#aeaa9c"/>
<polygon points="550.1,193.3 550.0,198.1 558.2,199.2 558.3,194.3" fill="#fffffa"/>
<polygon points="529.8,208.6 536.0,208.0 536.1,189.7 529.7,190.3" fill="#d2cdbc"/>
<polygon points="822.8,157.5 823.2,159.1 832.4,159.1 832.0,157.5" fill="#fffffa"/>
<polygon points="567.6,194.3 567.5,199.2 577.8,200.2 577.9,195.3" fill="#fffffa"/>
<polygon points="821.9,241.1 821.4,245.9 830.6,245.9 831.1,241.1" fill="#ada99b"/>
<polygon points="537.1,176.6 536.5,180.9 549.9,181.4 550.5,177.2" fill="#fffffa"/>
<polygon points="856.7,180.1 856.9,182.5 869.7,182.5 869.4,180.1" fill="#fffffa"/>
<polygon points="536.1,207.7 536.5,213.2 549.9,213.7 549.5,208.2" fill="#949084"/>
<polygon points="956.2,229.8 958.5,228.6 960.9,214.3 958.6,215.4" fill="#f1ebd7"/>
<polygon points="856.3,221.0 856.0,225.0 868.7,225.0 869.1,221.0" fill="#949084"/>
<polygon points="625.1,175.9 624.6,180.8 626.2,189.7 626.5,186.6" fill="#d6d1c0"/>
<polygon points="624.1,211.7 624.4,218.0 626.1,213.2 625.9,209.2" fill="#d6d1c0"/>
<polygon points="549.9,181.4 549.5,186.2 550.3,188.7 550.7,184.5" fill="#d6d1c0"/>
<polygon points="549.2,202.6 549.5,208.2 550.3,208.0 550.1,203.1" fill="#d6d1c0"/>
<polygon points="591.4,190.7 591.2,195.3 603.6,195.3 603.8,190.7" fill="#fffffa"/>
<polygon points="591.2,200.2 591.2,205.2 603.6,205.2 603.5,200.2" fill="#fffffa"/>
<polygon points="812.2,181.8 812.3,183.9 812.9,173.5 812.7,170.4" fill="#bdb8a9"/>
<polygon points="812.5,168.2 812.7,170.4 823.0,170.4 822.7,168.2" fill="#fffffa"/>
<polygon points="848.3,158.6 848.8,160.1 857.5,160.1 856.9,158.6" fill="#fffffa"/>
<polygon points="811.8,217.0 811.6,220.4 811.8,228.0 812.1,222.9" fill="#bdb8a9"/>
<polygon points="811.8,228.0 811.5,232.5 821.7,232.5 822.1,228.0" fill="#ebe5d2"/>
<polygon points="796.6,167.0 796.0,163.5 790.5,149.6 790.9,152.6" fill="#fffdf2"/>
<polygon points="801.1,186.6 801.1,189.7 812.4,189.7 812.4,186.6" fill="#fffffa"/>
<polygon points="869.6,160.1 870.3,161.6 877.4,161.6 876.7,160.1" fill="#fffffa"/>
<polygon points="847.5,242.2 846.9,246.9 855.5,246.9 856.2,242.2" fill="#ada99b"/>
<polygon points="800.8,209.2 800.7,213.2 811.9,213.2 812.1,209.2" fill="#949084"/>
<polygon points="485.4,207.8 494.2,208.3 492.9,190.0 483.9,189.5" fill="#c2beae"/>
<polygon points="591.2,195.3 591.2,200.2 603.5,200.2 603.6,195.3" fill="#fffffa"/>
<polygon points="869.0,241.9 868.2,246.6 875.3,246.6 876.2,241.9" fill="#ada99b"/>
<polygon points="941.0,241.1 949.6,240.8 951.5,230.5 942.9,230.8" fill="#b6b2a3"/>
<polygon points="915.9,241.0 941.0,241.1 942.9,230.8 918.0,230.7" fill="#b2aea0"/>
<polygon points="899.0,206.5 901.7,208.3 901.3,192.1 898.5,190.3" fill="#b1ad9e"/>
<polygon points="847.7,179.3 847.9,181.0 849.3,162.9 848.8,160.1" fill="#bdb8a9"/>
<polygon points="566.9,163.7 566.0,168.6 568.6,181.7 569.2,178.6" fill="#d6d1c0"/>
<polygon points="847.3,224.4 846.9,227.7 847.5,242.2 848.1,236.5" fill="#bdb8a9"/>
<polygon points="565.2,219.7 565.9,226.9 568.5,218.4 568.1,213.9" fill="#d6d1c0"/>
<polygon points="626.6,205.9 672.8,211.0 673.4,205.7 627.7,200.8" fill="#fffbec"/>
<polygon points="549.5,186.2 549.2,191.4 550.1,193.3 550.3,188.7" fill="#d6d1c0"/>
<polygon points="549.1,196.9 549.2,202.6 550.1,203.1 550.0,198.1" fill="#d6d1c0"/>
<polygon points="590.8,164.7 589.9,169.7 592.2,182.8 592.7,179.6" fill="#d6d1c0"/>
<polygon points="831.8,182.4 832.0,185.3 848.3,186.3 848.2,183.4" fill="#fffffa"/>
<polygon points="831.5,215.3 831.2,219.5 847.6,220.5 847.9,216.3" fill="#c7c2b2"/>
<polygon points="589.1,220.7 589.7,227.9 592.0,219.4 591.7,214.9" fill="#d6d1c0"/>
<polygon points="477.1,187.6 479.1,188.8 479.2,168.2 477.2,167.2" fill="#e6e1ce"/>
<polygon points="869.0,178.3 869.4,180.1 870.8,164.3 870.3,161.6" fill="#bdb8a9"/>
<polygon points="520.3,208.7 529.8,208.6 529.7,190.3 519.9,190.4" fill="#cbc6b6"/>
<polygon points="868.7,225.0 868.2,228.5 869.0,241.9 869.7,236.4" fill="#bdb8a9"/>
<polygon points="884.8,171.3 885.3,173.4 902.7,173.4 902.1,171.3" fill="#fffffa"/>
<polygon points="549.2,191.4 549.1,196.9 550.0,198.1 550.1,193.3" fill="#d6d1c0"/>
<polygon points="876.7,184.7 876.9,187.6 885.1,187.6 884.8,184.7" fill="#fffffa"/>
<polygon points="876.4,216.4 876.1,220.5 884.3,220.5 884.6,216.4" fill="#c7c2b2"/>
<polygon points="884.5,229.4 883.8,233.8 901.1,233.8 901.8,229.4" fill="#ebe5d2"/>
<polygon points="494.2,208.3 520.3,208.7 519.9,190.4 492.9,190.0" fill="#c7c2b2"/>
<polygon points="618.5,160.3 617.6,164.3 618.4,171.8 619.1,168.5" fill="#d6d1c0"/>
<polygon points="903.3,229.6 909.0,230.4 911.7,216.0 906.1,215.3" fill="#cecab9"/>
<polygon points="616.6,228.2 617.3,234.7 618.1,229.3 617.6,223.9" fill="#d6d1c0"/>
<polygon points="801.1,189.7 801.1,193.2 812.4,193.2 812.4,189.7" fill="#fffffa"/>
<polygon points="800.9,205.1 800.8,209.2 812.1,209.2 812.2,205.1" fill="#ede8d4"/>
<polygon points="624.6,180.8 624.3,186.3 626.0,193.2 626.2,189.7" fill="#d6d1c0"/>
<polygon points="536.5,180.9 536.1,185.7 549.5,186.2 549.9,181.4" fill="#fffffa"/>
<polygon points="624.0,205.2 624.1,211.7 625.9,209.2 625.8,205.1" fill="#d6d1c0"/>
<polygon points="535.8,202.1 536.1,207.7 549.5,208.2 549.2,202.6" fill="#ede8d4"/>
<polygon points="539.9,168.2 543.4,166.7 541.8,156.4 538.5,157.8" fill="#d3cebd"/>
<polygon points="902.2,214.2 906.1,215.3 905.7,209.4 901.7,208.3" fill="#7a776d"/>
<polygon points="884.5,182.5 884.8,184.7 885.8,176.4 885.3,173.4" fill="#bdb8a9"/>
<polygon points="884.3,220.5 883.8,224.2 884.5,229.4 885.0,224.5" fill="#bdb8a9"/>
<polygon points="801.1,193.2 801.1,197.0 812.4,197.0 812.4,193.2" fill="#fffffa"/>
<polygon points="801.0,201.0 800.9,205.1 812.2,205.1 812.3,201.0" fill="#fffffa"/>
<polygon points="558.7,159.8 557.6,163.7 566.9,163.7 568.0,159.8" fill="#fffffa"/>
<polygon points="856.9,182.5 857.1,185.6 869.9,185.6 869.7,182.5" fill="#fffffa"/>
<polygon points="856.6,216.6 856.3,221.0 869.1,221.0 869.5,216.6" fill="#c7c2b2"/>
<polygon points="618.4,171.8 617.9,175.9 625.1,175.9 625.6,171.8" fill="#fffffa"/>
<polygon points="556.6,226.9 557.5,233.4 566.8,233.4 565.9,226.9" fill="#949084"/>
<polygon points="617.2,218.0 617.6,223.9 624.8,223.9 624.4,218.0" fill="#c7c2b2"/>
<polygon points="624.3,186.3 624.1,192.3 625.9,197.0 626.0,193.2" fill="#d6d1c0"/>
<polygon points="624.0,198.7 624.0,205.2 625.8,205.1 625.8,201.0" fill="#d6d1c0"/>
<polygon points="801.1,197.0 801.0,201.0 812.3,201.0 812.4,197.0" fill="#fffffa"/>
<polygon points="822.7,168.2 823.0,170.4 823.5,161.8 823.2,159.1" fill="#bdb8a9"/>
<polygon points="536.1,185.7 535.8,190.9 549.2,191.4 549.5,186.2" fill="#fffffa"/>
<polygon points="761.9,221.2 811.5,216.7 810.4,207.5 761.9,211.7" fill="#f8f3de"/>
<polygon points="578.3,160.8 577.3,164.7 590.8,164.7 591.7,160.8" fill="#fffffa"/>
<polygon points="535.7,196.4 535.8,202.1 549.2,202.6 549.1,196.9" fill="#fffffa"/>
<polygon points="822.1,228.0 821.7,232.5 821.9,241.1 822.4,235.5" fill="#bdb8a9"/>
<polygon points="576.3,227.9 577.1,234.4 590.5,234.4 589.7,227.9" fill="#949084"/>
<polygon points="812.3,183.9 812.4,186.6 813.0,177.4 812.9,173.5" fill="#bdb8a9"/>
<polygon points="536.1,189.7 540.7,188.7 539.9,168.2 535.3,169.1" fill="#fffffa"/>
<polygon points="811.9,213.2 811.8,217.0 812.1,222.9 812.4,217.3" fill="#bdb8a9"/>
<polygon points="897.1,156.0 900.0,160.0 900.5,144.8 897.6,141.2" fill="#bab6a7"/>
<polygon points="624.1,192.3 624.0,198.7 625.8,201.0 625.9,197.0" fill="#d6d1c0"/>
<polygon points="951.5,230.5 956.2,229.8 958.6,215.4 953.9,216.1" fill="#ede7d4"/>
<polygon points="672.9,241.9 687.7,242.1 687.6,220.5 672.8,220.4" fill="#cfcab9"/>
<polygon points="535.8,190.9 535.7,196.4 549.1,196.9 549.2,191.4" fill="#fffffa"/>
<polygon points="832.0,185.3 832.1,188.8 848.5,189.8 848.3,186.3" fill="#fffffa"/>
<polygon points="831.7,210.8 831.5,215.3 847.9,216.3 848.1,211.8" fill="#949084"/>
<polygon points="876.9,187.6 877.1,191.0 885.3,191.0 885.1,187.6" fill="#fffffa"/>
<polygon points="876.7,212.1 876.4,216.4 884.6,216.4 884.9,212.1" fill="#949084"/>
<polygon points="566.0,168.6 565.2,174.5 568.1,185.5 568.6,181.7" fill="#d6d1c0"/>
<polygon points="687.7,242.1 702.5,242.2 702.4,220.7 687.6,220.5" fill="#cfcab9"/>
<polygon points="564.6,212.1 565.2,219.7 568.1,213.9 567.7,209.1" fill="#d6d1c0"/>
<polygon points="909.0,230.4 918.0,230.7 920.6,216.3 911.7,216.0" fill="#dbd6c4"/>
<polygon points="627.7,200.8 673.4,205.7 675.3,186.3 634.4,182.3" fill="#ebe6d2"/>
<polygon points="958.6,215.4 960.9,214.3 962.7,208.4 960.3,209.5" fill="#999589"/>
<polygon points="604.0,160.3 603.1,164.3 617.6,164.3 618.5,160.3" fill="#fffffa"/>
<polygon points="589.9,169.7 589.3,175.6 591.8,186.5 592.2,182.8" fill="#d6d1c0"/>
<polygon points="702.5,242.2 717.3,242.3 717.3,220.8 702.4,220.7" fill="#cfcab9"/>
<polygon points="588.6,213.1 589.1,220.7 591.7,214.9 591.4,210.1" fill="#d6d1c0"/>
<polygon points="602.1,228.2 602.8,234.7 617.3,234.7 616.6,228.2" fill="#949084"/>
<polygon points="812.7,170.4 812.9,173.5 823.2,173.5 823.0,170.4" fill="#fffffa"/>
<polygon points="812.1,222.9 811.8,228.0 822.1,228.0 822.4,222.9" fill="#949084"/>
<polygon points="653.7,136.8 652.0,139.3 661.2,127.0 662.6,125.1" fill="#e9e4d0"/>
<polygon points="790.9,152.6 790.5,149.6 785.0,137.6 785.3,140.2" fill="#fffffa"/>
<polygon points="717.3,242.3 732.2,242.5 732.2,220.9 717.3,220.8" fill="#cfcab9"/>
<polygon points="857.1,185.6 857.3,189.2 870.1,189.2 869.9,185.6" fill="#fffffa"/>
<polygon points="856.9,212.0 856.6,216.6 869.5,216.6 869.7,212.0" fill="#949084"/>
<polygon points="847.9,181.0 848.2,183.4 849.7,166.8 849.3,162.9" fill="#bdb8a9"/>
<polygon points="832.1,188.8 832.1,192.7 848.5,193.8 848.5,189.8" fill="#fffffa"/>
<polygon points="831.9,206.2 831.7,210.8 848.1,211.8 848.3,207.2" fill="#ede8d4"/>
<polygon points="942.9,230.8 951.5,230.5 953.9,216.1 945.4,216.4" fill="#e5e0cd"/>
<polygon points="847.6,220.5 847.3,224.4 848.1,236.5 848.7,230.0" fill="#bdb8a9"/>
<polygon points="918.0,230.7 942.9,230.8 945.4,216.4 920.6,216.3" fill="#e0dbc9"/>
<polygon points="877.1,191.0 877.2,194.8 885.4,194.8 885.3,191.0" fill="#fffffa"/>
<polygon points="876.9,207.7 876.7,212.1 884.9,212.1 885.2,207.7" fill="#ede8d4"/>
<polygon points="884.8,184.7 885.1,187.6 886.1,180.3 885.8,176.4" fill="#bdb8a9"/>
<polygon points="884.6,216.4 884.3,220.5 885.0,224.5 885.5,219.0" fill="#bdb8a9"/>
<polygon points="732.2,242.5 747.1,242.6 747.0,221.1 732.2,220.9" fill="#cfcab9"/>
<polygon points="761.9,211.7 810.4,207.5 809.4,202.3 761.4,206.4" fill="#fffffa"/>
<polygon points="479.1,188.8 483.9,189.5 483.9,168.9 479.2,168.2" fill="#f9f3de"/>
<polygon points="898.5,190.3 901.3,192.1 901.3,183.9 898.5,182.3" fill="#cac5b4"/>
<polygon points="885.3,173.4 885.8,176.4 903.2,176.4 902.7,173.4" fill="#fffffa"/>
<polygon points="812.4,186.6 812.4,189.7 813.1,182.1 813.0,177.4" fill="#bdb8a9"/>
<polygon points="812.1,209.2 811.9,213.2 812.4,217.3 812.6,211.3" fill="#bdb8a9"/>
<polygon points="885.0,224.5 884.5,229.4 901.8,229.4 902.5,224.5" fill="#949084"/>
<polygon points="869.4,180.1 869.7,182.5 871.3,168.2 870.8,164.3" fill="#bdb8a9"/>
<polygon points="823.2,159.1 823.5,161.8 832.8,161.8 832.4,159.1" fill="#fffffa"/>
<polygon points="869.1,221.0 868.7,225.0 869.7,236.4 870.4,230.0" fill="#bdb8a9"/>
<polygon points="617.9,175.9 617.4,180.8 624.6,180.8 625.1,175.9" fill="#fffffa"/>
<polygon points="747.1,242.6 761.9,242.8 761.9,221.2 747.0,221.1" fill="#cfcab9"/>
<polygon points="822.4,235.5 821.9,241.1 831.1,241.1 831.6,235.5" fill="#ebe5d2"/>
<polygon points="616.9,211.7 617.2,218.0 624.4,218.0 624.1,211.7" fill="#949084"/>
<polygon points="617.6,164.3 616.9,169.3 617.9,175.9 618.4,171.8" fill="#d6d1c0"/>
<polygon points="906.1,215.3 911.7,216.0 911.5,210.1 905.7,209.4" fill="#838075"/>
<polygon points="616.1,220.9 616.6,228.2 617.6,223.9 617.2,218.0" fill="#d6d1c0"/>
<polygon points="525.5,142.3 529.7,139.4 529.5,130.9 525.2,133.7" fill="#fef8e3"/>
<polygon points="832.1,192.7 832.1,197.0 848.5,198.1 848.5,193.8" fill="#fffffa"/>
<polygon points="538.5,157.8 541.8,156.4 541.8,143.3 538.5,144.6" fill="#faf5e0"/>
<polygon points="832.0,201.5 831.9,206.2 848.3,207.2 848.4,202.6" fill="#fffffa"/>
<polygon points="565.2,174.5 564.7,181.2 567.8,189.7 568.1,185.5" fill="#d6d1c0"/>
<polygon points="564.3,204.2 564.6,212.1 567.7,209.1 567.5,204.1" fill="#d6d1c0"/>
<polygon points="877.2,194.8 877.2,198.9 885.4,198.9 885.4,194.8" fill="#fffffa"/>
<polygon points="877.1,203.2 876.9,207.7 885.2,207.7 885.3,203.2" fill="#fffffa"/>
<polygon points="870.3,161.6 870.8,164.3 878.1,164.3 877.4,161.6" fill="#fffffa"/>
<polygon points="848.8,160.1 849.3,162.9 858.1,162.9 857.5,160.1" fill="#fffffa"/>
<polygon points="869.7,236.4 869.0,241.9 876.2,241.9 876.9,236.4" fill="#ebe5d2"/>
<polygon points="848.1,236.5 847.5,242.2 856.2,242.2 856.9,236.5" fill="#ebe5d2"/>
<polygon points="832.1,197.0 832.0,201.5 848.4,202.6 848.5,198.1" fill="#fffffa"/>
<polygon points="477.2,167.2 479.2,168.2 480.6,157.8 478.7,156.9" fill="#aaa698"/>
<polygon points="877.2,198.9 877.1,203.2 885.3,203.2 885.4,198.9" fill="#fffffa"/>
<polygon points="589.3,175.6 588.7,182.3 591.4,190.7 591.8,186.5" fill="#d6d1c0"/>
<polygon points="588.4,205.2 588.6,213.1 591.4,210.1 591.2,205.2" fill="#d6d1c0"/>
<polygon points="857.3,189.2 857.3,193.3 870.2,193.3 870.1,189.2" fill="#fffffa"/>
<polygon points="857.1,207.2 856.9,212.0 869.7,212.0 870.0,207.2" fill="#ede8d4"/>
<polygon points="529.7,190.3 536.1,189.7 535.3,169.1 529.0,169.6" fill="#fffffa"/>
<polygon points="901.7,208.3 905.7,209.4 905.4,193.1 901.3,192.1" fill="#bbb6a7"/>
<polygon points="907.0,146.9 912.8,147.4 921.9,147.6 947.3,147.6 956.0,147.4 960.8,146.9 963.1,146.1 963.2,144.8 958.9,141.2 956.0,140.0 952.0,139.3 946.3,138.8 937.6,138.6 913.6,138.6 905.3,138.8 900.6,139.3 898.1,140.0 897.6,141.2 900.5,144.8 903.1,146.1" fill="#fffbed"/>
<polygon points="557.6,163.7 556.6,168.6 566.0,168.6 566.9,163.7" fill="#fffffa"/>
<polygon points="555.8,219.7 556.6,226.9 565.9,226.9 565.2,219.7" fill="#c7c2b2"/>
<polygon points="812.4,189.7 812.4,193.2 813.1,187.3 813.1,182.1" fill="#bdb8a9"/>
<polygon points="812.2,205.1 812.1,209.2 812.6,211.3 812.8,205.2" fill="#bdb8a9"/>
<polygon points="564.7,181.2 564.3,188.6 567.6,194.3 567.8,189.7" fill="#d6d1c0"/>
<polygon points="564.2,196.3 564.3,204.2 567.5,204.1 567.5,199.2" fill="#d6d1c0"/>
<polygon points="499.9,133.1 503.6,133.8 517.0,134.7 522.0,134.5 525.2,133.7 529.5,130.9 529.0,129.9 525.4,129.3 512.4,128.5 507.6,128.6 504.3,129.3 499.6,132.1" fill="#fffef6"/>
<polygon points="953.9,216.1 958.6,215.4 960.3,209.5 955.4,210.2" fill="#969386"/>
<polygon points="857.3,193.3 857.3,197.7 870.2,197.7 870.2,193.3" fill="#fffffa"/>
<polygon points="857.3,202.4 857.1,207.2 870.0,207.2 870.1,202.4" fill="#fffffa"/>
<polygon points="577.3,164.7 576.4,169.7 589.9,169.7 590.8,164.7" fill="#fffffa"/>
<polygon points="885.1,187.6 885.3,191.0 886.4,184.8 886.1,180.3" fill="#bdb8a9"/>
<polygon points="575.6,220.7 576.3,227.9 589.7,227.9 589.1,220.7" fill="#c7c2b2"/>
<polygon points="823.0,170.4 823.2,173.5 823.8,165.7 823.5,161.8" fill="#bdb8a9"/>
<polygon points="884.9,212.1 884.6,216.4 885.5,219.0 885.9,213.2" fill="#bdb8a9"/>
<polygon points="822.4,222.9 822.1,228.0 822.4,235.5 822.8,228.9" fill="#bdb8a9"/>
<polygon points="483.9,189.5 492.9,190.0 492.8,169.3 483.9,168.9" fill="#fffdf3"/>
<polygon points="588.7,182.3 588.4,189.6 591.2,195.3 591.4,190.7" fill="#d6d1c0"/>
<polygon points="588.3,197.3 588.4,205.2 591.2,205.2 591.2,200.2" fill="#d6d1c0"/>
<polygon points="564.3,188.6 564.2,196.3 567.5,199.2 567.6,194.3" fill="#d6d1c0"/>
<polygon points="857.3,197.7 857.3,202.4 870.1,202.4 870.2,197.7" fill="#fffffa"/>
<polygon points="812.9,173.5 813.0,177.4 823.3,177.4 823.2,173.5" fill="#fffffa"/>
<polygon points="812.4,217.3 812.1,222.9 822.4,222.9 822.7,217.3" fill="#c7c2b2"/>
<polygon points="617.4,180.8 617.0,186.3 624.3,186.3 624.6,180.8" fill="#fffffa"/>
<polygon points="616.7,205.2 616.9,211.7 624.1,211.7 624.0,205.2" fill="#ede8d4"/>
<polygon points="535.3,169.1 539.9,168.2 538.5,157.8 534.1,158.6" fill="#d5d0be"/>
<polygon points="911.7,216.0 920.6,216.3 920.8,210.4 911.5,210.1" fill="#8b887c"/>
<polygon points="761.4,206.4 809.4,202.3 802.7,183.6 759.9,187.0" fill="#fff9e5"/>
<polygon points="634.4,182.3 675.3,186.3 676.5,169.3 640.6,165.9" fill="#efe9d5"/>
<polygon points="588.4,189.6 588.3,197.3 591.2,200.2 591.2,195.3" fill="#d6d1c0"/>
<polygon points="812.4,193.2 812.4,197.0 813.1,193.0 813.1,187.3" fill="#bdb8a9"/>
<polygon points="812.3,201.0 812.2,205.1 812.8,205.2 813.0,199.0" fill="#bdb8a9"/>
<polygon points="785.3,140.2 785.0,137.6 776.0,125.7 776.2,127.7" fill="#fffffa"/>
<polygon points="848.2,183.4 848.3,186.3 850.0,171.8 849.7,166.8" fill="#bdb8a9"/>
<polygon points="847.9,216.3 847.6,220.5 848.7,230.0 849.2,222.8" fill="#bdb8a9"/>
<polygon points="662.6,125.1 661.2,127.0 672.5,114.7 673.4,113.3" fill="#efead6"/>
<polygon points="812.4,197.0 812.3,201.0 813.0,199.0 813.1,193.0" fill="#bdb8a9"/>
<polygon points="519.9,190.4 529.7,190.3 529.0,169.6 519.3,169.7" fill="#fffffa"/>
<polygon points="603.1,164.3 602.3,169.3 616.9,169.3 617.6,164.3" fill="#fffffa"/>
<polygon points="960.3,209.5 962.7,208.4 963.9,192.2 961.4,193.2" fill="#ebe6d2"/>
<polygon points="601.5,220.9 602.1,228.2 616.6,228.2 616.1,220.9" fill="#c7c2b2"/>
<polygon points="492.9,190.0 519.9,190.4 519.3,169.7 492.8,169.3" fill="#fffffa"/>
<polygon points="885.8,176.4 886.1,180.3 903.7,180.3 903.2,176.4" fill="#fffffa"/>
<polygon points="885.5,219.0 885.0,224.5 902.5,224.5 903.0,219.0" fill="#c7c2b2"/>
<polygon points="616.9,169.3 616.3,175.3 617.4,180.8 617.9,175.9" fill="#d6d1c0"/>
<polygon points="869.7,182.5 869.9,185.6 871.7,173.1 871.3,168.2" fill="#bdb8a9"/>
<polygon points="615.7,213.2 616.1,220.9 617.2,218.0 616.9,211.7" fill="#d6d1c0"/>
<polygon points="672.8,220.4 687.6,220.5 687.6,211.1 672.8,211.0" fill="#f0ead6"/>
<polygon points="945.4,216.4 953.9,216.1 955.4,210.2 946.6,210.5" fill="#928e82"/>
<polygon points="869.5,216.6 869.1,221.0 870.4,230.0 870.9,223.0" fill="#bdb8a9"/>
<polygon points="617.0,186.3 616.8,192.3 624.1,192.3 624.3,186.3" fill="#fffffa"/>
<polygon points="616.7,198.7 616.7,205.2 624.0,205.2 624.0,198.7" fill="#fffffa"/>
<polygon points="920.6,216.3 945.4,216.4 946.6,210.5 920.8,210.4" fill="#8f8b80"/>
<polygon points="885.3,191.0 885.4,194.8 886.5,189.9 886.4,184.8" fill="#bdb8a9"/>
<polygon points="885.2,207.7 884.9,212.1 885.9,213.2 886.2,207.3" fill="#bdb8a9"/>
<polygon points="898.5,182.3 901.3,183.9 901.5,169.7 898.7,168.1" fill="#dad5c3"/>
<polygon points="687.6,220.5 702.4,220.7 702.5,211.2 687.6,211.1" fill="#f0ead6"/>
<polygon points="616.8,192.3 616.7,198.7 624.0,198.7 624.1,192.3" fill="#fffffa"/>
<polygon points="478.7,156.9 480.6,157.8 480.6,144.5 478.7,143.7" fill="#c9c4b4"/>
<polygon points="702.4,220.7 717.3,220.8 717.3,211.4 702.5,211.2" fill="#f0ead6"/>
<polygon points="479.2,168.2 483.9,168.9 485.1,158.4 480.6,157.8" fill="#b7b3a4"/>
<polygon points="885.4,194.8 885.4,198.9 886.5,195.4 886.5,189.9" fill="#bdb8a9"/>
<polygon points="885.3,203.2 885.2,207.7 886.2,207.3 886.5,201.3" fill="#bdb8a9"/>
<polygon points="905.7,209.4 911.5,210.1 911.4,193.8 905.4,193.1" fill="#cac5b4"/>
<polygon points="717.3,220.8 732.2,220.9 732.2,211.5 717.3,211.4" fill="#f0ead6"/>
<polygon points="813.0,177.4 813.1,182.1 823.4,182.1 823.3,177.4" fill="#fffffa"/>
<polygon points="812.6,211.3 812.4,217.3 822.7,217.3 823.0,211.3" fill="#949084"/>
<polygon points="556.6,168.6 555.9,174.5 565.2,174.5 566.0,168.6" fill="#fffffa"/>
<polygon points="885.4,198.9 885.3,203.2 886.5,201.3 886.5,195.4" fill="#bdb8a9"/>
<polygon points="555.2,212.1 555.8,219.7 565.2,219.7 564.6,212.1" fill="#949084"/>
<polygon points="823.5,161.8 823.8,165.7 833.1,165.7 832.8,161.8" fill="#fffffa"/>
<polygon points="822.8,228.9 822.4,235.5 831.6,235.5 832.1,228.9" fill="#949084"/>
<polygon points="732.2,220.9 747.0,221.1 747.1,211.6 732.2,211.5" fill="#f0ead6"/>
<polygon points="576.4,169.7 575.7,175.6 589.3,175.6 589.9,169.7" fill="#fffffa"/>
<polygon points="575.1,213.1 575.6,220.7 589.1,220.7 588.6,213.1" fill="#949084"/>
<polygon points="870.8,164.3 871.3,168.2 878.6,168.2 878.1,164.3" fill="#fffffa"/>
<polygon points="870.4,230.0 869.7,236.4 876.9,236.4 877.6,230.0" fill="#949084"/>
<polygon points="849.3,162.9 849.7,166.8 858.5,166.8 858.1,162.9" fill="#fffffa"/>
<polygon points="672.8,211.0 687.6,211.1 688.0,205.8 673.4,205.7" fill="#fffffa"/>
<polygon points="848.3,186.3 848.5,189.8 850.2,177.7 850.0,171.8" fill="#bdb8a9"/>
<polygon points="848.1,211.8 847.9,216.3 849.2,222.8 849.6,215.2" fill="#bdb8a9"/>
<polygon points="848.7,230.0 848.1,236.5 856.9,236.5 857.5,230.0" fill="#949084"/>
<polygon points="901.3,192.1 905.4,193.1 905.4,185.0 901.3,183.9" fill="#d5d0be"/>
<polygon points="747.0,221.1 761.9,221.2 761.9,211.7 747.1,211.6" fill="#f0ead6"/>
<polygon points="529.0,169.6 535.3,169.1 534.1,158.6 528.1,159.1" fill="#d2cdbc"/>
<polygon points="616.3,175.3 615.9,182.0 617.0,186.3 617.4,180.8" fill="#d6d1c0"/>
<polygon points="823.2,173.5 823.3,177.4 824.0,170.7 823.8,165.7" fill="#bdb8a9"/>
<polygon points="615.5,205.2 615.7,213.2 616.9,211.7 616.7,205.2" fill="#d6d1c0"/>
<polygon points="964.3,184.0 964.3,182.4 964.5,168.2 964.5,169.7" fill="#fffffa"/>
<polygon points="822.7,217.3 822.4,222.9 822.8,228.9 823.2,221.8" fill="#bdb8a9"/>
<polygon points="886.1,180.3 886.4,184.8 903.9,184.8 903.7,180.3" fill="#fffffa"/>
<polygon points="885.9,213.2 885.5,219.0 903.0,219.0 903.5,213.2" fill="#949084"/>
<polygon points="534.1,158.6 538.5,157.8 538.5,144.6 534.1,145.3" fill="#fdf7e2"/>
<polygon points="687.6,211.1 702.5,211.2 702.7,205.9 688.0,205.8" fill="#fffffa"/>
<polygon points="776.2,127.7 776.0,125.7 765.0,113.8 765.0,115.2" fill="#fffffa"/>
<polygon points="640.6,165.9 676.5,169.3 677.3,154.4 646.3,151.6" fill="#f2ecd8"/>
<polygon points="869.9,185.6 870.1,189.2 872.0,178.8 871.7,173.1" fill="#bdb8a9"/>
<polygon points="869.7,212.0 869.5,216.6 870.9,223.0 871.4,215.5" fill="#bdb8a9"/>
<polygon points="759.9,187.0 802.7,183.6 796.6,167.0 758.9,169.9" fill="#fffbec"/>
<polygon points="673.4,113.3 672.5,114.7 685.7,105.4 686.2,104.6" fill="#f4eeda"/>
<polygon points="955.4,210.2 960.3,209.5 961.4,193.2 956.4,193.9" fill="#e8e2cf"/>
<polygon points="702.5,211.2 717.3,211.4 717.3,206.1 702.7,205.9" fill="#fffffa"/>
<polygon points="483.9,168.9 492.8,169.3 493.6,158.8 485.1,158.4" fill="#c2bdad"/>
<polygon points="602.3,169.3 601.7,175.3 616.3,175.3 616.9,169.3" fill="#fffffa"/>
<polygon points="601.1,213.2 601.5,220.9 616.1,220.9 615.7,213.2" fill="#949084"/>
<polygon points="813.1,182.1 813.1,187.3 823.5,187.3 823.4,182.1" fill="#fffffa"/>
<polygon points="717.3,211.4 732.2,211.5 732.0,206.2 717.3,206.1" fill="#fffffa"/>
<polygon points="812.8,205.2 812.6,211.3 823.0,211.3 823.2,205.2" fill="#ede8d4"/>
<polygon points="911.5,210.1 920.8,210.4 920.9,194.1 911.4,193.8" fill="#d6d1bf"/>
<polygon points="615.9,182.0 615.6,189.4 616.8,192.3 617.0,186.3" fill="#d6d1c0"/>
<polygon points="615.5,197.2 615.5,205.2 616.7,205.2 616.7,198.7" fill="#d6d1c0"/>
<polygon points="732.2,211.5 747.1,211.6 746.7,206.3 732.0,206.2" fill="#fffffa"/>
<polygon points="898.7,168.1 901.5,169.7 902.7,161.4 900.0,160.0" fill="#a09d8f"/>
<polygon points="555.9,174.5 555.3,181.2 564.7,181.2 565.2,174.5" fill="#fffffa"/>
<polygon points="519.3,169.7 529.0,169.6 528.1,159.1 518.9,159.2" fill="#cbc6b5"/>
<polygon points="554.9,204.2 555.2,212.1 564.6,212.1 564.3,204.2" fill="#ede8d4"/>
<polygon points="848.5,189.8 848.5,193.8 850.3,184.4 850.2,177.7" fill="#bdb8a9"/>
<polygon points="848.3,207.2 848.1,211.8 849.6,215.2 849.9,207.3" fill="#bdb8a9"/>
<polygon points="961.4,193.2 963.9,192.2 964.3,184.0 961.8,185.0" fill="#fffffa"/>
<polygon points="615.6,189.4 615.5,197.2 616.7,198.7 616.8,192.3" fill="#d6d1c0"/>
<polygon points="492.8,169.3 519.3,169.7 518.9,159.2 493.6,158.8" fill="#c7c2b2"/>
<polygon points="886.4,184.8 886.5,189.9 904.1,189.9 903.9,184.8" fill="#fffffa"/>
<polygon points="747.1,211.6 761.9,211.7 761.4,206.4 746.7,206.3" fill="#fffffa"/>
<polygon points="886.2,207.3 885.9,213.2 903.5,213.2 903.8,207.3" fill="#ede8d4"/>
<polygon points="673.4,205.7 688.0,205.8 689.3,186.4 675.3,186.3" fill="#f7f1dd"/>
<polygon points="575.7,175.6 575.1,182.3 588.7,182.3 589.3,175.6" fill="#fffffa"/>
<polygon points="480.6,157.8 485.1,158.4 485.1,145.1 480.6,144.5" fill="#d9d4c2"/>
<polygon points="574.8,205.2 575.1,213.1 588.6,213.1 588.4,205.2" fill="#ede8d4"/>
<polygon points="813.1,187.3 813.1,193.0 823.4,193.0 823.5,187.3" fill="#fffffa"/>
<polygon points="813.0,199.0 812.8,205.2 823.2,205.2 823.3,199.0" fill="#fffffa"/>
<polygon points="946.6,210.5 955.4,210.2 956.4,193.9 947.4,194.2" fill="#e0dbc8"/>
<polygon points="870.1,189.2 870.2,193.3 872.2,185.4 872.0,178.8" fill="#bdb8a9"/>
<polygon points="870.0,207.2 869.7,212.0 871.4,215.5 871.8,207.8" fill="#bdb8a9"/>
<polygon points="920.8,210.4 946.6,210.5 947.4,194.2 920.9,194.1" fill="#dbd6c4"/>
<polygon points="688.0,205.8 702.7,205.9 703.4,186.5 689.3,186.4" fill="#f7f1dd"/>
<polygon points="813.1,193.0 813.0,199.0 823.3,199.0 823.4,193.0" fill="#fffffa"/>
<polygon points="702.7,205.9 717.3,206.1 717.5,186.6 703.4,186.5" fill="#f7f1dd"/>
<polygon points="765.0,115.2 765.0,113.8 752.0,104.9 752.0,105.8" fill="#fffffa"/>
<polygon points="848.5,193.8 848.5,198.1 850.3,191.7 850.3,184.4" fill="#bdb8a9"/>
<polygon points="848.4,202.6 848.3,207.2 849.9,207.3 850.2,199.4" fill="#bdb8a9"/>
<polygon points="823.3,177.4 823.4,182.1 824.1,176.6 824.0,170.7" fill="#bdb8a9"/>
<polygon points="823.0,211.3 822.7,217.3 823.2,221.8 823.5,214.2" fill="#bdb8a9"/>
<polygon points="646.3,151.6 677.3,154.4 678.0,141.7 652.0,139.3" fill="#f8f3de"/>
<polygon points="886.5,189.9 886.5,195.4 904.2,195.4 904.1,189.9" fill="#fffffa"/>
<polygon points="886.5,201.3 886.2,207.3 903.8,207.3 904.1,201.3" fill="#fffffa"/>
<polygon points="555.3,181.2 554.9,188.6 564.3,188.6 564.7,181.2" fill="#fffffa"/>
<polygon points="554.8,196.3 554.9,204.2 564.3,204.2 564.2,196.3" fill="#fffffa"/>
<polygon points="717.3,206.1 732.0,206.2 731.6,186.8 717.5,186.6" fill="#f7f1dd"/>
<polygon points="601.7,175.3 601.2,182.0 615.9,182.0 616.3,175.3" fill="#fffffa"/>
<polygon points="600.9,205.2 601.1,213.2 615.7,213.2 615.5,205.2" fill="#ede8d4"/>
<polygon points="528.1,159.1 534.1,158.6 534.1,145.3 528.1,145.7" fill="#f9f3df"/>
<polygon points="848.5,198.1 848.4,202.6 850.2,199.4 850.3,191.7" fill="#bdb8a9"/>
<polygon points="823.8,165.7 824.0,170.7 833.4,170.7 833.1,165.7" fill="#fffffa"/>
<polygon points="886.5,195.4 886.5,201.3 904.1,201.3 904.2,195.4" fill="#fffffa"/>
<polygon points="905.4,193.1 911.4,193.8 911.4,185.6 905.4,185.0" fill="#e6e0ce"/>
<polygon points="964.5,169.7 964.5,168.2 963.7,160.0 963.7,161.5" fill="#d3cebc"/>
<polygon points="823.2,221.8 822.8,228.9 832.1,228.9 832.5,221.8" fill="#c7c2b2"/>
<polygon points="870.2,193.3 870.2,197.7 872.2,192.6 872.2,185.4" fill="#bdb8a9"/>
<polygon points="575.1,182.3 574.8,189.6 588.4,189.6 588.7,182.3" fill="#fffffa"/>
<polygon points="870.1,202.4 870.0,207.2 871.8,207.8 872.1,200.1" fill="#bdb8a9"/>
<polygon points="574.7,197.3 574.8,205.2 588.4,205.2 588.3,197.3" fill="#fffffa"/>
<polygon points="732.0,206.2 746.7,206.3 745.7,186.9 731.6,186.8" fill="#f7f1dd"/>
<polygon points="871.3,168.2 871.7,173.1 879.0,173.1 878.6,168.2" fill="#fffffa"/>
<polygon points="901.3,183.9 905.4,185.0 905.6,170.6 901.5,169.7" fill="#e6e1ce"/>
<polygon points="758.9,169.9 796.6,167.0 790.9,152.6 758.4,155.0" fill="#fffdf4"/>
<polygon points="554.9,188.6 554.8,196.3 564.2,196.3 564.3,188.6" fill="#fffffa"/>
<polygon points="870.9,223.0 870.4,230.0 877.6,230.0 878.2,223.0" fill="#c7c2b2"/>
<polygon points="849.7,166.8 850.0,171.8 858.8,171.8 858.5,166.8" fill="#fffffa"/>
<polygon points="870.2,197.7 870.1,202.4 872.1,200.1 872.2,192.6" fill="#bdb8a9"/>
<polygon points="849.2,222.8 848.7,230.0 857.5,230.0 858.0,222.8" fill="#c7c2b2"/>
<polygon points="574.8,189.6 574.7,197.3 588.3,197.3 588.4,189.6" fill="#fffffa"/>
<polygon points="746.7,206.3 761.4,206.4 759.9,187.0 745.7,186.9" fill="#f7f1dd"/>
<polygon points="485.1,158.4 493.6,158.8 493.6,145.5 485.1,145.1" fill="#e6e1ce"/>
<polygon points="688.3,106.2 698.3,106.3 708.4,106.3 718.5,106.4 728.6,106.4 738.7,106.5 748.8,106.5 752.0,105.8 752.0,104.9 747.2,104.2 734.2,103.7 704.8,103.6 691.5,103.9 686.2,104.6 685.7,105.4" fill="#fffffa"/>
<polygon points="601.2,182.0 600.9,189.4 615.6,189.4 615.9,182.0" fill="#fffffa"/>
<polygon points="600.8,197.2 600.9,205.2 615.5,205.2 615.5,197.2" fill="#fffffa"/>
<polygon points="499.8,140.6 500.1,141.7 499.9,133.1 499.6,132.1" fill="#d2cdbc"/>
<polygon points="518.9,159.2 528.1,159.1 528.1,145.7 518.9,145.8" fill="#f1ebd7"/>
<polygon points="675.3,186.3 689.3,186.4 690.2,169.4 676.5,169.3" fill="#fbf5e0"/>
<polygon points="956.4,193.9 961.4,193.2 961.8,185.0 956.8,185.7" fill="#fffdf3"/>
<polygon points="900.0,160.0 902.7,161.4 903.1,146.1 900.5,144.8" fill="#bebaaa"/>
<polygon points="493.6,158.8 518.9,159.2 518.9,145.8 493.6,145.5" fill="#ece6d3"/>
<polygon points="823.4,182.1 823.5,187.3 824.1,183.3 824.1,176.6" fill="#bdb8a9"/>
<polygon points="823.2,205.2 823.0,211.3 823.5,214.2 823.8,206.3" fill="#bdb8a9"/>
<polygon points="522.2,143.2 525.5,142.3 525.2,133.7 522.0,134.5" fill="#fffae7"/>
<polygon points="652.0,139.3 678.0,141.7 679.4,128.9 661.2,127.0" fill="#fef8e3"/>
<polygon points="600.9,189.4 600.8,197.2 615.5,197.2 615.6,189.4" fill="#fffffa"/>
<polygon points="689.3,186.4 703.4,186.5 703.9,169.5 690.2,169.4" fill="#fbf5e0"/>
<polygon points="961.8,185.0 964.3,184.0 964.5,169.7 962.0,170.7" fill="#fffffa"/>
<polygon points="911.4,193.8 920.9,194.1 921.0,185.9 911.4,185.6" fill="#f4eeda"/>
<polygon points="703.4,186.5 717.5,186.6 717.6,169.6 703.9,169.5" fill="#fbf5e0"/>
<polygon points="717.5,186.6 731.6,186.8 731.4,169.7 717.6,169.6" fill="#fbf5e0"/>
<polygon points="758.4,155.0 790.9,152.6 785.3,140.2 757.9,142.2" fill="#fffffa"/>
<polygon points="913.4,141.3 916.1,144.2 916.3,135.7 913.6,132.8" fill="#cec9b8"/>
<polygon points="823.5,187.3 823.4,193.0 824.1,190.7 824.1,183.3" fill="#bdb8a9"/>
<polygon points="823.3,199.0 823.2,205.2 823.8,206.3 824.0,198.4" fill="#bdb8a9"/>
<polygon points="731.6,186.8 745.7,186.9 745.1,169.8 731.4,169.7" fill="#fbf5e0"/>
<polygon points="947.4,194.2 956.4,193.9 956.8,185.7 947.7,186.0" fill="#fff9e5"/>
<polygon points="824.0,170.7 824.1,176.6 833.5,176.6 833.4,170.7" fill="#fffffa"/>
<polygon points="920.9,194.1 947.4,194.2 947.7,186.0 921.0,185.9" fill="#faf4df"/>
<polygon points="823.5,214.2 823.2,221.8 832.5,221.8 832.9,214.2" fill="#949084"/>
<polygon points="661.2,127.0 679.4,128.9 681.8,116.0 672.5,114.7" fill="#fff9e5"/>
<polygon points="871.7,173.1 872.0,178.8 879.3,178.8 879.0,173.1" fill="#fffffa"/>
<polygon points="823.4,193.0 823.3,199.0 824.0,198.4 824.1,190.7" fill="#bdb8a9"/>
<polygon points="871.4,215.5 870.9,223.0 878.2,223.0 878.7,215.5" fill="#949084"/>
<polygon points="963.7,161.5 963.7,160.0 963.2,144.8 963.1,146.1" fill="#faf4e0"/>
<polygon points="745.7,186.9 759.9,187.0 758.9,169.9 745.1,169.8" fill="#fbf5e0"/>
<polygon points="901.5,169.7 905.6,170.6 906.7,162.3 902.7,161.4" fill="#a9a597"/>
<polygon points="850.0,171.8 850.2,177.7 859.1,177.7 858.8,171.8" fill="#fffffa"/>
<polygon points="905.4,185.0 911.4,185.6 911.6,171.2 905.6,170.6" fill="#f9f3de"/>
<polygon points="849.6,215.2 849.2,222.8 858.0,222.8 858.5,215.2" fill="#949084"/>
<polygon points="672.5,114.7 681.8,116.0 688.3,106.2 685.7,105.4" fill="#fcf6e1"/>
<polygon points="676.5,169.3 690.2,169.4 690.8,154.5 677.3,154.4" fill="#fff9e4"/>
<polygon points="690.2,169.4 703.9,169.5 704.3,154.6 690.8,154.5" fill="#fff9e4"/>
<polygon points="757.9,142.2 785.3,140.2 776.2,127.7 756.9,129.3" fill="#fffffa"/>
<polygon points="919.3,136.5 924.4,136.6 939.1,135.9 943.4,135.2 944.4,134.2 941.2,131.4 938.2,130.6 933.1,130.5 919.0,131.2 914.7,131.8 913.6,132.8 916.3,135.7" fill="#fffef6"/>
<polygon points="703.9,169.5 717.6,169.6 717.8,154.7 704.3,154.6" fill="#fff9e4"/>
<polygon points="500.1,141.7 503.8,142.4 503.6,133.8 499.9,133.1" fill="#e3decb"/>
<polygon points="956.8,185.7 961.8,185.0 962.0,170.7 957.0,171.3" fill="#fffffa"/>
<polygon points="517.2,143.3 522.2,143.2 522.0,134.5 517.0,134.7" fill="#fef8e3"/>
<polygon points="962.0,170.7 964.5,169.7 963.7,161.5 961.3,162.3" fill="#d5d0be"/>
<polygon points="717.6,169.6 731.4,169.7 731.3,154.8 717.8,154.7" fill="#fff9e4"/>
<polygon points="824.1,176.6 824.1,183.3 833.6,183.3 833.5,176.6" fill="#fffffa"/>
<polygon points="823.8,206.3 823.5,214.2 832.9,214.2 833.2,206.3" fill="#ede8d4"/>
<polygon points="731.4,169.7 745.1,169.8 744.8,154.9 731.3,154.8" fill="#fff9e4"/>
<polygon points="872.0,178.8 872.2,185.4 879.5,185.4 879.3,178.8" fill="#fffffa"/>
<polygon points="871.8,207.8 871.4,215.5 878.7,215.5 879.1,207.8" fill="#ede8d4"/>
<polygon points="911.4,185.6 921.0,185.9 921.2,171.5 911.6,171.2" fill="#fffdf3"/>
<polygon points="756.9,129.3 776.2,127.7 765.0,115.2 754.9,116.4" fill="#fffffa"/>
<polygon points="754.9,116.4 765.0,115.2 752.0,105.8 748.8,106.5" fill="#fffffa"/>
<polygon points="850.2,177.7 850.3,184.4 859.2,184.4 859.1,177.7" fill="#fffffa"/>
<polygon points="849.9,207.3 849.6,215.2 858.5,215.2 858.8,207.3" fill="#ede8d4"/>
<polygon points="745.1,169.8 758.9,169.9 758.4,155.0 744.8,154.9" fill="#fff9e4"/>
<polygon points="677.3,154.4 690.8,154.5 691.3,141.8 678.0,141.7" fill="#fffcf0"/>
<polygon points="503.8,142.4 517.2,143.3 517.0,134.7 503.6,133.8" fill="#f2edd9"/>
<polygon points="690.8,154.5 704.3,154.6 704.6,141.8 691.3,141.8" fill="#fffcf0"/>
<polygon points="902.7,161.4 906.7,162.3 907.0,146.9 903.1,146.1" fill="#c9c4b4"/>
<polygon points="947.7,186.0 956.8,185.7 957.0,171.3 947.9,171.5" fill="#fffffa"/>
<polygon points="704.3,154.6 717.8,154.7 717.9,141.9 704.6,141.8" fill="#fffcf0"/>
<polygon points="905.6,170.6 911.6,171.2 912.5,162.8 906.7,162.3" fill="#b7b3a4"/>
<polygon points="921.0,185.9 947.7,186.0 947.9,171.5 921.2,171.5" fill="#fffffa"/>
<polygon points="824.1,183.3 824.1,190.7 833.5,190.7 833.6,183.3" fill="#fffffa"/>
<polygon points="824.0,198.4 823.8,206.3 833.2,206.3 833.4,198.4" fill="#fffffa"/>
<polygon points="872.2,185.4 872.2,192.6 879.5,192.6 879.5,185.4" fill="#fffffa"/>
<polygon points="872.1,200.1 871.8,207.8 879.1,207.8 879.4,200.1" fill="#fffffa"/>
<polygon points="681.8,116.0 693.9,116.1 698.3,106.3 688.3,106.2" fill="#fffffa"/>
<polygon points="717.8,154.7 731.3,154.8 731.2,142.0 717.9,141.9" fill="#fffcf0"/>
<polygon points="678.0,141.7 691.3,141.8 692.2,128.9 679.4,128.9" fill="#fffffa"/>
<polygon points="850.3,184.4 850.3,191.7 859.2,191.7 859.2,184.4" fill="#fffffa"/>
<polygon points="850.2,199.4 849.9,207.3 858.8,207.3 859.1,199.4" fill="#fffffa"/>
<polygon points="824.1,190.7 824.0,198.4 833.4,198.4 833.5,190.7" fill="#fffffa"/>
<polygon points="693.9,116.1 706.1,116.1 708.4,106.3 698.3,106.3" fill="#fffffa"/>
<polygon points="872.2,192.6 872.1,200.1 879.4,200.1 879.5,192.6" fill="#fffffa"/>
<polygon points="731.3,154.8 744.8,154.9 744.5,142.1 731.2,142.0" fill="#fffcf0"/>
<polygon points="691.3,141.8 704.6,141.8 705.1,129.0 692.2,128.9" fill="#fffffa"/>
<polygon points="706.1,116.1 718.3,116.2 718.5,106.4 708.4,106.3" fill="#fffffa"/>
<polygon points="679.4,128.9 692.2,128.9 693.9,116.1 681.8,116.0" fill="#fffffa"/>
<polygon points="850.3,191.7 850.2,199.4 859.1,199.4 859.2,191.7" fill="#fffffa"/>
<polygon points="744.8,154.9 758.4,155.0 757.9,142.2 744.5,142.1" fill="#fffcf0"/>
<polygon points="704.6,141.8 717.9,141.9 718.1,129.1 705.1,129.0" fill="#fffffa"/>
<polygon points="718.3,116.2 730.5,116.3 728.6,106.4 718.5,106.4" fill="#fffffa"/>
<polygon points="692.2,128.9 705.1,129.0 706.1,116.1 693.9,116.1" fill="#fffffa"/>
<polygon points="957.0,171.3 962.0,170.7 961.3,162.3 956.4,162.9" fill="#d2cdbb"/>
<polygon points="717.9,141.9 731.2,142.0 731.0,129.2 718.1,129.1" fill="#fffffa"/>
<polygon points="730.5,116.3 742.7,116.3 738.7,106.5 728.6,106.4" fill="#fffffa"/>
<polygon points="961.3,162.3 963.7,161.5 963.1,146.1 960.8,146.9" fill="#fdf7e2"/>
<polygon points="705.1,129.0 718.1,129.1 718.3,116.2 706.1,116.1" fill="#fffffa"/>
<polygon points="742.7,116.3 754.9,116.4 748.8,106.5 738.7,106.5" fill="#fffffa"/>
<polygon points="731.2,142.0 744.5,142.1 743.9,129.2 731.0,129.2" fill="#fffffa"/>
<polygon points="718.1,129.1 731.0,129.2 730.5,116.3 718.3,116.2" fill="#fffffa"/>
<polygon points="911.6,171.2 921.2,171.5 921.8,163.1 912.5,162.8" fill="#c2bdad"/>
<polygon points="744.5,142.1 757.9,142.2 756.9,129.3 743.9,129.2" fill="#fffffa"/>
<polygon points="731.0,129.2 743.9,129.2 742.7,116.3 730.5,116.3" fill="#fffffa"/>
<polygon points="743.9,129.2 756.9,129.3 754.9,116.4 742.7,116.3" fill="#fffffa"/>
<polygon points="947.9,171.5 957.0,171.3 956.4,162.9 947.6,163.1" fill="#cbc6b5"/>
<polygon points="921.2,171.5 947.9,171.5 947.6,163.1 921.8,163.1" fill="#c7c2b2"/>
<polygon points="906.7,162.3 912.5,162.8 912.8,147.4 907.0,146.9" fill="#d9d4c2"/>
<polygon points="956.4,162.9 961.3,162.3 960.8,146.9 956.0,147.4" fill="#f9f3df"/>
<polygon points="912.5,162.8 921.8,163.1 921.9,147.6 912.8,147.4" fill="#e6e1ce"/>
<polygon points="916.1,144.2 919.0,145.1 919.3,136.5 916.3,135.7" fill="#d2cdbc"/>
<polygon points="947.6,163.1 956.4,162.9 956.0,147.4 947.3,147.6" fill="#f1ebd7"/>
<polygon points="921.8,163.1 947.6,163.1 947.3,147.6 921.9,147.6" fill="#ece6d3"/>
<polygon points="943.2,143.8 944.1,142.8 944.4,134.2 943.4,135.2" fill="#fffae7"/>
<polygon points="919.0,145.1 924.2,145.3 924.4,136.6 919.3,136.5" fill="#e4dfcc"/>
<polygon points="938.8,144.5 943.2,143.8 943.4,135.2 939.1,135.9" fill="#fdf7e2"/>
<polygon points="924.2,145.3 938.8,144.5 939.1,135.9 924.4,136.6" fill="#f2edd9"/>
<polygon points="752.8,239.7 758.0,231.4 760.0,225.4 754.6,234.1" fill="#c9c5b4"/>
<polygon points="676.1,224.6 678.2,233.3 677.3,204.4 675.1,196.6" fill="#d5d0be"/>
<polygon points="754.6,234.1 760.0,225.4 761.0,197.4 755.6,205.0" fill="#f1ebd7"/>
<polygon points="675.1,196.6 677.3,204.4 688.1,209.5 706.2,209.6 724.4,209.8 742.6,209.9 755.6,205.0 761.0,197.4 761.1,193.8 676.5,193.1" fill="#fffffa"/>
<polygon points="680.2,238.9 690.3,244.4 688.7,239.1 678.2,233.3" fill="#b7b3a4"/>
<polygon points="740.8,244.9 752.8,239.7 754.6,234.1 742.0,239.6" fill="#cbc6b5"/>
<polygon points="678.2,233.3 688.7,239.1 688.1,209.5 677.3,204.4" fill="#dad5c3"/>
<polygon points="742.0,239.6 754.6,234.1 755.6,205.0 742.6,209.9" fill="#f3eeda"/>
<polygon points="690.3,244.4 707.1,244.6 706.4,239.2 688.7,239.1" fill="#c5c1b0"/>
<polygon points="707.1,244.6 723.9,244.8 724.2,239.4 706.4,239.2" fill="#c5c1b0"/>
<polygon points="723.9,244.8 740.8,244.9 742.0,239.6 724.2,239.4" fill="#c5c1b0"/>
<polygon points="688.7,239.1 706.4,239.2 706.2,209.6 688.1,209.5" fill="#ede8d4"/>
<polygon points="706.4,239.2 724.2,239.4 724.4,209.8 706.2,209.6" fill="#ede8d4"/>
<polygon points="724.2,239.4 742.0,239.6 742.6,209.9 724.4,209.8" fill="#ede8d4"/></g></svg>
</div>
<div class="abs" style="left:693.5px;top:54px;font-size:10px;line-height:12px;color:#2a2a2a">Perspective</div>
<div class="tab on" style="left:9px">Mod</div><div class="tab" style="left:46px">Sel</div><div class="tab" style="left:83px">UV</div>
<div class="btn" style="top:93px;padding-left:8px">Append Polygon</div>
<div class="btn" style="top:116px">Bevel</div>
<div class="btn" style="top:139px">Break</div>
<div class="btn" style="top:162px">Cut</div>
<div class="btn" style="top:185px">Extrude</div>
<div class="btn" style="top:208px">Flatten</div>
<div class="btn" style="top:231px">Inset Scale</div>
<div class="btn" style="top:254px">Local Move</div>
<div class="btn" style="top:277px">Merge</div>
<div class="btn" style="top:300px">Paint Displacement</div>
<div class="btn" style="top:323px">Slide</div>
<div class="btn" style="top:346px">Smooth</div>
<div class="btn" style="top:369px">Spin Edge</div>
<div class="btn" style="top:392px">Split Loop</div>
<div class="btn" style="top:415px">Surface Tool</div>
<div class="btn" style="top:449px">Select Loop</div>
<div class="btn" style="top:472px">Select Path</div>
<div class="btn" style="top:495px">Grow Selection</div>
<div class="btn" style="top:518px">Shrink Selection</div>
<div class="tb" style="left:530.2px"><svg width="29" height="29" viewBox="0 0 28.5 28.8" style="position:absolute;left:0;top:0"><path d="M14.3 4.3 L22.7 8.8 L14.3 13.2 L5.8 8.8Z" fill="#7c7c7c"/><path d="M5.8 8.8 L14.3 13.2 L14.3 23.8 L5.8 18.8Z" fill="#373737"/><path d="M14.3 13.2 L22.7 8.8 L22.7 18.8 L14.3 23.8Z" fill="#555"/><circle cx="22.3" cy="9.1" r="1.6" fill="#fff"/><circle cx="14.4" cy="13.3" r="1.6" fill="#fff"/><circle cx="22.6" cy="19.6" r="1.6" fill="#fff"/><circle cx="14.6" cy="23.7" r="1.6" fill="#fff"/></svg></div>
<div class="tb" style="left:560.2px"><svg width="29" height="29" viewBox="0 0 28.5 28.8" style="position:absolute;left:0;top:0"><path d="M14.3 4.3 L22.7 8.8 L14.3 13.2 L5.8 8.8Z" fill="#7c7c7c"/><path d="M5.8 8.8 L14.3 13.2 L14.3 23.8 L5.8 18.8Z" fill="#373737"/><path d="M14.3 13.2 L22.7 8.8 L22.7 18.8 L14.3 23.8Z" fill="#555"/><rect x="13.3" y="13" width="2.2" height="11" fill="#fff"/><rect x="21.5" y="8.6" width="2.2" height="10.6" fill="#fff"/></svg></div>
<div class="tb" style="left:590.2px"><svg width="29" height="29" viewBox="0 0 28.5 28.8" style="position:absolute;left:0;top:0"><path d="M14.3 4.3 L22.7 8.8 L14.3 13.2 L5.8 8.8Z" fill="#7c7c7c"/><path d="M5.8 8.8 L14.3 13.2 L14.3 23.8 L5.8 18.8Z" fill="#373737"/><path d="M14.3 13.2 L22.7 8.8 L22.7 18.8 L14.3 23.8Z" fill="#fff"/></svg></div>
<div class="tb" style="left:620.2px"><svg width="29" height="29" viewBox="0 0 28.5 28.8" style="position:absolute;left:0;top:0"><path d="M14.3 4.3 L22.7 8.8 L14.3 13.2 L5.8 8.8Z" fill="#7c7c7c"/><path d="M5.8 8.8 L14.3 13.2 L14.3 23.8 L5.8 18.8Z" fill="#373737"/><path d="M14.3 13.2 L22.7 8.8 L22.7 18.8 L14.3 23.8Z" fill="#fff"/><path d="M5.2 8.9 L14.3 13.6" stroke="#fff" stroke-width="1.6"/><circle cx="14.3" cy="4.6" r="1.6" fill="#fff"/></svg></div>
<div class="tb on" style="left:650.2px"><svg width="29" height="29" viewBox="0 0 28.5 28.8" style="position:absolute;left:-1px;top:-1px"><path d="M14.1 6.6 L21.5 10.6 L14.1 14.7 L6.8 10.6Z" fill="#9c9c9c"/><path d="M6.8 10.6 L14.1 14.7 L14.1 23.8 L6.8 19.8Z" fill="#7c7c7c"/><path d="M14.1 14.7 L21.5 10.6 L21.5 19.8 L14.1 23.8Z" fill="#8c8c8c"/><path d="M14.1 4.4 L23.6 9.9 L23.6 20.9 L14.1 26 L4.7 20.9 L4.7 9.9Z" fill="none" stroke="#fff" stroke-width="1.5" stroke-linejoin="round"/></svg></div>
<div class="tb on" style="left:691.5px"><svg width="29" height="29" viewBox="0 0 28.5 28.8" style="position:absolute;left:-1px;top:-1px"><path d="M15 17 L15.0 6.800000000000001" stroke="#e4e4e4" stroke-width="1.4"/><path d="M15 17 L6.449999999999999 21.200000000000003" stroke="#e4e4e4" stroke-width="1.4"/><path d="M15 17 L23.1 21.200000000000003" stroke="#e4e4e4" stroke-width="1.4"/><circle cx="15" cy="17" r="2" fill="#d8d8d8"/><path d="M15.0 3.4 L17.2 9.9 L12.8 9.9Z" fill="#f2f2f2"/><path d="M3.6 22.6 L8.5 17.8 L10.4 21.7Z" fill="#f2f2f2"/><path d="M25.8 22.6 L19.0 21.6 L21.0 17.7Z" fill="#f2f2f2"/></svg></div>
<div class="tb" style="left:721.5px"><svg width="29" height="29" viewBox="0 0 28.5 28.8" style="position:absolute;left:0;top:0"><path d="M15 17 L15.0 6.800000000000001" stroke="#e4e4e4" stroke-width="1.4"/><path d="M15 17 L6.449999999999999 21.200000000000003" stroke="#e4e4e4" stroke-width="1.4"/><path d="M15 17 L23.1 21.200000000000003" stroke="#e4e4e4" stroke-width="1.4"/><circle cx="15" cy="17" r="2" fill="#d8d8d8"/><path d="M10.9 7.9 L19.1 3.9" stroke="#e8e8e8" stroke-width="2.8"/><path d="M2.0 19.2 L9.7 23.7" stroke="#e8e8e8" stroke-width="2.8"/><path d="M23.6 16.9 L23.6 25.9" stroke="#e8e8e8" stroke-width="2.8"/></svg></div>
<div class="tb" style="left:751.5px"><svg width="29" height="29" viewBox="0 0 28.5 28.8" style="position:absolute;left:0;top:0"><path d="M15 17 L15.0 6.800000000000001" stroke="#e4e4e4" stroke-width="1.4"/><path d="M15 17 L6.449999999999999 21.200000000000003" stroke="#e4e4e4" stroke-width="1.4"/><path d="M15 17 L23.1 21.200000000000003" stroke="#e4e4e4" stroke-width="1.4"/><circle cx="15" cy="17" r="2" fill="#d8d8d8"/><rect x="12.5" y="2.9" width="5" height="5" rx="1.2" fill="#dcdcdc"/><rect x="2.8" y="19.3" width="5" height="5" rx="1.2" fill="#dcdcdc"/><rect x="21.7" y="19.3" width="5" height="5" rx="1.2" fill="#dcdcdc"/></svg></div>
<div class="tb" style="left:781.5px"><svg width="29" height="29" viewBox="0 0 28.5 28.8" style="position:absolute;left:0;top:0"><path d="M15 17 L15.0 6.800000000000001" stroke="#e4e4e4" stroke-width="1.4"/><path d="M15 17 L6.449999999999999 21.200000000000003" stroke="#e4e4e4" stroke-width="1.4"/><path d="M15 17 L23.1 21.200000000000003" stroke="#e4e4e4" stroke-width="1.4"/><circle cx="15" cy="17" r="2" fill="#d8d8d8"/><path d="M15.0 3.4 L17.2 9.9 L12.8 9.9Z" fill="#f2f2f2"/><path d="M2.0 19.2 L9.7 23.7" stroke="#e8e8e8" stroke-width="2.8"/><rect x="21.7" y="19.3" width="5" height="5" rx="1.2" fill="#dcdcdc"/></svg></div>
<div class="tb" style="left:822.2px"><svg width="29" height="29" viewBox="0 0 28.5 28.8" style="position:absolute;left:0;top:0"><path d="M4.5 19.4 C4.5 12 6 8.6 7.6 8.6 C11 8.6 13 19.4 17 19.4 C21 19.4 23.2 14 23.2 8.3" fill="none" stroke="#f0f0f0" stroke-width="1.3" stroke-dasharray="2.4 1.6"/></svg></div>
<div class="tb on" style="left:852.2px"><svg width="29" height="29" viewBox="0 0 28.5 28.8" style="position:absolute;left:-1px;top:-1px"><rect x="4.9" y="8.6" width="17.8" height="12" fill="none" stroke="#f0f0f0" stroke-width="1.3" stroke-dasharray="2.4 1.6"/></svg></div>
<div class="tb" style="left:882.2px"><svg width="29" height="29" viewBox="0 0 28.5 28.8" style="position:absolute;left:0;top:0"><path d="M4.4 16 C5 11 10 8.6 15 8.6 C21 8.6 25.6 13 25.4 17 C25 21 22 20.8 19.5 19.6 C16 17.6 12 17.2 9 18.2 C6 19.4 4.2 19 4.4 16Z" fill="none" stroke="#f0f0f0" stroke-width="1.3" stroke-dasharray="2.4 1.6"/></svg></div>

<div id="status">Zoom View Out</div>
<div id="task">
<div class="tk" style="left:162px"><i></i><svg width="16" height="16" viewBox="0 0 16 16" style="position:absolute;left:7px;top:4px"><path d="M8 0.5 L15.5 8 L8 15.5 L0.5 8Z" fill="#3a3a3a" stroke="#e8e8e8" stroke-width="1.2"/><path d="M11.5 1.5 L5.5 8 L8.5 8.5 L3.5 14.5 L12 7.5 L8.5 7 Z" fill="#f59a1c" stroke="#f9c15a" stroke-width=".5"/></svg><b style="transform:scaleX(.93)">4408. Rufus Wainrig...</b></div>
<div class="tk" style="left:322px"><i></i><svg width="16" height="16" viewBox="0 0 16 16" style="position:absolute;left:7px;top:4px"><circle cx="5.5" cy="4.2" r="2.6" fill="#9fd0f0"/><path d="M1 15 C1 9 3 7.2 5.5 7.2 C8 7.2 10 9 10 15Z" fill="#4f9fdc"/><path d="M2.5 14.5 C2.5 10 4 8.6 5.5 8.6 C6.5 8.6 7.2 9.4 7.4 11 L7.4 14.5Z" fill="#a7d6f3"/><path d="M8.3 1.2 L15 1.2 L15 5 L12 5 L9.8 7.4 L10.2 5 L8.3 5Z" fill="#b9ddf5"/></svg><b style="transform:scaleX(.93)">-</b><b style="left:53px;transform:scaleX(.92)">Pappa Smurf &lt;...</b></div>
<div class="tk" style="left:482px"><i></i><svg width="16" height="16" viewBox="0 0 16 16" style="position:absolute;left:7px;top:4px"><circle cx="5.5" cy="4.2" r="2.6" fill="#9fd0f0"/><path d="M1 15 C1 9 3 7.2 5.5 7.2 C8 7.2 10 9 10 15Z" fill="#4f9fdc"/><path d="M2.5 14.5 C2.5 10 4 8.6 5.5 8.6 C6.5 8.6 7.2 9.4 7.4 11 L7.4 14.5Z" fill="#a7d6f3"/><path d="M8.3 1.2 L15 1.2 L15 5 L12 5 L9.8 7.4 L10.2 5 L8.3 5Z" fill="#b9ddf5"/></svg><b style="left:28px;transform:scaleX(.93)">Terry &lt;terence.cain...</b></div>
<div class="tk" style="left:642px"><i></i><svg width="16" height="16" viewBox="0 0 16 16" style="position:absolute;left:7px;top:4px"><rect x="0" y="0" width="16" height="16" fill="#fff"/><path d="M9.4 2.2 a1.5 1.5 0 1 0 .1 0Z" fill="#111"/><path d="M3 6.5 C5 4.2 8 4.4 10.5 5.6 L13.4 5 L10.8 7 L7.5 8.6 L11 10.2 L14.5 13.6 L10.3 11.6 L6.6 10 L2.6 13.4 L1.4 13 L5.4 9 L6.6 6.4Z" fill="#111"/></svg></div>
<div class="tk" style="left:802px"><i></i><svg width="16" height="16" viewBox="0 0 16 16" style="position:absolute;left:7px;top:4px"><path d="M2 4.5 L3.6 3.6 L8.2 14 L7 14.6Z" fill="#e8e8e8"/><path d="M10.6 6 L11.8 6.2 L10.4 14.6 L9.2 14.4Z" fill="#e8e8e8"/><path d="M9.6 11 L10.8 11.2 L10.4 14.6 L9.2 14.4Z" fill="#d92020"/><circle cx="2.6" cy="3.6" r="1.7" fill="#f0a030"/><path d="M7 1.6 C9 .2 12.6 .4 13.6 2.2 C13.4 4.4 11.6 5.6 10.6 6.4 C9.4 4.6 8 3.4 7 1.6Z" fill="#f0a838"/><path d="M7 14 L8.4 14 L8 15.6 L6.8 15.4Z" fill="#f0a030"/></svg><b style="left:28px;transform:scaleX(.93)">MechZBrushDamag...</b></div>
<div class="tk on" style="left:962px"><i></i><svg width="16" height="16" viewBox="0 0 16 16" style="position:absolute;left:7px;top:4px"><rect x="0" y="0" width="16" height="16" rx="2" fill="#000"/><path d="M12.6 1 L13.8 3.6 L13.4 6.6 L11.2 7.8 L8.6 7.2 L8 5.2 L10 4.4 L10.8 2.4Z" fill="#fff"/><path d="M10.4 7.4 L10.6 10.4 L9.4 12.2 L8.6 11.6 L9.4 9.8Z" fill="#fff"/><path d="M2.6 16 L2.4 11.4 C2.6 9 4.6 8.2 6.4 8.4 C8.4 8.6 9.4 10 9.2 11.8 L8.6 16 L6.8 16 L6.8 13.6 C6.4 12.6 5 12.6 4.6 13.6 L4.4 16Z" fill="#fff"/><circle cx="4.3" cy="10.8" r=".7" fill="#000"/><circle cx="6.9" cy="10.8" r=".7" fill="#000"/></svg><b style="left:28px;transform:scaleX(.93)">Nevercenter Silo 2.1 ...</b></div>
<svg width="60" height="36" viewBox="0 0 60 36" style="position:absolute;left:0;top:-6px">
<defs><radialGradient id="og" cx="50%" cy="35%" r="65%"><stop offset="0" stop-color="#9fd8f4"/><stop offset=".45" stop-color="#3a8fcb"/><stop offset=".8" stop-color="#174f8e"/><stop offset="1" stop-color="#0b2a55"/></radialGradient>
<linearGradient id="gl" x1="0" y1="0" x2="0" y2="1"><stop offset="0" stop-color="#fff" stop-opacity=".75"/><stop offset="1" stop-color="#fff" stop-opacity=".05"/></linearGradient></defs>
<circle cx="30" cy="22" r="20.5" fill="#0a0f18"/><circle cx="30" cy="22" r="19" fill="url(#og)" stroke="#7fb6dc" stroke-width=".8"/>
<path d="M12.5 17 A18.5 18.5 0 0 1 47.5 17 C40 21 20 21 12.5 17Z" fill="url(#gl)"/>
<path d="M21.5 11.5 C24.5 9.8 27 10 29.5 11.5 L28 19.8 C25.6 18.4 23 18.4 20 20Z" fill="#e8552a"/>
<path d="M31.2 12 C34 13.6 37 13.4 40.2 11.8 L38.6 20 C35.6 21.6 32.6 21.6 29.8 20.2Z" fill="#8cc43c"/>
<path d="M19.6 21.8 C22.6 20.2 25.2 20.2 27.7 21.6 L26.2 29.8 C23.6 28.4 21 28.6 18 30.2Z" fill="#4aa0e0"/>
<path d="M29.4 22.2 C32.2 23.6 35.2 23.6 38.2 22 L36.8 30.2 C33.6 31.8 30.8 31.6 28 30.2Z" fill="#f6c02c"/>
</svg>
<svg width="18" height="16" viewBox="0 0 18 16" style="position:absolute;left:64px;top:8px"><rect x=".5" y=".5" width="16" height="13" fill="#2f6fd0" stroke="#c9d6ea"/><rect x="1.5" y="1.5" width="14" height="8.5" fill="#4a8be6"/><rect x="1.5" y="10.5" width="14" height="2.5" fill="#1c2433"/><rect x="2.5" y="10.8" width="2" height="2" fill="#e04a2a"/></svg>
<svg width="18" height="16" viewBox="0 0 18 16" style="position:absolute;left:87px;top:8px"><rect x=".5" y=".5" width="16" height="13" fill="#1b3f9c" stroke="#c9d6ea"/><rect x="3" y="3" width="7" height="4" fill="#dfe8f4"/><rect x="3" y="3" width="7" height="1.3" fill="#2f7f8f"/><rect x="5" y="5.5" width="7" height="4" fill="#dfe8f4"/><rect x="5" y="5.5" width="7" height="1.3" fill="#2f7f8f"/><rect x="7" y="8" width="7" height="4" fill="#e8eef6"/><rect x="7" y="8" width="7" height="1.3" fill="#2f7f8f"/></svg>
<svg width="20" height="18" viewBox="0 0 20 18" style="position:absolute;left:109px;top:6px"><path d="M14.4 10.6 A5.6 5.6 0 1 1 14 6.4 L4.8 8.2 L4.8 9.8 L14.6 9.4" fill="none" stroke="#2e93e8" stroke-width="2.6"/><path d="M1.4 15.6 C-1 11 5 3.6 12 1.6 C15.6 .6 17.6 1.6 16.4 4.4" fill="none" stroke="#f0b428" stroke-width="1.5"/></svg>
<div style="position:absolute;left:144px;top:1px;color:#fff;font-size:13px;line-height:14px;font-weight:bold;letter-spacing:-1px">»</div>
<div style="position:absolute;left:1297px;top:5px;color:#fff;font-size:15px;line-height:16px;font-weight:bold;transform:scaleX(.8)">‹</div>
<svg width="18" height="18" viewBox="0 0 18 18" style="position:absolute;left:1312px;top:4px"><path d="M1 1.5 L16.5 1 L5.5 16.5Z" fill="#f0a030"/><path d="M2.6 2.4 L14.6 2 L5.8 14Z" fill="#c01818"/><path d="M6.4 4.4 L8.4 4.4 L8.8 8 L11 4 L12.6 4 L8.4 11Z" fill="#f6c040"/></svg>
<svg width="18" height="18" viewBox="0 0 18 18" style="position:absolute;left:1331px;top:5px"><circle cx="6" cy="3.6" r="2.8" fill="#a8d4f0"/><path d="M1 16 C1 9 3.4 6.8 6 6.8 C8.6 6.8 11 9 11 16Z" fill="#4f9fdc"/><path d="M3 15.6 C3 10.6 4.6 8.4 6 8.4 C7 8.4 7.8 9.4 8 11 L8 15.6Z" fill="#b0daf4"/><rect x="8.6" y="8.6" width="7.4" height="6.6" rx="1.2" fill="#58d818" stroke="#2c9a06" stroke-width=".6"/><rect x="10.4" y="11" width="3.8" height="1.8" fill="#c8f4a8"/></svg>
<svg width="18" height="18" viewBox="0 0 18 18" style="position:absolute;left:1358px;top:4px"><rect x="5.6" y=".8" width="9.4" height="7.6" fill="#2a6fc8" stroke="#e8eef8" stroke-width="1"/><rect x="1" y="4.6" width="9.6" height="7.6" fill="#2a6fc8" stroke="#e8eef8" stroke-width="1"/><path d="M3 14.4 L9 14.4 L8 12.4 L4 12.4Z" fill="#e0e6f0"/><circle cx="11.6" cy="12.4" r="3.9" fill="#1e5ad8"/><path d="M9.4 10.6 C10.6 9.6 12 10.4 11.6 11.8 C11.4 13 10 13 9.6 14.4 C8.4 13.4 8.2 11.6 9.4 10.6Z M13 10 C14.6 10.8 15.4 12.6 14.6 14.4 C13.6 14 13 13 13.4 12 C13.6 11.2 12.8 10.8 13 10Z" fill="#36c636"/></svg>
<svg width="18" height="18" viewBox="0 0 18 18" style="position:absolute;left:1376px;top:4px"><path d="M1.4 6.4 L4.2 6.4 L8.2 2 L8.2 15 L4.2 11.2 L1.4 11.2Z" fill="#f0f0f0" stroke="#8a8a8a" stroke-width=".5"/><path d="M10.4 6.4 C11.6 7.6 11.6 10 10.4 11.2" fill="none" stroke="#58d878" stroke-width="1.1"/><path d="M12.4 4.4 C14.6 6.8 14.6 10.8 12.4 13.2" fill="none" stroke="#58d878" stroke-width="1.1"/></svg>
<div style="position:absolute;left:1398px;top:6px;height:16px;line-height:16px;font-size:12px;color:#fff;white-space:nowrap;transform:scaleX(.93);transform-origin:0 50%">14:33</div>

</div>
</body></html>
